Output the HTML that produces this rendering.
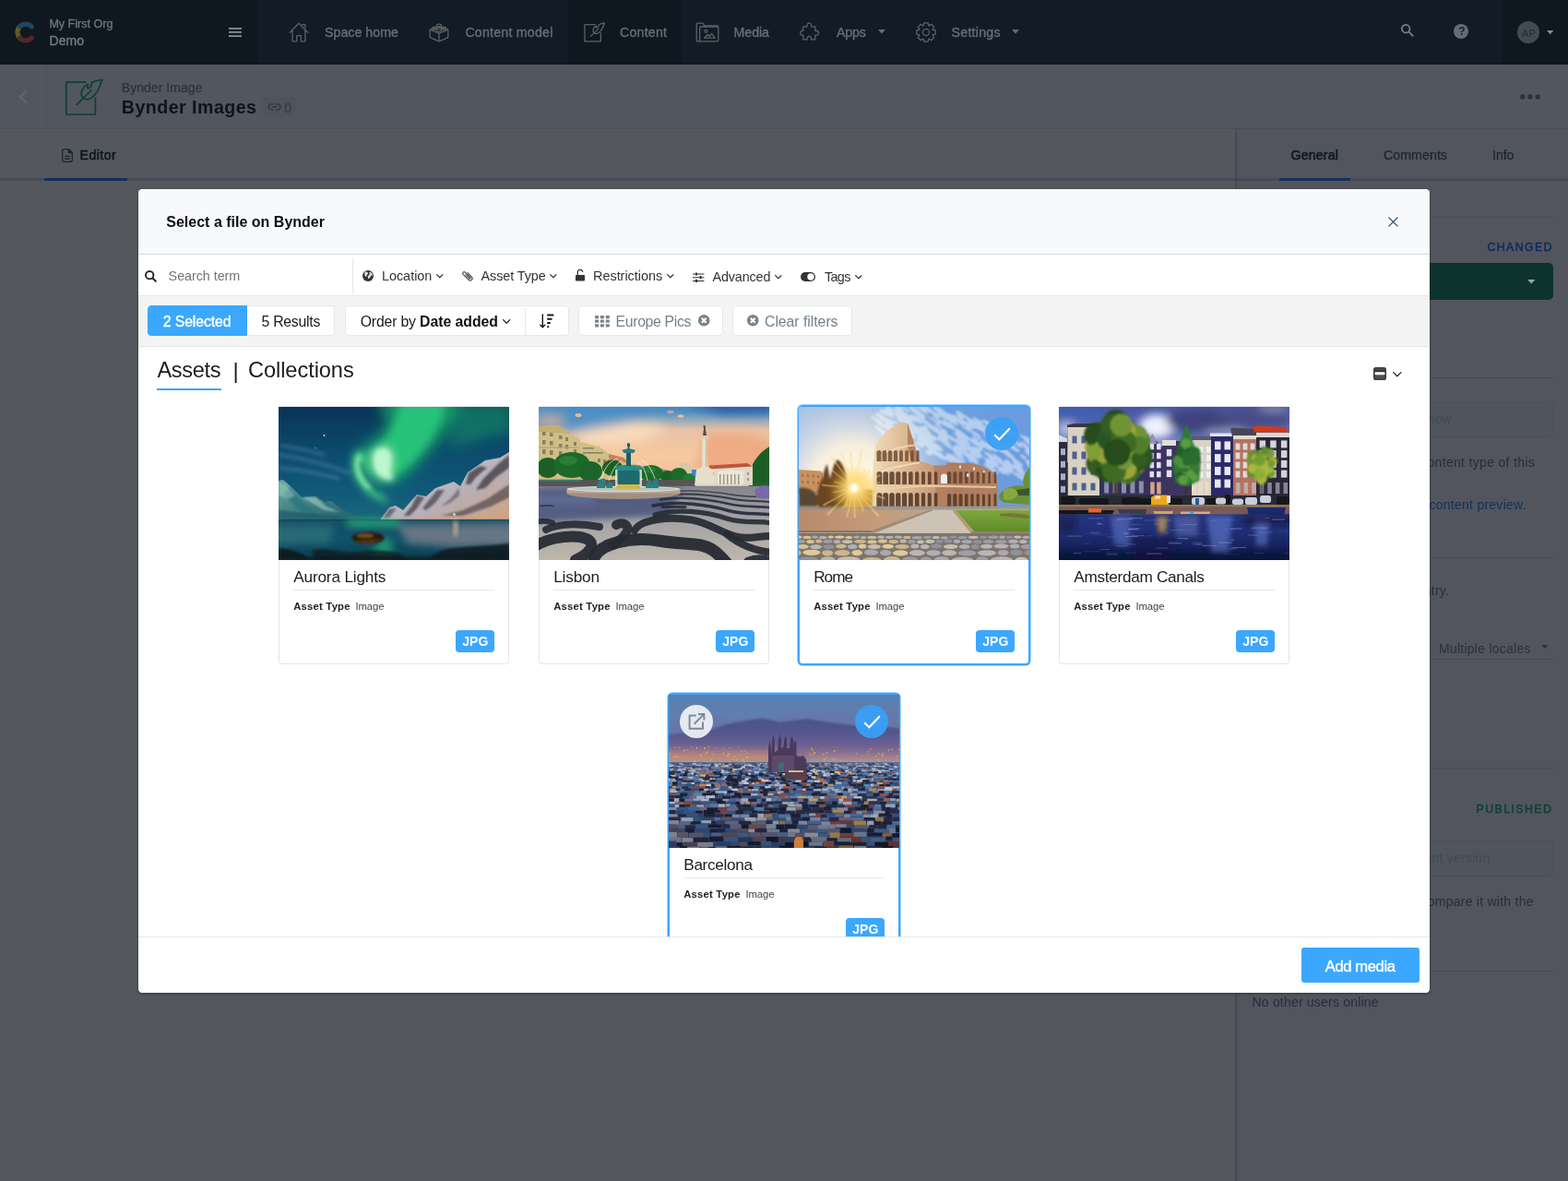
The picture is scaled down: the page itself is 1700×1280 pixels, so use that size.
<!DOCTYPE html>
<html lang="en">
<head>
<meta charset="utf-8">
<title>Bynder Images – Contentful</title>
<meta name="viewport" content="width=1700">
<style>
*{box-sizing:border-box;margin:0;padding:0}
html,body{width:1700px;height:1280px;overflow:hidden;background:#54585c}
body{position:relative;font-family:"Liberation Sans",Arial,sans-serif;font-size:14px;color:#000;-webkit-font-smoothing:antialiased}
.a,span.t,div.a,svg.a{position:absolute}
span,h1,h2,h3{position:absolute;white-space:nowrap;display:block;font-weight:400}
svg{position:absolute;display:block;overflow:visible}
i.l{position:absolute;display:block}

#nav{will-change:transform;position:absolute;left:0;top:0;width:1700px;height:70px;background:#121c26}
#nav .dk{position:absolute;top:0;height:70px;background:#0f1821}

#hdr{will-change:transform;position:absolute;left:0;top:70px;width:1700px;height:70px;background:#52565f;border-bottom:1px solid #484d55}
#tabs{will-change:transform;position:absolute;left:0;top:140px;width:1340px;height:56px;background:#54585c;border-bottom:3px solid #454c55}
#side{will-change:transform;position:absolute;left:1340px;top:140px;width:360px;height:1140px;background:#52555e;border-left:1px solid #3f474e;box-shadow:-1px 0 0 rgba(40,50,56,.22)}
#stabs{position:absolute;left:0;top:0;width:359px;height:56px;border-bottom:3px solid #454c55}
.hl{position:absolute;left:16px;width:327px;height:1px;background:#484c55}
.sh{font-size:12px;letter-spacing:1.2px;color:#3a424c;font-weight:700}
.sbox{position:absolute;left:16px;width:327px;border:1px solid #4b4f58;border-radius:6px;background:#50545d}

#modal{will-change:transform;position:absolute;left:150px;top:205px;width:1400px;height:871px;background:#fff;border-radius:4.500px;overflow:hidden;box-shadow:0 1px 3px rgba(0,0,0,.4)}
#mh{position:absolute;left:0;top:0;width:1400px;height:71px;background:#f8f9fb;border-bottom:1px solid #d3dae0}
#fb{position:absolute;left:0;top:71px;width:1400px;height:45px;background:#fff;border-bottom:1px solid #e5e8ee}
#tb{position:absolute;left:0;top:116px;width:1400px;height:55px;background:#f4f4f4;border-bottom:1px solid #e3e6ec}
.btn{position:absolute;top:10px;height:33px;background:#fff;border:1px solid #e4e7ee;border-radius:4px}
#grid{position:absolute;left:0;top:171px;width:1400px;height:639px;overflow:hidden}
.card{position:absolute;width:250px;height:280px;background:#fff;border:1px solid #e3e5ee;border-radius:4px}
.card .ph{position:absolute;left:-1px;top:0;width:250px;height:166px;overflow:hidden;background:#456}
.card .dv{position:absolute;left:15px;top:198px;width:218px;height:1px;background:#e6e8ef}
.card .jpg{position:absolute;left:191px;top:242px;width:42px;height:24px;border-radius:4px;background:#3ba7ff}
.card.sel{box-shadow:0 0 0 1.500px #3ba7ff;border-color:#3ba7ff;border-radius:4px}
.chk{position:absolute;left:201px;top:11px;width:36px;height:36px;border-radius:50%;background:rgba(57,160,246,.95)}
.ext{position:absolute;left:11px;top:11px;width:36px;height:36px;border-radius:50%;background:rgba(240,242,247,.93)}
#mf{position:absolute;left:0;top:810px;width:1400px;height:61px;background:#fff;border-top:1px solid #e3e7ec}
#add{position:absolute;left:1261px;top:11px;width:128px;height:37.500px;border-radius:3px;background:#3ba7ff}
</style>
</head>
<body>
<nav id="nav" aria-label="Main navigation">
<div class="dk" style="left:0;width:280px"></div>
<div class="dk" style="left:616px;width:123px"></div>
<div class="dk" style="left:1629px;width:71px"></div>
<svg style="left:14px;top:21px" width="26" height="28" viewBox="0 0 26 28" fill="none" stroke-linecap="round" stroke-width="5.2">
<path d="M7.6 20.300A8.900 8.900 0 0 1 7.6 7.700" stroke="#5e5e1f"/>
<path d="M7.600 7.700A8.900 8.900 0 0 1 20.300 7.900" stroke="#1e475b"/>
<path d="M7.600 20.300A8.900 8.900 0 0 0 20.300 20.100" stroke="#552529"/>
</svg>
<span style="left:53.40px;top:20px;font-size:12.5px;line-height:12.5px;letter-spacing:0.023px;-webkit-text-stroke:0.3px #70767d;color:#70767d;">My First Org</span>
<span style="left:53.60px;top:37px;font-size:14.0px;line-height:14.0px;letter-spacing:0.008px;-webkit-text-stroke:0.35px #757b82;color:#757b82;">Demo</span>
<svg style="left:248px;top:30px" width="14" height="10" viewBox="0 0 14 10"><path d="M0 0h14v1.7H0zM0 4.1h14v1.7H0zM0 8.2h14v1.7H0z" fill="#8a8f95"/></svg>
<svg style="left:313px;top:24px" width="22" height="22" viewBox="0 0 22 22" fill="none" stroke="#5c6167" stroke-width="1.300" stroke-linejoin="round" stroke-linecap="round">
<path d="M1.2 11.2L11 1.3l9.8 9.9"/><path d="M4.1 8.6v12.3h4.6v-6.3h4.6v6.3h4.6V8.6"/><path d="M14.6 2.6h3.3v3.6"/></svg>
<span style="left:352.00px;top:28px;font-size:14.2px;line-height:14.2px;letter-spacing:0.028px;-webkit-text-stroke:0.35px #696d73;color:#696d73;">Space home</span>
<svg style="left:465px;top:24px" width="22" height="22" viewBox="0 0 22 22" fill="none" stroke="#5c6167" stroke-width="1.300" stroke-linejoin="round">
<path d="M1.2 8.2l9.8-3.4 9.8 3.4v8.4L11 20.8 1.2 16.6z"/><path d="M1.2 8.2L11 12.2l9.8-4M11 12.2v8.6"/>
<ellipse cx="11" cy="3.6" rx="2.6" ry="1.5"/><ellipse cx="6" cy="6.6" rx="2.4" ry="1.4"/><ellipse cx="16" cy="6.6" rx="2.4" ry="1.4"/><ellipse cx="11" cy="8.4" rx="2.6" ry="1.5"/></svg>
<span style="left:504.40px;top:28px;font-size:14.2px;line-height:14.2px;letter-spacing:0.219px;-webkit-text-stroke:0.35px #696d73;color:#696d73;">Content model</span>
<svg style="left:633px;top:24px" width="23" height="22" viewBox="0 0 42 42" preserveAspectRatio="none" fill="none" stroke="#5c6167" stroke-width="2.400" stroke-linejoin="round" stroke-linecap="round">
<path d="M22.800 5.100H1.800v34.900h31.600V22.200"/><path d="M40.900 2.300C38 2.600 33 3.600 29.600 5.300L28.900 8.800C28.400 10.200 27.200 11.300 26.100 11.600L24.700 11.200L24.900 7.400C22.500 8.500 19.800 11.500 18.600 14.800C17.600 17.800 18.400 20.600 20 21.900C21.200 23 22.400 23.600 23.800 23.800C25.600 23.900 27.400 23.200 28.500 22.400C30.400 21.200 32 19.600 33.100 18.200C34.800 16.400 36 14.200 36.900 12.100C38.400 9 39.600 5.600 40.900 2.300Z"/><path d="M28.900 14L13.200 29.400"/></svg>
<span style="left:672.00px;top:28px;font-size:14.2px;line-height:14.2px;letter-spacing:0.208px;-webkit-text-stroke:0.35px #696d73;color:#696d73;">Content</span>
<svg style="left:754px;top:24px" width="26" height="22" viewBox="0 0 26 22" fill="none" stroke="#5c6167" stroke-width="1.300" stroke-linejoin="round" stroke-linecap="round">
<path d="M4.600 20.800H2.400c-.7 0-1.200-.5-1.200-1.200V2.400c0-.7.5-1.200 1.200-1.200h5.400c.7 0 1.200.5 1.200 1.200v1.400h14.600c.7 0 1.200.5 1.200 1.200"/><rect x="4.600" y="5.000" width="20.200" height="15.800" rx="1.200"/><circle cx="11.400" cy="9.800" r="1.500"/><path d="M9.600 17.200l3.600-3.800 2 2 2.400-3 3.600 4.800z"/></svg>
<span style="left:795.60px;top:28px;font-size:14.2px;line-height:14.2px;letter-spacing:-0.072px;-webkit-text-stroke:0.35px #696d73;color:#696d73;">Media</span>
<svg style="left:867px;top:24px" width="22" height="22" viewBox="0 0 22 22" fill="none" stroke="#5c6167" stroke-width="1.300" stroke-linejoin="round" stroke-linecap="round">
<path d="M8 4.8C7.400 2.800 8.600 1.200 10.300 1.200s2.900 1.600 2.300 3.600h4.200v4.600c2-.6 3.800.5 3.800 2.300s-1.800 2.900-3.800 2.300v4.800h-4.400c.6-2-.4-3.400-2.100-3.400s-2.700 1.400-2.100 3.400H3.800V14c-2 .6-3-.6-3-2.300s1-2.900 3-2.300V4.800z"/></svg>
<span style="left:907.00px;top:28px;font-size:14.2px;line-height:14.2px;letter-spacing:-0.125px;-webkit-text-stroke:0.35px #696d73;color:#696d73;">Apps</span>
<svg style="left:952px;top:32px" width="8" height="4.5" viewBox="0 0 8 4.5"><path d="M0 0H8L4.0 4.5Z" fill="#696d73"/></svg>
<svg style="left:992.5px;top:23.7px" width="22" height="22" viewBox="0 0 22 22" fill="none" stroke="#5c6167" stroke-width="1.300" stroke-linejoin="round"><path d="M8.93 0.81L13.07 0.81L13.75 3.70L14.22 3.90L16.75 2.33L19.67 5.25L18.10 7.78L18.30 8.25L21.19 8.93L21.19 13.07L18.30 13.75L18.10 14.22L19.67 16.75L16.75 19.67L14.22 18.10L13.75 18.30L13.07 21.19L8.93 21.19L8.25 18.30L7.78 18.10L5.25 19.67L2.33 16.75L3.90 14.22L3.70 13.75L0.81 13.07L0.81 8.93L3.70 8.25L3.90 7.78L2.33 5.25L5.25 2.33L7.78 3.90L8.25 3.70Z"/><circle cx="11" cy="11" r="3.6"/></svg>
<span style="left:1031.60px;top:28px;font-size:14.2px;line-height:14.2px;letter-spacing:0.241px;-webkit-text-stroke:0.35px #696d73;color:#696d73;">Settings</span>
<svg style="left:1097px;top:32px" width="8" height="4.5" viewBox="0 0 8 4.5"><path d="M0 0H8L4.0 4.5Z" fill="#696d73"/></svg>
<svg style="left:1518px;top:25px" width="16" height="16" viewBox="0 0 16 16" fill="none" stroke="#7a8087" stroke-width="1.7" stroke-linecap="round"><circle cx="6.2" cy="6.2" r="4.300"/><path d="M9.600 9.600l4.200 4.200"/></svg>
<div class="a" style="left:1576px;top:25.800px;width:16.200px;height:16.200px;border-radius:50%;background:#666c73"></div>
<span style="left:1581.30px;top:28px;font-size:12.0px;line-height:12.0px;font-weight:700;color:#121c26;">?</span>
<div class="a" style="left:1644.800px;top:22.800px;width:24.400px;height:24.400px;border-radius:50%;background:#434a52"></div>
<span style="left:1649.40px;top:31px;font-size:11.5px;line-height:11.5px;letter-spacing:0.287px;color:#252d36;">AP</span>
<svg style="left:1677px;top:32.8px" width="7.4" height="4.2" viewBox="0 0 7.4 4.2"><path d="M0 0H7.4L3.7 4.2Z" fill="#8a8f95"/></svg>
</nav><header id="hdr">
<svg style="left:19.500px;top:27px" width="11" height="16" viewBox="0 0 11 16" fill="none" stroke="#626870" stroke-width="1.8"><path d="M9.600 .8L1.600 8l8 7.200"/></svg>
<i class="l" style="left:50px;top:0;width:1px;height:69px;background:#4d525a"></i>
<svg style="left:70px;top:14px" width="42" height="42" viewBox="0 0 42 42" fill="none" stroke="#0b4231" stroke-width="1.700" stroke-linejoin="round" stroke-linecap="round">
<path d="M22.800 5.100H1.800v34.900h31.600V22.200"/><path d="M40.900 2.300C38 2.600 33 3.600 29.600 5.300L28.900 8.800C28.400 10.200 27.200 11.300 26.100 11.600L24.700 11.200L24.900 7.400C22.500 8.500 19.800 11.500 18.600 14.800C17.600 17.800 18.400 20.600 20 21.900C21.200 23 22.400 23.600 23.800 23.800C25.600 23.900 27.400 23.200 28.500 22.400C30.400 21.200 32 19.600 33.100 18.200C34.800 16.400 36 14.200 36.900 12.100C38.400 9 39.600 5.600 40.900 2.300Z"/><path d="M28.900 14L13.200 29.400"/></svg>
<span style="left:131.75px;top:18px;font-size:14.0px;line-height:14.0px;letter-spacing:0.051px;-webkit-text-stroke:0.2px #2a323c;color:#2a323c;">Bynder Image</span>
<h1 style="left:131.75px;top:37px;font-size:19.6px;line-height:19.6px;font-weight:700;letter-spacing:0.479px;color:#0c141d;">Bynder Images</h1>
<div class="a" style="left:283px;top:35.500px;width:37.500px;height:20px;border-radius:4px;background:#4f535c"></div>
<svg style="left:289.500px;top:42px" width="15" height="8" viewBox="0 0 15 8" fill="none" stroke="#2f3741" stroke-width="1.4" stroke-linecap="round"><path d="M6 .9H4.200a3.100 3.100 0 0 0 0 6.200H6M9 .9h1.800a3.100 3.100 0 0 1 0 6.200H9M4.800 4h5.400"/></svg>
<span style="left:308.25px;top:40px;font-size:14.0px;line-height:14.0px;color:#2f3741;">0</span>
<svg style="left:1648px;top:32px" width="22" height="6" viewBox="0 0 22 6" fill="#2a323c"><circle cx="2.800" cy="3" r="2.700"/><circle cx="11" cy="3" r="2.700"/><circle cx="19.200" cy="3" r="2.700"/></svg>
</header>
<div id="tabs">
<svg style="left:67px;top:20.500px" width="12" height="15" viewBox="0 0 12 15" fill="none" stroke="#1a232e" stroke-width="1.3" stroke-linejoin="round"><path d="M.7 2.200c0-.8.700-1.500 1.500-1.500h5.300l3.800 3.800v8.300c0 .8-.7 1.500-1.500 1.500H2.200c-.8 0-1.500-.7-1.500-1.500z"/><path d="M7.400 .9v3.700h3.700" fill="#1a232e"/><path d="M3.200 8.300h5.600M3.200 11h5.600"/></svg>
<span style="left:86.50px;top:21px;font-size:14.2px;line-height:14.2px;letter-spacing:0.447px;-webkit-text-stroke:0.55px #0f1822;color:#0f1822;">Editor</span>
<i class="l" style="left:48px;top:53px;width:90px;height:3px;background:#10305c"></i>
</div>
<aside id="side" aria-label="Entry sidebar">
<div id="stabs">
<span style="left:58.50px;top:21px;font-size:14.2px;line-height:14.2px;letter-spacing:0.167px;-webkit-text-stroke:0.55px #0f1822;color:#0f1822;">General</span>
<span style="left:159.00px;top:21px;font-size:14.2px;line-height:14.2px;letter-spacing:0.054px;-webkit-text-stroke:0.2px #1b242e;color:#1b242e;">Comments</span>
<span style="left:277.00px;top:21px;font-size:14.2px;line-height:14.2px;letter-spacing:-0.062px;-webkit-text-stroke:0.2px #1b242e;color:#1b242e;">Info</span>
<i class="l" style="left:46px;top:53px;width:77px;height:3px;background:#10305c"></i>
</div>
<span class="sh" style="left:16.50px;top:76px;font-size:12.0px;line-height:12.0px;font-weight:700;color:#3a424c;">STATUS</span>
<i class="hl" style="top:95.0px"></i>
<span style="left:271.50px;top:122px;font-size:12.4px;line-height:12.4px;letter-spacing:1.333px;-webkit-text-stroke:0.45px #0d2a5e;color:#0d2a5e;">CHANGED</span>
<div class="a" style="left:16px;top:145px;width:327px;height:39.500px;border-radius:5px;background:#0d332d"></div>
<svg style="left:314.79999999999995px;top:162.8px" width="8.500" height="4.600" viewBox="0 0 8.500 4.600"><path d="M0 0h8.500L4.250 4.600z" fill="#98a3a5"/></svg>
<span class="sh" style="left:16.50px;top:250px;font-size:12.0px;line-height:12.0px;font-weight:700;color:#3a424c;">PREVIEW</span>
<i class="hl" style="top:269.0px"></i>
<div class="sbox" style="top:294.5px;height:39px"></div>
<span style="left:145.50px;top:307px;font-size:14.0px;line-height:14.0px;letter-spacing:0.074px;color:#434a53;">Open preview</span>
<span style="left:16.50px;top:354px;font-size:14.0px;line-height:14.0px;letter-spacing:0.316px;color:#262e38;">No preview is set up for the content type of this</span>
<span style="left:16.50px;top:377px;font-size:14.0px;line-height:14.0px;color:#262e38;">entry.</span>
<span style="left:16.50px;top:400px;font-size:14.0px;line-height:14.0px;letter-spacing:0.254px;color:#10305c;">Click here to set up a custom content preview.</span>
<span class="sh" style="left:16.50px;top:445px;font-size:12.0px;line-height:12.0px;font-weight:700;color:#3a424c;">LINKS</span>
<i class="hl" style="top:464.0px"></i>
<span style="left:16.50px;top:493px;font-size:14.0px;line-height:14.0px;letter-spacing:0.282px;color:#262e38;">No other entries link to this entry.</span>
<span class="sh" style="left:16.50px;top:556px;font-size:12.0px;line-height:12.0px;font-weight:700;color:#3a424c;">TRANSLATION</span>
<span style="left:219.00px;top:556px;font-size:14.0px;line-height:14.0px;letter-spacing:0.254px;color:#2a323c;">Multiple locales</span>
<svg style="left:330px;top:559.3px" width="7.600" height="4" viewBox="0 0 7.600 4"><path d="M0 0h7.600L3.800 4z" fill="#2a323c"/></svg>
<i class="hl" style="top:574.3px"></i>
<span class="sh" style="left:16.50px;top:673px;font-size:12.0px;line-height:12.0px;font-weight:700;color:#3a424c;">VERSIONS</span>
<i class="hl" style="top:692.3px"></i>
<span style="left:259.50px;top:731px;font-size:12.4px;line-height:12.4px;letter-spacing:1.398px;-webkit-text-stroke:0.45px #0a4233;color:#0a4233;">PUBLISHED</span>
<div class="sbox" style="top:770.5px;height:39px"></div>
<span style="left:84.00px;top:783px;font-size:14.0px;line-height:14.0px;letter-spacing:0.282px;color:#434a53;">Compare with current version</span>
<span style="left:16.50px;top:830px;font-size:14.0px;line-height:14.0px;letter-spacing:0.247px;color:#262e38;">Select a previous version to compare it with the</span>
<span style="left:16.50px;top:854px;font-size:14.0px;line-height:14.0px;color:#262e38;">current version of this entry.</span>
<span class="sh" style="left:16.50px;top:893px;font-size:12.0px;line-height:12.0px;font-weight:700;color:#3a424c;">USERS</span>
<i class="hl" style="top:912.3px"></i>
<span style="left:16.50px;top:939px;font-size:14.0px;line-height:14.0px;letter-spacing:0.197px;color:#262e38;">No other users online</span>
</aside><div id="modal" role="dialog" aria-modal="true" aria-label="Select a file on Bynder">
<div id="mh">
<h2 style="left:30.25px;top:28px;font-size:16.0px;line-height:16.0px;font-weight:700;letter-spacing:0.006px;color:#0a0e14;">Select a file on Bynder</h2>
<svg style="left:1354.500px;top:29.500px" width="11" height="11" viewBox="0 0 11 11" fill="none" stroke="#2b4a6b" stroke-width="1.300"><path d="M.6 .6l9.800 9.800M10.400 .6L.6 10.400"/></svg>
</div>
<div id="fb">
<svg style="left:7.100px;top:16.500px" width="13" height="13" viewBox="0 0 13 13" fill="none" stroke="#222" stroke-width="1.900" stroke-linecap="round"><circle cx="5.200" cy="5.200" r="4.200"/><path d="M8.500 8.500l3.400 3.300"/></svg>
<span style="left:32.60px;top:16px;font-size:14.4px;line-height:14.4px;letter-spacing:-0.064px;color:#757575;">Search term</span>
<i class="l" style="left:232px;top:4px;width:1px;height:38px;background:#e4e7ee"></i>
<svg style="left:242.600px;top:17.300px" width="12" height="12" viewBox="0 0 12 12"><circle cx="6" cy="6" r="6" fill="#333"/><path d="M3.200 1.600c1.200-.2 2 .4 2.600 1.200.6.800-.4 1.400-1 2.200-.5.700.2 1.600-.6 1.800-.8.200-1.400-.8-1.800-1.600-.4-.8-.2-2.800.8-3.600zM7.400 2.400c.8-.6 2-.2 2.800.8.600.8.800 1.800.6 2.600-.6.400-1-.6-1.600-.2-.6.400-.2 1.400-.8 2-.6.600-1.400 1.800-2.200 1.400-.6-.4.200-1.200-.2-1.800-.4-.6-.2-1.400.6-1.800.8-.4 1.400-.8 1-1.600-.2-.6-.6-1-.2-1.400z" fill="#fff" opacity=".85"/></svg>
<span style="left:263.90px;top:16px;font-size:14.4px;line-height:14.4px;letter-spacing:0.009px;color:#333;">Location</span>
<svg style="left:322.5px;top:21.4px" width="7.6" height="4.4" viewBox="0 0 7.6 4.4" fill="none" stroke="#333" stroke-width="1.2" stroke-linecap="round" stroke-linejoin="round"><path d="M.6 .6L3.8 3.8000000000000003L7.0 .6"/></svg>
<svg style="left:350.500px;top:17.200px" width="12" height="12" viewBox="-6 -6 12 12" fill="none" stroke="#4c4c4c" stroke-width="1.150" stroke-linecap="round"><path transform="rotate(-45)" d="M2.300-2.500V3.900A2.300 2.300 0 0 1-2.300 3.900V-4.600A1.550 1.550 0 0 1 .8-4.600V3.300A.75.75 0 0 1-.7 3.300V-2.300"/></svg>
<span style="left:371.60px;top:16px;font-size:14.4px;line-height:14.4px;letter-spacing:-0.089px;color:#333;">Asset Type</span>
<svg style="left:446.0px;top:21.4px" width="7.6" height="4.4" viewBox="0 0 7.6 4.4" fill="none" stroke="#333" stroke-width="1.2" stroke-linecap="round" stroke-linejoin="round"><path d="M.6 .6L3.8 3.8000000000000003L7.0 .6"/></svg>
<svg style="left:473.700px;top:16px" width="10" height="12.500" viewBox="0 0 10 12.500"><rect x="0" y="6" width="10" height="6.500" rx=".8" fill="#333"/><path d="M2.300 6V3.400a2.700 2.700 0 0 1 5.400-.6" fill="none" stroke="#333" stroke-width="1.300"/></svg>
<span style="left:493.10px;top:16px;font-size:14.4px;line-height:14.4px;letter-spacing:-0.017px;color:#333;">Restrictions</span>
<svg style="left:572.6px;top:21.4px" width="7.6" height="4.4" viewBox="0 0 7.6 4.4" fill="none" stroke="#333" stroke-width="1.2" stroke-linecap="round" stroke-linejoin="round"><path d="M.6 .6L3.8 3.8000000000000003L7.0 .6"/></svg>
<svg style="left:600.700px;top:18.600px" width="12.400" height="11.400" viewBox="0 0 12.400 11.400" fill="#333"><path d="M0 1.500h12.400v1H0zM0 5.200h12.400v1H0zM0 8.900h12.400v1H0z"/><rect x="3" y=".4" width="2" height="3.200" rx=".5"/><rect x="7.600" y="4.100" width="2" height="3.200" rx=".5"/><rect x="3" y="7.800" width="2" height="3.200" rx=".5"/></svg>
<span style="left:622.50px;top:17px;font-size:14.4px;line-height:14.4px;letter-spacing:-0.152px;color:#333;">Advanced</span>
<svg style="left:689.6px;top:21.9px" width="7.6" height="4.4" viewBox="0 0 7.6 4.4" fill="none" stroke="#333" stroke-width="1.2" stroke-linecap="round" stroke-linejoin="round"><path d="M.6 .6L3.8 3.8000000000000003L7.0 .6"/></svg>
<svg style="left:717.900px;top:19px" width="16" height="10" viewBox="0 0 16 10"><rect width="16" height="10" rx="5" fill="#333"/><circle cx="11" cy="5" r="3.700" fill="#fff"/></svg>
<span style="left:743.90px;top:17px;font-size:14.4px;line-height:14.4px;letter-spacing:-0.612px;color:#333;">Tags</span>
<svg style="left:777.0px;top:21.9px" width="7.6" height="4.4" viewBox="0 0 7.6 4.4" fill="none" stroke="#333" stroke-width="1.2" stroke-linecap="round" stroke-linejoin="round"><path d="M.6 .6L3.8 3.8000000000000003L7.0 .6"/></svg>
</div>
<div id="tb">
<div class="btn" style="left:10px;width:108px;background:#3ba7ff;border-color:#3ba7ff;border-radius:4px 0 0 4px"></div>
<div class="btn" style="left:118px;width:95px;border-left:0;border-radius:0 4px 4px 0"></div>
<span style="left:26.80px;top:20px;font-size:15.8px;line-height:15.8px;letter-spacing:-0.110px;-webkit-text-stroke:0.35px #fff;color:#fff;">2 Selected</span>
<span style="left:133.50px;top:20px;font-size:15.8px;line-height:15.8px;letter-spacing:-0.259px;color:#1a1a1a;">5 Results</span>
<div class="btn" style="left:224px;width:243px"></div>
<i class="l" style="left:419px;top:11.500px;width:1px;height:31px;background:#e4e7ee"></i>
<span style="left:240.75px;top:20px;font-size:15.8px;line-height:15.8px;letter-spacing:-0.170px;color:#1a1a1a;">Order by</span>
<span style="left:305.00px;top:20px;font-size:15.8px;line-height:15.8px;font-weight:700;letter-spacing:-0.021px;color:#111;">Date added</span>
<svg style="left:394.5px;top:25.0px" width="8.4" height="4.8" viewBox="0 0 8.4 4.8" fill="none" stroke="#222" stroke-width="1.3" stroke-linecap="round" stroke-linejoin="round"><path d="M.6 .6L4.2 4.2L7.800000000000001 .6"/></svg>
<svg style="left:435.300px;top:18.600px" width="15.500" height="16.500" viewBox="0 0 15.500 16.500" fill="none" stroke="#1a1a1a" stroke-width="1.400"><path d="M3.300 .3v14.300M.5 11.700l2.800 3 2.800-3" stroke-linejoin="round"/><path d="M8.200 1.400h7.100M8.200 5.700h5.300M8.200 10h3.500M8.200 14.300h2" stroke-width="2"/></svg>
<div class="btn" style="left:477px;width:157px"></div>
<svg style="left:494.800px;top:21px" width="15.800" height="12.400" viewBox="0 0 15.500 11" preserveAspectRatio="none" fill="#77838c"><rect width="4" height="2.800" rx=".4"/><rect x="5.750" width="4" height="2.800" rx=".4"/><rect x="11.500" width="4" height="2.800" rx=".4"/><rect y="4.100" width="4" height="2.800" rx=".4"/><rect x="5.750" y="4.100" width="4" height="2.800" rx=".4"/><rect x="11.500" y="4.100" width="4" height="2.800" rx=".4"/><rect y="8.200" width="4" height="2.800" rx=".4"/><rect x="5.750" y="8.200" width="4" height="2.800" rx=".4"/><rect x="11.500" y="8.200" width="4" height="2.800" rx=".4"/></svg>
<span style="left:517.50px;top:20px;font-size:15.8px;line-height:15.8px;letter-spacing:-0.319px;color:#73808a;">Europe Pics</span>
<svg style="left:607.0px;top:20.1px" width="12.5" height="12.5" viewBox="0 0 12 12"><circle cx="6" cy="6" r="6" fill="#77838c"/><path d="M3.700 3.700l4.600 4.600M8.300 3.700L3.700 8.300" stroke="#fff" stroke-width="2" stroke-linecap="butt"/></svg>
<div class="btn" style="left:644px;width:130px"></div>
<svg style="left:659.5px;top:20.1px" width="12.5" height="12.5" viewBox="0 0 12 12"><circle cx="6" cy="6" r="6" fill="#77838c"/><path d="M3.700 3.700l4.600 4.600M8.300 3.700L3.700 8.300" stroke="#fff" stroke-width="2" stroke-linecap="butt"/></svg>
<span style="left:679.00px;top:20px;font-size:15.8px;line-height:15.8px;letter-spacing:-0.031px;color:#73808a;">Clear filters</span>
</div>
<div id="grid">
<span style="left:20.50px;top:14px;font-size:23.6px;line-height:23.6px;letter-spacing:-0.362px;color:#1c1c1c;">Assets</span>
<span style="left:102.40px;top:14px;font-size:24.0px;line-height:24.0px;color:#1c1c1c;">|</span>
<span style="left:119.00px;top:14px;font-size:23.6px;line-height:23.6px;letter-spacing:-0.069px;color:#1c1c1c;">Collections</span>
<i class="l" style="left:20px;top:45.30000000000001px;width:70px;height:2.200px;background:#3ba7ff"></i>
<svg style="left:1338.500px;top:21.800px" width="14" height="14" viewBox="0 0 14 14"><rect width="14" height="14" rx="2.600" fill="#3c3c3c"/><rect x="1.600" y="1.400" width="10.800" height="11.200" rx="1.200" fill="#4e4e4e"/><rect x="1.600" y="3.600" width="10.800" height="1.400" fill="#2a2a2a"/><rect x="1.600" y="5.300" width="10.800" height="3" rx=".8" fill="#fff"/></svg>
<svg style="left:1359.5px;top:26.5px" width="9.6" height="5.4" viewBox="0 0 9.6 5.4" fill="none" stroke="#222" stroke-width="1.3" stroke-linecap="round" stroke-linejoin="round"><path d="M.6 .6L4.8 4.800000000000001L9.0 .6"/></svg>
<div class="card" style="left:152px;top:64px">
<div class="ph"><svg role="img" aria-label="Aurora Lights thumbnail" width="250" height="166" viewBox="0 0 250 166" preserveAspectRatio="none">
<defs>
<linearGradient id="auSky" x1="0" y1="0" x2="0" y2="1"><stop offset="0" stop-color="#093456"/><stop offset=".45" stop-color="#0d4d70"/><stop offset=".75" stop-color="#105a78"/><stop offset="1" stop-color="#1a667c"/></linearGradient>
<linearGradient id="auWat" x1="0" y1="0" x2="0" y2="1"><stop offset="0" stop-color="#114e64"/><stop offset=".5" stop-color="#10526a"/><stop offset="1" stop-color="#0b3a4c"/></linearGradient>
<linearGradient id="auMR" x1="0" y1="0" x2="1" y2="1"><stop offset="0" stop-color="#cfd4e2"/><stop offset=".6" stop-color="#b5b0ba"/><stop offset="1" stop-color="#cfa27c"/></linearGradient>
<linearGradient id="auML" x1="0" y1="0" x2="1" y2="1"><stop offset="0" stop-color="#6aa8a0"/><stop offset=".5" stop-color="#3f8082"/><stop offset="1" stop-color="#1f5866"/></linearGradient>
<filter id="auB8" x="-30%" y="-30%" width="160%" height="160%"><feGaussianBlur stdDeviation="8"/></filter>
<filter id="auB4" x="-30%" y="-30%" width="160%" height="160%"><feGaussianBlur stdDeviation="4"/></filter>
<filter id="auB2" x="-30%" y="-30%" width="160%" height="160%"><feGaussianBlur stdDeviation="2"/></filter>
<filter id="auB1" x="-30%" y="-30%" width="160%" height="160%"><feGaussianBlur stdDeviation=".8"/></filter>
</defs>
<rect width="250" height="123" fill="url(#auSky)"/>
<!-- wispy clouds left -->
<g filter="url(#auB2)" opacity=".35" fill="none" stroke="#8fb4d0" stroke-width="3"><path d="M0 52C25 55 50 62 78 72"/><path d="M0 66C20 68 45 72 66 78"/><path d="M2 42C20 44 35 48 50 52"/></g>
<!-- aurora glow -->
<g filter="url(#auB8)">
<path d="M108 -8L200 -8C190 18 172 40 154 58C142 72 128 84 112 82C94 80 82 68 86 54C92 40 112 32 120 18Z" fill="#16ae6b" opacity=".85"/>
<path d="M195 -8L255 -8L255 30C235 28 210 40 185 45Z" fill="#109a6a" opacity=".55"/>
</g>
<g filter="url(#auB4)">
<path d="M132 -5L182 -5C176 22 158 48 140 64C128 76 114 80 106 76C96 68 96 52 106 44C118 36 128 18 132 -5Z" fill="#2bc97d" opacity=".85"/>
<path d="M84 48C76 62 82 82 98 94C108 101 116 104 120 104C114 96 104 90 98 80C92 70 92 58 96 50Z" fill="#4cd98c" opacity=".9"/>
<path d="M102 46C112 40 122 42 124 52C126 62 120 72 126 78C118 84 106 78 102 68C99 60 99 52 102 46Z" fill="#9bedb8" opacity=".9"/>
</g>
<g filter="url(#auB2)">
<path d="M106 48C114 42 122 46 122 56C122 64 118 72 124 78C114 80 106 72 104 64C103 58 103 52 106 48Z" fill="#c8fad6" opacity=".8"/>
<path d="M88 52C82 64 86 78 98 88" fill="none" stroke="#8cf0b0" stroke-width="4" opacity=".8"/>
<path d="M89 60C90 74 100 84 110 92" fill="none" stroke="#0f5a6c" stroke-width="3.500" opacity=".7"/>
</g>
<!-- stars -->
<circle cx="49.500" cy="31" r=".9" fill="#cfe3ee"/><circle cx="40" cy="44.300" r=".6" fill="#a9c9dc"/>
<!-- left mountains -->
<path d="M0 80L5 79L12 85L25 98L40 97L50 103L57 102L70 112L84 118L96 122.500L0 122.500Z" fill="url(#auML)"/>
<g filter="url(#auB1)"><path d="M12 86L24 100L44 118L30 118L14 104L6 96Z" fill="#2c7480" opacity=".8"/><path d="M50 103L72 120L60 120L44 108Z" fill="#256a78" opacity=".8"/><path d="M0 112L40 116L80 121L0 122Z" fill="#1d5968" opacity=".7"/><path d="M26 98L40 98L52 108L66 114L50 112L36 104Z" fill="#a6d4c8" opacity=".6"/><path d="M0 82L8 84L18 96L10 100L0 96Z" fill="#9bcdc0" opacity=".5"/></g>
<!-- right mountains -->
<path d="M110 122.500L120 109L127 107L135 112L150 95L160 97L170 88L190 81L197 86L205 71L224 58L240 55L250 49L250 122.500Z" fill="url(#auMR)"/>
<g filter="url(#auB1)" fill="#3f363c">
<path d="M206 72L218 64L226 66L214 76L208 84L203 84Z" opacity=".75"/><path d="M250 52L238 62L222 78L214 90L224 88L236 76L250 66Z" opacity=".75"/>
<path d="M150 96L158 98L150 110L142 118L136 118L144 108Z" opacity=".7"/><path d="M172 90L180 90L170 104L160 112L156 110Z" opacity=".65"/>
<path d="M250 84L226 100L200 112L176 118L200 118L230 108L250 98Z" opacity=".6"/><path d="M120 110L128 110L120 120L113 121Z" opacity=".6"/>
<path d="M196 88L186 100L176 108L186 104L196 96Z" opacity=".5"/>
</g>
<path d="M128 121L250 118L250 123L120 123Z" fill="#d8a779" opacity=".55" filter="url(#auB1)"/>
<!-- water -->
<rect y="122" width="250" height="44" fill="url(#auWat)"/>
<rect y="121.800" width="250" height="1.400" fill="#0e3f50" opacity=".7"/>
<g filter="url(#auB4)">
<path d="M-20 128L60 128L56 148L-20 150Z" fill="#4a9288" opacity=".4"/>
<path d="M128 127L270 126L270 150L190 152L140 148Z" fill="#938a92" opacity=".65"/>
<path d="M72 123L132 123L128 129L76 129Z" fill="#2fd183" opacity=".9"/>
<path d="M112 142L122 144L124 160L98 162Z" fill="#2fc47c" opacity=".6"/>
</g>
<g filter="url(#auB2)"><path d="M190 124L194 124L193.500 140L190.500 140Z" fill="#f0c79a" opacity=".8"/></g>
<circle cx="190.500" cy="116.500" r="1.200" fill="#fff3c9"/>
<!-- rock -->
<g filter="url(#auB1)"><ellipse cx="97" cy="142" rx="17.500" ry="6.500" fill="#2c1e10"/><ellipse cx="94" cy="139.500" rx="9" ry="2.400" fill="#8a5a24" opacity=".75"/><path d="M82 145L112 143L98 150Z" fill="#5e3a18" opacity=".7"/></g>
<!-- shore -->
<g filter="url(#auB1)" fill="#0c1a1c"><path d="M0 154C10 153 24 158 32 164L36 166L0 166Z"/><path d="M36 156C50 152 64 157 80 158C96 156 112 153 132 160L140 166L40 166Z" opacity=".75"/><path d="M176 156C196 150 222 152 250 148L250 166L160 166Z" opacity=".85"/><rect y="162.500" width="250" height="3.500" opacity=".8"/></g>
</svg></div>
<h3 style="left:15.25px;top:176px;font-size:17.2px;line-height:17.2px;letter-spacing:-0.172px;color:#1c1c1c;">Aurora Lights</h3>
<i class="dv"></i>
<span style="left:15.25px;top:211px;font-size:11.3px;line-height:11.3px;font-weight:700;letter-spacing:0.201px;color:#222;">Asset Type</span>
<span style="left:82.50px;top:211px;font-size:11.3px;line-height:11.3px;letter-spacing:-0.094px;color:#444;">Image</span>
<div class="jpg"><span style="left:7.30px;top:5px;font-size:14.0px;line-height:14.0px;font-weight:700;color:#fff;">JPG</span></div>
</div>
<div class="card" style="left:434px;top:64px">
<div class="ph"><svg role="img" aria-label="Lisbon thumbnail" width="250" height="166" viewBox="0 0 250 166" preserveAspectRatio="none">
<defs>
<linearGradient id="liSky" x1="0" y1="0" x2="0" y2="1"><stop offset="0" stop-color="#3f7fb8"/><stop offset=".1" stop-color="#6f9fc0"/><stop offset=".28" stop-color="#e9c3a6"/><stop offset=".6" stop-color="#f6c9a0"/><stop offset="1" stop-color="#f3b98e"/></linearGradient>
<linearGradient id="liPav" x1="0" y1="0" x2="0" y2="1"><stop offset="0" stop-color="#7f8290"/><stop offset=".3" stop-color="#9c9ba2"/><stop offset="1" stop-color="#bdb7ab"/></linearGradient>
<filter id="liB6" x="-30%" y="-30%" width="160%" height="160%"><feGaussianBlur stdDeviation="6"/></filter>
<filter id="liB3" x="-30%" y="-30%" width="160%" height="160%"><feGaussianBlur stdDeviation="3"/></filter>
<filter id="liB1" x="-30%" y="-30%" width="160%" height="160%"><feGaussianBlur stdDeviation=".7"/></filter>
<filter id="liB05" x="-30%" y="-30%" width="160%" height="160%"><feGaussianBlur stdDeviation=".45"/></filter>
</defs>
<rect width="250" height="90" fill="url(#liSky)"/>
<g filter="url(#liB6)">
<path d="M-10 -6H260V4C220 10 190 2 150 6C120 8 100 12 80 22C60 32 40 24 20 26L-10 30Z" fill="#4b8fc4" opacity=".9"/>
<path d="M150 -8H260V6L200 8Z" fill="#2a55a6" opacity=".9"/>
<path d="M180 30C210 22 240 30 260 40V70H170Z" fill="#ee9f78" opacity=".7"/>
<path d="M40 28C70 18 110 14 140 22C120 40 80 44 50 40Z" fill="#fbe0c0" opacity=".8"/>
<ellipse cx="12" cy="15" rx="16" ry="4" fill="#f1b777" opacity=".9"/>
</g>
<g filter="url(#liB1)"><ellipse cx="43" cy="9" rx="3.500" ry="2" fill="#e9b98f"/><ellipse cx="154" cy="10" rx="3.500" ry="1.800" fill="#e9b98f"/><ellipse cx="143" cy="5.500" rx="4" ry="1.800" fill="#d9a796" opacity=".8"/></g>
<!-- left buildings -->
<g filter="url(#liB05)">
<path d="M0 21L21 20L34 29L45 35L45 38L66 43L76 51L92 55L100 62L128 66L146 70L146 80L0 80Z" fill="#cfbe86"/>
<path d="M0 21L21 20L34 29L0 27Z" fill="#c3ad72"/>
<path d="M76 51L92 55L100 62L128 66L146 70L146 73L76 56Z" fill="#c9664a" opacity=".7"/>
<g fill="#6e6a58" opacity=".75"><rect x="4" y="27" width="3.500" height="4"/><rect x="12" y="28" width="3.500" height="4"/><rect x="22" y="31" width="3.500" height="4"/><rect x="29" y="33" width="3" height="4"/><rect x="4" y="36" width="3.500" height="4.500"/><rect x="12" y="37" width="3.500" height="4.500"/><rect x="22" y="40" width="3.500" height="4.500"/><rect x="29" y="41" width="3" height="4.500"/><rect x="4" y="46" width="3.500" height="5"/><rect x="12" y="47" width="3.500" height="5"/><rect x="22" y="48" width="3.500" height="5"/><rect x="38" y="38" width="3" height="4"/><rect x="38" y="46" width="3" height="4"/><rect x="48" y="44" width="12" height="1.500"/><rect x="48" y="49" width="22" height="1.500"/><rect x="64" y="56" width="3" height="4"/><rect x="70" y="57" width="3" height="4"/></g>
<path d="M0 43H44V45H0z" fill="#b9a46a" opacity=".6"/>
<path d="M134 68L146 70L146 80L134 80Z" fill="#4a8fc8"/><path d="M159 68H171V76H159z" fill="#3d86c6"/>
<path d="M153 62L160 60L166 64L166 72L153 72Z" fill="#d6c8aa"/>
</g>
<!-- trees -->
<g filter="url(#liB1)" fill="#1f6a2c">
<ellipse cx="10" cy="66" rx="12" ry="11" fill="#1c5f28"/><ellipse cx="36" cy="63" rx="20" ry="14"/><ellipse cx="56" cy="70" rx="13" ry="11" fill="#1e652a"/><ellipse cx="80" cy="66" rx="11" ry="9" fill="#1c5f28"/>
<ellipse cx="122" cy="72" rx="13" ry="9"/><ellipse cx="140" cy="76" rx="8" ry="7" fill="#1c5f28"/><ellipse cx="152" cy="74" rx="9" ry="8"/><ellipse cx="163" cy="78" rx="7" ry="5.500" fill="#257a32"/>
<path d="M252 42C240 48 234 58 230 66C224 70 224 80 228 86L252 88Z" fill="#1c5f28"/>
<ellipse cx="32" cy="58" rx="10" ry="5" fill="#38903e" opacity=".5"/><ellipse cx="120" cy="68" rx="7" ry="3.500" fill="#38903e" opacity=".5"/>
</g>
<path d="M-5 79H170V87H-5z" fill="#55544f" filter="url(#liB1)"/>
<path d="M0 78.500H46V80.500H0z" fill="#2f8f88" opacity=".7"/>
<!-- theatre + column -->
<g filter="url(#liB05)">
<path d="M185 66.500L232 63L232 85L185 85Z" fill="#e0d8c6"/><path d="M185 63.500L226 61L232 64.500L185 67.500Z" fill="#c2543a"/>
<path d="M194 70L208 67.500L222 70L222 85L194 85Z" fill="#ece6d8"/><g fill="#8c8474" opacity=".8"><rect x="196" y="73" width="1.500" height="11"/><rect x="200" y="73" width="1.500" height="11"/><rect x="204" y="73" width="1.500" height="11"/><rect x="208" y="73" width="1.500" height="11"/><rect x="212" y="73" width="1.500" height="11"/><rect x="216" y="73" width="1.500" height="11"/><rect x="226" y="71" width="2" height="3"/><rect x="188" y="71" width="2" height="3"/><rect x="226" y="77" width="2" height="3"/><rect x="188" y="77" width="2" height="3"/></g>
<path d="M169 85L171 68L177 65L177.500 33H182.500L183 65L189 68L191 85Z" fill="#e6dfcc"/>
<path d="M176 31H184V35H176z" fill="#d9d0ba"/><path d="M178.500 20C180 19 181.500 21 181 24L182 31H178L179 24Z" fill="#5a4c48"/>
<path d="M181 35H182.500V65H181z" fill="#bfb59c" opacity=".8"/>
</g>
<!-- pavement -->
<rect y="86" width="250" height="80" fill="url(#liPav)"/>
<g filter="url(#liB3)"><path d="M-20 88H156L140 118L-20 126Z" fill="#4c587e" opacity=".9"/><path d="M150 88H270V100L160 96Z" fill="#8d8a8e" opacity=".6"/><path d="M-20 96H60V106H-20z" fill="#6a78a8" opacity=".5"/></g>
<g filter="url(#liB05)" fill="none" stroke="#262a33" stroke-linecap="round">
<path d="M150 91.500C170 89.500 190 92 212 95.500C226 98 238 96.500 252 98.500" stroke-width="1.400" opacity=".8"/>
<path d="M142 95.500C166 92.500 190 96 212 100C228 103 240 101 252 103.500" stroke-width="1.900" opacity=".85"/>
<path d="M132 100.500C160 96 186 100.500 208 105.500C226 109.500 240 107 252 109.500" stroke-width="2.600" opacity=".88"/>
<path d="M134 108.500L159 108.500" stroke-width="3.200" opacity=".85"/>
<path d="M124 107C150 101.500 184 106 206 112.500C224 117.500 238 114.500 252 117" stroke-width="3.600" opacity=".9"/>
<path d="M126 117C150 110 180 113 204 121C222 127 238 123 252 126" stroke-width="5.200" opacity=".92"/>
<path d="M104 134C110 122 140 118.500 166 122.500C186 126 198 137 216 141C230 144 240 139 254 140" stroke-width="8" opacity=".94"/>
<path d="M60 164C66 148 100 140 130 145C160 150 176 146 190 156C198 162 202 168 206 172" stroke-width="13" opacity=".96"/>
<path d="M84 128C92 124 98 128 96 134C94 140 86 146 80 150" stroke-width="10" opacity=".94"/>
<path d="M-4 151C12 141 42 137 54 144C62 150 54 160 40 166" stroke-width="12" opacity=".95"/>
<path d="M8 133C24 125 50 127 66 130" stroke-width="8" opacity=".9"/>
<path d="M-4 125C4 123 10 123.500 15 125.500" stroke-width="6" opacity=".88"/>
<path d="M204 138C216 148 234 156 254 158" stroke-width="8" opacity=".94"/>
<path d="M2 107.500C8 106.500 12 106.500 16 107.500" stroke-width="1.800" opacity=".7"/>
<path d="M226 166C236 162 246 163 254 166" stroke-width="6" opacity=".9"/>
</g>
<!-- fountain basin -->
<g filter="url(#liB05)">
<ellipse cx="92" cy="93.500" rx="61.500" ry="6.500" fill="#a28f82"/>
<path d="M30.500 89H153.500V93.500H30.500z" fill="#b9a594"/>
<ellipse cx="92" cy="89" rx="61.500" ry="3.200" fill="#e6dccb"/>
<ellipse cx="92" cy="89" rx="57" ry="2.200" fill="#b8c4c0"/>
<path d="M84 82H110V89H84z" fill="#d2b64e"/>
<path d="M85 70C90 67 104 67 110 70L110 84H85Z" fill="#1f6b6c"/>
<path d="M82 65C90 62 104 62 113 65L110 69H85Z" fill="#2a8c8a"/>
<path d="M95 47H100V64H95z" fill="#1f5f66"/><path d="M90.500 47C94 45 101 45 105 47L103 50H92.500Z" fill="#2a7c80"/><path d="M96.500 39H98.500V47H96.500z" fill="#1f5f66"/><circle cx="97.500" cy="41.500" r="1.800" fill="#1f5f66"/>
<path d="M63 86C64 80 68 76 72 78C74 82 72 86 72 88H63Z" fill="#2a7f80"/><path d="M73 88C74 82 77 80 80 82L80 88Z" fill="#2a7f80"/><path d="M116 88C116 82 119 79 122 80L122 88Z" fill="#2a7f80"/><path d="M122 88C123 80 127 76 129 78L130 88Z" fill="#2a7f80"/>
<g fill="none" stroke="#f2f4ee" stroke-width=".9" opacity=".85"><path d="M68 78C72 64 78 58 86 56"/><path d="M76 80C80 68 84 62 90 58"/><path d="M126 78C122 66 118 62 112 58"/><path d="M118 80C116 70 114 66 108 60"/></g>
<path d="M83 68H85.500V86H83z" fill="#e6ede8" opacity=".8"/><path d="M109.500 68H112V86H109.500z" fill="#e6ede8" opacity=".8"/>
</g>
<path d="M234 92C236 86 244 84 250 86V99L236 98Z" fill="#7a68a8" filter="url(#liB1)"/>
</svg></div>
<h3 style="left:15.25px;top:176px;font-size:17.2px;line-height:17.2px;letter-spacing:-0.188px;color:#1c1c1c;">Lisbon</h3>
<i class="dv"></i>
<span style="left:15.25px;top:211px;font-size:11.3px;line-height:11.3px;font-weight:700;letter-spacing:0.201px;color:#222;">Asset Type</span>
<span style="left:82.50px;top:211px;font-size:11.3px;line-height:11.3px;letter-spacing:-0.094px;color:#444;">Image</span>
<div class="jpg"><span style="left:7.30px;top:5px;font-size:14.0px;line-height:14.0px;font-weight:700;color:#fff;">JPG</span></div>
</div>
<div class="card sel" style="left:716px;top:64px">
<div class="ph"><svg role="img" aria-label="Rome thumbnail" width="250" height="166" viewBox="0 0 250 166" preserveAspectRatio="none">
<defs>
<linearGradient id="roSky" x1="0" y1="0" x2="1" y2="0"><stop offset="0" stop-color="#9dbbe0"/><stop offset=".3" stop-color="#8aaedc"/><stop offset=".6" stop-color="#6f9fdc"/><stop offset="1" stop-color="#6b9be0"/></linearGradient>
<radialGradient id="roSun" cx="60" cy="88" r="120" gradientUnits="userSpaceOnUse"><stop offset="0" stop-color="#fffdf0"/><stop offset=".15" stop-color="#fff8e2"/><stop offset=".4" stop-color="#fbf1de" stop-opacity=".95"/><stop offset=".68" stop-color="#e6e6ea" stop-opacity=".5"/><stop offset="1" stop-color="#c9d6e8" stop-opacity="0"/></radialGradient>
<linearGradient id="roCol" x1="0" y1="0" x2="1" y2="0"><stop offset="0" stop-color="#f0dcba"/><stop offset=".3" stop-color="#d9b48c"/><stop offset=".65" stop-color="#b98462"/><stop offset="1" stop-color="#b7906c"/></linearGradient>
<linearGradient id="roPla" x1="0" y1="0" x2="1" y2="0"><stop offset="0" stop-color="#b98a6c"/><stop offset=".6" stop-color="#c49c7c"/><stop offset="1" stop-color="#b9a48c"/></linearGradient>
<linearGradient id="roGr" x1="0" y1="0" x2="0" y2="1"><stop offset="0" stop-color="#7fa83a"/><stop offset="1" stop-color="#5f8a2c"/></linearGradient>
<filter id="roB5" x="-30%" y="-30%" width="160%" height="160%"><feGaussianBlur stdDeviation="5"/></filter>
<filter id="roB1" x="-30%" y="-30%" width="160%" height="160%"><feGaussianBlur stdDeviation=".8"/></filter>
<filter id="roB05" x="-30%" y="-30%" width="160%" height="160%"><feGaussianBlur stdDeviation=".4"/></filter>
</defs>
<rect width="250" height="112" fill="url(#roSky)"/>
<rect width="250" height="112" fill="url(#roSun)"/>
<g fill="#fff" opacity=".5" filter="url(#roB1)"><ellipse cx="161.9" cy="41.7" rx="8.5" ry="1.7" transform="rotate(35 161.9 41.7)"/><ellipse cx="171.3" cy="43.8" rx="4.1" ry="1.8" transform="rotate(35 171.3 43.8)"/><ellipse cx="192.1" cy="59.9" rx="3.6" ry="1.5" transform="rotate(35 192.1 59.9)"/><ellipse cx="252.0" cy="73.3" rx="6.9" ry="2.0" transform="rotate(35 252.0 73.3)"/><ellipse cx="111.8" cy="-0.8" rx="6.2" ry="1.1" transform="rotate(35 111.8 -0.8)"/><ellipse cx="117.3" cy="16.9" rx="3.2" ry="1.7" transform="rotate(35 117.3 16.9)"/><ellipse cx="173.3" cy="47.9" rx="6.0" ry="2.1" transform="rotate(35 173.3 47.9)"/><ellipse cx="162.7" cy="19.7" rx="9.0" ry="2.6" transform="rotate(35 162.7 19.7)"/><ellipse cx="227.8" cy="53.2" rx="4.9" ry="1.4" transform="rotate(35 227.8 53.2)"/><ellipse cx="134.1" cy="3.5" rx="7.6" ry="1.6" transform="rotate(35 134.1 3.5)"/><ellipse cx="228.9" cy="28.1" rx="8.7" ry="2.4" transform="rotate(35 228.9 28.1)"/><ellipse cx="85.1" cy="14.4" rx="8.5" ry="1.8" transform="rotate(35 85.1 14.4)"/><ellipse cx="99.8" cy="23.9" rx="8.8" ry="2.2" transform="rotate(35 99.8 23.9)"/><ellipse cx="105.1" cy="17.2" rx="3.6" ry="1.1" transform="rotate(35 105.1 17.2)"/><ellipse cx="180.1" cy="32.9" rx="4.1" ry="2.2" transform="rotate(35 180.1 32.9)"/><ellipse cx="104.8" cy="30.8" rx="4.3" ry="1.4" transform="rotate(35 104.8 30.8)"/><ellipse cx="250.1" cy="60.7" rx="4.8" ry="2.4" transform="rotate(35 250.1 60.7)"/><ellipse cx="120.8" cy="28.8" rx="8.1" ry="2.0" transform="rotate(35 120.8 28.8)"/><ellipse cx="121.3" cy="18.1" rx="7.6" ry="1.5" transform="rotate(35 121.3 18.1)"/><ellipse cx="135.4" cy="3.7" rx="3.5" ry="1.9" transform="rotate(35 135.4 3.7)"/><ellipse cx="126.3" cy="44.9" rx="5.2" ry="1.7" transform="rotate(35 126.3 44.9)"/><ellipse cx="248.1" cy="35.7" rx="6.4" ry="2.4" transform="rotate(35 248.1 35.7)"/><ellipse cx="116.1" cy="10.0" rx="8.5" ry="2.3" transform="rotate(35 116.1 10.0)"/><ellipse cx="127.4" cy="12.8" rx="7.4" ry="2.5" transform="rotate(35 127.4 12.8)"/><ellipse cx="235.0" cy="45.1" rx="5.5" ry="1.2" transform="rotate(35 235.0 45.1)"/><ellipse cx="186.4" cy="20.9" rx="4.1" ry="2.2" transform="rotate(35 186.4 20.9)"/><ellipse cx="96.7" cy="15.8" rx="6.4" ry="2.4" transform="rotate(35 96.7 15.8)"/><ellipse cx="189.4" cy="19.9" rx="8.5" ry="1.3" transform="rotate(35 189.4 19.9)"/><ellipse cx="87.8" cy="19.0" rx="5.7" ry="1.1" transform="rotate(35 87.8 19.0)"/><ellipse cx="115.0" cy="26.8" rx="6.4" ry="1.2" transform="rotate(35 115.0 26.8)"/><ellipse cx="251.7" cy="49.2" rx="7.1" ry="1.9" transform="rotate(35 251.7 49.2)"/><ellipse cx="108.9" cy="0.7" rx="3.1" ry="2.5" transform="rotate(35 108.9 0.7)"/><ellipse cx="204.2" cy="73.1" rx="3.1" ry="2.0" transform="rotate(35 204.2 73.1)"/><ellipse cx="167.0" cy="55.0" rx="4.9" ry="2.6" transform="rotate(35 167.0 55.0)"/><ellipse cx="210.3" cy="68.2" rx="7.4" ry="2.1" transform="rotate(35 210.3 68.2)"/><ellipse cx="219.9" cy="69.4" rx="5.1" ry="2.1" transform="rotate(35 219.9 69.4)"/><ellipse cx="238.1" cy="65.9" rx="5.5" ry="2.3" transform="rotate(35 238.1 65.9)"/><ellipse cx="231.8" cy="42.7" rx="6.7" ry="1.6" transform="rotate(35 231.8 42.7)"/><ellipse cx="184.1" cy="45.5" rx="3.5" ry="2.0" transform="rotate(35 184.1 45.5)"/><ellipse cx="253.9" cy="66.6" rx="7.4" ry="1.6" transform="rotate(35 253.9 66.6)"/><ellipse cx="210.0" cy="43.3" rx="5.6" ry="2.3" transform="rotate(35 210.0 43.3)"/><ellipse cx="166.8" cy="16.0" rx="7.2" ry="1.8" transform="rotate(35 166.8 16.0)"/><ellipse cx="128.5" cy="-1.1" rx="4.8" ry="2.1" transform="rotate(35 128.5 -1.1)"/><ellipse cx="119.4" cy="11.2" rx="8.4" ry="2.1" transform="rotate(35 119.4 11.2)"/><ellipse cx="140.6" cy="49.9" rx="4.2" ry="1.7" transform="rotate(35 140.6 49.9)"/><ellipse cx="222.0" cy="69.3" rx="8.3" ry="1.6" transform="rotate(35 222.0 69.3)"/><ellipse cx="184.1" cy="22.7" rx="3.8" ry="1.8" transform="rotate(35 184.1 22.7)"/><ellipse cx="227.3" cy="64.2" rx="7.3" ry="2.5" transform="rotate(35 227.3 64.2)"/><ellipse cx="132.1" cy="11.2" rx="5.7" ry="1.4" transform="rotate(35 132.1 11.2)"/><ellipse cx="121.4" cy="30.3" rx="6.8" ry="1.8" transform="rotate(35 121.4 30.3)"/><ellipse cx="97.7" cy="0.5" rx="8.2" ry="1.1" transform="rotate(35 97.7 0.5)"/><ellipse cx="205.5" cy="42.5" rx="4.9" ry="2.3" transform="rotate(35 205.5 42.5)"/><ellipse cx="88.2" cy="8.6" rx="5.7" ry="1.0" transform="rotate(35 88.2 8.6)"/><ellipse cx="108.9" cy="1.7" rx="6.8" ry="1.7" transform="rotate(35 108.9 1.7)"/><ellipse cx="192.1" cy="49.1" rx="7.8" ry="2.5" transform="rotate(35 192.1 49.1)"/><ellipse cx="165.8" cy="11.9" rx="3.1" ry="1.8" transform="rotate(35 165.8 11.9)"/><ellipse cx="131.3" cy="25.0" rx="7.2" ry="1.8" transform="rotate(35 131.3 25.0)"/><ellipse cx="189.5" cy="57.0" rx="5.4" ry="2.3" transform="rotate(35 189.5 57.0)"/><ellipse cx="243.5" cy="54.3" rx="3.8" ry="1.7" transform="rotate(35 243.5 54.3)"/><ellipse cx="149.1" cy="42.4" rx="8.3" ry="2.3" transform="rotate(35 149.1 42.4)"/><ellipse cx="245.5" cy="34.2" rx="6.9" ry="1.3" transform="rotate(35 245.5 34.2)"/><ellipse cx="207.7" cy="61.8" rx="6.8" ry="2.1" transform="rotate(35 207.7 61.8)"/><ellipse cx="251.7" cy="74.2" rx="6.2" ry="2.3" transform="rotate(35 251.7 74.2)"/><ellipse cx="99.1" cy="32.4" rx="6.3" ry="2.2" transform="rotate(35 99.1 32.4)"/><ellipse cx="108.9" cy="9.6" rx="6.1" ry="2.2" transform="rotate(35 108.9 9.6)"/><ellipse cx="227.8" cy="51.8" rx="8.7" ry="1.8" transform="rotate(35 227.8 51.8)"/><ellipse cx="122.6" cy="39.1" rx="4.7" ry="2.2" transform="rotate(35 122.6 39.1)"/><ellipse cx="193.6" cy="38.8" rx="8.1" ry="1.9" transform="rotate(35 193.6 38.8)"/><ellipse cx="138.0" cy="27.7" rx="8.1" ry="2.4" transform="rotate(35 138.0 27.7)"/><ellipse cx="249.6" cy="38.9" rx="6.4" ry="1.3" transform="rotate(35 249.6 38.9)"/><ellipse cx="176.1" cy="37.2" rx="6.6" ry="1.0" transform="rotate(35 176.1 37.2)"/><ellipse cx="249.8" cy="38.2" rx="5.4" ry="2.3" transform="rotate(35 249.8 38.2)"/><ellipse cx="180.7" cy="36.3" rx="7.1" ry="1.1" transform="rotate(35 180.7 36.3)"/><ellipse cx="176.6" cy="30.3" rx="8.7" ry="2.5" transform="rotate(35 176.6 30.3)"/><ellipse cx="130.8" cy="34.9" rx="3.8" ry="1.7" transform="rotate(35 130.8 34.9)"/><ellipse cx="223.7" cy="68.2" rx="5.9" ry="1.5" transform="rotate(35 223.7 68.2)"/><ellipse cx="118.0" cy="15.7" rx="7.1" ry="1.5" transform="rotate(35 118.0 15.7)"/><ellipse cx="145.4" cy="46.3" rx="3.6" ry="2.2" transform="rotate(35 145.4 46.3)"/><ellipse cx="105.9" cy="37.8" rx="4.5" ry="1.3" transform="rotate(35 105.9 37.8)"/><ellipse cx="175.2" cy="32.1" rx="5.3" ry="1.7" transform="rotate(35 175.2 32.1)"/><ellipse cx="175.0" cy="10.5" rx="4.2" ry="2.0" transform="rotate(35 175.0 10.5)"/><ellipse cx="193.5" cy="39.3" rx="8.1" ry="2.0" transform="rotate(35 193.5 39.3)"/><ellipse cx="210.9" cy="61.2" rx="8.4" ry="1.5" transform="rotate(35 210.9 61.2)"/><ellipse cx="129.1" cy="5.6" rx="8.0" ry="1.7" transform="rotate(35 129.1 5.6)"/><ellipse cx="153.5" cy="51.4" rx="3.1" ry="1.3" transform="rotate(35 153.5 51.4)"/><ellipse cx="201.0" cy="69.1" rx="8.8" ry="1.2" transform="rotate(35 201.0 69.1)"/><ellipse cx="171.0" cy="57.1" rx="6.0" ry="2.1" transform="rotate(35 171.0 57.1)"/><ellipse cx="117.1" cy="3.5" rx="3.6" ry="1.1" transform="rotate(35 117.1 3.5)"/><ellipse cx="178.8" cy="38.2" rx="6.4" ry="1.2" transform="rotate(35 178.8 38.2)"/><ellipse cx="116.4" cy="13.9" rx="8.0" ry="2.6" transform="rotate(35 116.4 13.9)"/><ellipse cx="163.6" cy="57.6" rx="5.0" ry="1.7" transform="rotate(35 163.6 57.6)"/><ellipse cx="172.6" cy="31.5" rx="6.6" ry="1.0" transform="rotate(35 172.6 31.5)"/><ellipse cx="204.2" cy="63.9" rx="4.1" ry="1.7" transform="rotate(35 204.2 63.9)"/><ellipse cx="210.7" cy="29.6" rx="4.2" ry="1.3" transform="rotate(35 210.7 29.6)"/><ellipse cx="236.8" cy="60.5" rx="7.2" ry="2.4" transform="rotate(35 236.8 60.5)"/><ellipse cx="192.0" cy="29.6" rx="6.6" ry="1.8" transform="rotate(35 192.0 29.6)"/><ellipse cx="252.1" cy="60.8" rx="4.5" ry="2.5" transform="rotate(35 252.1 60.8)"/><ellipse cx="211.6" cy="58.7" rx="7.9" ry="1.6" transform="rotate(35 211.6 58.7)"/><ellipse cx="237.4" cy="66.6" rx="7.2" ry="2.2" transform="rotate(35 237.4 66.6)"/><ellipse cx="215.1" cy="29.6" rx="7.3" ry="1.1" transform="rotate(35 215.1 29.6)"/><ellipse cx="143.1" cy="34.6" rx="3.1" ry="1.6" transform="rotate(35 143.1 34.6)"/><ellipse cx="193.6" cy="46.7" rx="4.4" ry="2.5" transform="rotate(35 193.6 46.7)"/><ellipse cx="198.2" cy="24.3" rx="7.0" ry="1.9" transform="rotate(35 198.2 24.3)"/><ellipse cx="175.6" cy="28.4" rx="9.0" ry="2.0" transform="rotate(35 175.6 28.4)"/><ellipse cx="204.2" cy="57.4" rx="8.9" ry="1.0" transform="rotate(35 204.2 57.4)"/><ellipse cx="189.6" cy="55.6" rx="4.5" ry="1.6" transform="rotate(35 189.6 55.6)"/><ellipse cx="93.6" cy="13.2" rx="5.3" ry="1.2" transform="rotate(35 93.6 13.2)"/><ellipse cx="178.5" cy="37.6" rx="8.8" ry="1.9" transform="rotate(35 178.5 37.6)"/><ellipse cx="254.2" cy="47.8" rx="7.9" ry="1.1" transform="rotate(35 254.2 47.8)"/><ellipse cx="186.6" cy="57.2" rx="3.3" ry="2.5" transform="rotate(35 186.6 57.2)"/><ellipse cx="112.2" cy="34.8" rx="4.0" ry="1.8" transform="rotate(35 112.2 34.8)"/><ellipse cx="174.5" cy="44.6" rx="5.2" ry="1.5" transform="rotate(35 174.5 44.6)"/><ellipse cx="196.4" cy="41.7" rx="4.7" ry="2.1" transform="rotate(35 196.4 41.7)"/><ellipse cx="135.3" cy="-0.9" rx="4.5" ry="1.1" transform="rotate(35 135.3 -0.9)"/><ellipse cx="253.1" cy="71.7" rx="3.4" ry="2.4" transform="rotate(35 253.1 71.7)"/><ellipse cx="158.0" cy="35.3" rx="8.8" ry="1.4" transform="rotate(35 158.0 35.3)"/><ellipse cx="207.9" cy="34.5" rx="8.9" ry="2.3" transform="rotate(35 207.9 34.5)"/><ellipse cx="191.1" cy="33.5" rx="4.2" ry="1.1" transform="rotate(35 191.1 33.5)"/><ellipse cx="174.8" cy="7.7" rx="5.7" ry="2.1" transform="rotate(35 174.8 7.7)"/><ellipse cx="162.4" cy="18.4" rx="6.5" ry="1.7" transform="rotate(35 162.4 18.4)"/><ellipse cx="217.3" cy="39.4" rx="9.0" ry="2.5" transform="rotate(35 217.3 39.4)"/><ellipse cx="218.3" cy="46.7" rx="5.2" ry="1.4" transform="rotate(35 218.3 46.7)"/><ellipse cx="201.5" cy="42.1" rx="6.6" ry="2.0" transform="rotate(35 201.5 42.1)"/><ellipse cx="240.7" cy="66.5" rx="3.2" ry="1.1" transform="rotate(35 240.7 66.5)"/><ellipse cx="131.1" cy="31.2" rx="6.7" ry="1.2" transform="rotate(35 131.1 31.2)"/><ellipse cx="178.6" cy="47.2" rx="5.2" ry="1.8" transform="rotate(35 178.6 47.2)"/><ellipse cx="120.8" cy="24.8" rx="7.5" ry="2.3" transform="rotate(35 120.8 24.8)"/><ellipse cx="97.6" cy="7.3" rx="7.9" ry="2.0" transform="rotate(35 97.6 7.3)"/><ellipse cx="157.1" cy="18.1" rx="7.9" ry="1.6" transform="rotate(35 157.1 18.1)"/><ellipse cx="140.3" cy="40.8" rx="7.5" ry="2.5" transform="rotate(35 140.3 40.8)"/><ellipse cx="157.7" cy="26.8" rx="3.6" ry="2.4" transform="rotate(35 157.7 26.8)"/><ellipse cx="98.3" cy="4.5" rx="6.4" ry="1.8" transform="rotate(35 98.3 4.5)"/><ellipse cx="201.5" cy="21.3" rx="7.7" ry="1.1" transform="rotate(35 201.5 21.3)"/><ellipse cx="98.9" cy="21.7" rx="7.3" ry="2.1" transform="rotate(35 98.9 21.7)"/><ellipse cx="133.1" cy="9.1" rx="5.1" ry="2.2" transform="rotate(35 133.1 9.1)"/><ellipse cx="147.3" cy="7.2" rx="7.3" ry="1.9" transform="rotate(35 147.3 7.2)"/><ellipse cx="241.2" cy="71.3" rx="8.5" ry="1.7" transform="rotate(35 241.2 71.3)"/><ellipse cx="139.0" cy="29.2" rx="8.6" ry="2.4" transform="rotate(35 139.0 29.2)"/><ellipse cx="127.2" cy="26.2" rx="5.2" ry="1.6" transform="rotate(35 127.2 26.2)"/><ellipse cx="152.3" cy="28.2" rx="4.2" ry="1.9" transform="rotate(35 152.3 28.2)"/><ellipse cx="220.5" cy="40.2" rx="8.0" ry="1.9" transform="rotate(35 220.5 40.2)"/><ellipse cx="177.5" cy="42.3" rx="8.8" ry="2.0" transform="rotate(35 177.5 42.3)"/><ellipse cx="178.0" cy="59.5" rx="3.5" ry="1.1" transform="rotate(35 178.0 59.5)"/><ellipse cx="210.3" cy="68.1" rx="3.5" ry="2.0" transform="rotate(35 210.3 68.1)"/><ellipse cx="195.3" cy="17.1" rx="4.3" ry="2.2" transform="rotate(35 195.3 17.1)"/><ellipse cx="173.7" cy="57.6" rx="5.4" ry="1.5" transform="rotate(35 173.7 57.6)"/><ellipse cx="249.6" cy="50.4" rx="6.0" ry="1.9" transform="rotate(35 249.6 50.4)"/><ellipse cx="207.6" cy="53.2" rx="8.5" ry="1.7" transform="rotate(35 207.6 53.2)"/><ellipse cx="225.5" cy="50.0" rx="8.1" ry="2.3" transform="rotate(35 225.5 50.0)"/><ellipse cx="226.8" cy="67.3" rx="8.7" ry="2.0" transform="rotate(35 226.8 67.3)"/><ellipse cx="174.1" cy="53.4" rx="7.8" ry="1.7" transform="rotate(35 174.1 53.4)"/><ellipse cx="156.5" cy="9.4" rx="7.4" ry="2.6" transform="rotate(35 156.5 9.4)"/><ellipse cx="148.8" cy="11.1" rx="4.2" ry="1.7" transform="rotate(35 148.8 11.1)"/><ellipse cx="95.1" cy="22.1" rx="3.7" ry="2.0" transform="rotate(35 95.1 22.1)"/><ellipse cx="95.6" cy="33.8" rx="6.5" ry="2.5" transform="rotate(35 95.6 33.8)"/><ellipse cx="91.2" cy="6.5" rx="4.1" ry="1.3" transform="rotate(35 91.2 6.5)"/><ellipse cx="186.1" cy="15.5" rx="4.1" ry="1.4" transform="rotate(35 186.1 15.5)"/><ellipse cx="138.0" cy="40.8" rx="7.9" ry="1.8" transform="rotate(35 138.0 40.8)"/><ellipse cx="167.0" cy="15.2" rx="3.3" ry="2.5" transform="rotate(35 167.0 15.2)"/><ellipse cx="221.2" cy="28.0" rx="6.2" ry="1.8" transform="rotate(35 221.2 28.0)"/><ellipse cx="196.8" cy="16.5" rx="3.1" ry="1.8" transform="rotate(35 196.8 16.5)"/><ellipse cx="206.3" cy="45.3" rx="3.9" ry="1.3" transform="rotate(35 206.3 45.3)"/><ellipse cx="139.7" cy="18.2" rx="8.2" ry="1.8" transform="rotate(35 139.7 18.2)"/><ellipse cx="130.3" cy="39.7" rx="3.9" ry="2.2" transform="rotate(35 130.3 39.7)"/><ellipse cx="228.9" cy="62.1" rx="3.5" ry="1.4" transform="rotate(35 228.9 62.1)"/><ellipse cx="166.6" cy="34.6" rx="8.7" ry="1.9" transform="rotate(35 166.6 34.6)"/><ellipse cx="219.2" cy="30.5" rx="8.5" ry="1.1" transform="rotate(35 219.2 30.5)"/><ellipse cx="177.4" cy="39.0" rx="3.9" ry="2.3" transform="rotate(35 177.4 39.0)"/><ellipse cx="137.9" cy="22.2" rx="3.5" ry="1.5" transform="rotate(35 137.9 22.2)"/><ellipse cx="164.4" cy="53.8" rx="5.2" ry="2.1" transform="rotate(35 164.4 53.8)"/><ellipse cx="103.0" cy="28.8" rx="5.8" ry="2.5" transform="rotate(35 103.0 28.8)"/><ellipse cx="226.1" cy="49.0" rx="3.1" ry="1.6" transform="rotate(35 226.1 49.0)"/><ellipse cx="180.9" cy="33.7" rx="3.1" ry="2.6" transform="rotate(35 180.9 33.7)"/><ellipse cx="189.7" cy="20.7" rx="5.3" ry="1.9" transform="rotate(35 189.7 20.7)"/><ellipse cx="135.7" cy="24.3" rx="5.4" ry="2.1" transform="rotate(35 135.7 24.3)"/><ellipse cx="128.6" cy="13.6" rx="7.4" ry="1.5" transform="rotate(35 128.6 13.6)"/><ellipse cx="245.7" cy="41.9" rx="7.3" ry="1.5" transform="rotate(35 245.7 41.9)"/><ellipse cx="108.9" cy="5.4" rx="7.1" ry="2.1" transform="rotate(35 108.9 5.4)"/><ellipse cx="115.6" cy="29.4" rx="8.0" ry="1.9" transform="rotate(35 115.6 29.4)"/><ellipse cx="100.3" cy="15.7" rx="3.9" ry="1.2" transform="rotate(35 100.3 15.7)"/><ellipse cx="154.2" cy="3.7" rx="8.5" ry="1.7" transform="rotate(35 154.2 3.7)"/><ellipse cx="172.0" cy="48.5" rx="7.6" ry="2.3" transform="rotate(35 172.0 48.5)"/><ellipse cx="150.6" cy="23.9" rx="5.5" ry="1.0" transform="rotate(35 150.6 23.9)"/><ellipse cx="153.1" cy="52.6" rx="8.9" ry="2.3" transform="rotate(35 153.1 52.6)"/><ellipse cx="197.2" cy="45.5" rx="3.1" ry="1.5" transform="rotate(35 197.2 45.5)"/><ellipse cx="143.2" cy="48.8" rx="3.6" ry="1.6" transform="rotate(35 143.2 48.8)"/><ellipse cx="171.6" cy="59.5" rx="8.0" ry="2.0" transform="rotate(35 171.6 59.5)"/><ellipse cx="238.5" cy="40.8" rx="5.1" ry="1.8" transform="rotate(35 238.5 40.8)"/><ellipse cx="252.8" cy="38.3" rx="7.3" ry="2.3" transform="rotate(35 252.8 38.3)"/><ellipse cx="191.6" cy="13.4" rx="3.5" ry="1.4" transform="rotate(35 191.6 13.4)"/><ellipse cx="183.0" cy="52.4" rx="5.0" ry="2.5" transform="rotate(35 183.0 52.4)"/><ellipse cx="146.4" cy="34.1" rx="3.7" ry="2.6" transform="rotate(35 146.4 34.1)"/><ellipse cx="177.4" cy="41.7" rx="6.4" ry="1.4" transform="rotate(35 177.4 41.7)"/><ellipse cx="239.6" cy="75.4" rx="7.9" ry="2.0" transform="rotate(35 239.6 75.4)"/><ellipse cx="125.9" cy="42.7" rx="8.0" ry="1.3" transform="rotate(35 125.9 42.7)"/><ellipse cx="90.4" cy="12.0" rx="8.9" ry="2.5" transform="rotate(35 90.4 12.0)"/><ellipse cx="196.9" cy="22.0" rx="7.0" ry="2.2" transform="rotate(35 196.9 22.0)"/><ellipse cx="149.9" cy="44.2" rx="7.8" ry="1.0" transform="rotate(35 149.9 44.2)"/><ellipse cx="118.9" cy="34.5" rx="3.9" ry="1.6" transform="rotate(35 118.9 34.5)"/><ellipse cx="181.8" cy="11.5" rx="6.1" ry="1.4" transform="rotate(35 181.8 11.5)"/><ellipse cx="181.6" cy="23.9" rx="6.9" ry="1.1" transform="rotate(35 181.6 23.9)"/><ellipse cx="248.1" cy="44.8" rx="5.8" ry="1.7" transform="rotate(35 248.1 44.8)"/><ellipse cx="191.0" cy="51.8" rx="7.5" ry="2.2" transform="rotate(35 191.0 51.8)"/><ellipse cx="227.5" cy="64.7" rx="5.5" ry="1.7" transform="rotate(35 227.5 64.7)"/><ellipse cx="174.4" cy="39.0" rx="5.6" ry="2.4" transform="rotate(35 174.4 39.0)"/><ellipse cx="139.5" cy="2.3" rx="7.4" ry="2.4" transform="rotate(35 139.5 2.3)"/><ellipse cx="209.4" cy="44.6" rx="7.5" ry="1.5" transform="rotate(35 209.4 44.6)"/><ellipse cx="106.2" cy="32.9" rx="6.0" ry="1.6" transform="rotate(35 106.2 32.9)"/><ellipse cx="174.5" cy="16.7" rx="4.8" ry="1.6" transform="rotate(35 174.5 16.7)"/><ellipse cx="125.1" cy="3.3" rx="8.5" ry="2.5" transform="rotate(35 125.1 3.3)"/><ellipse cx="126.5" cy="21.3" rx="4.9" ry="1.1" transform="rotate(35 126.5 21.3)"/><ellipse cx="237.2" cy="61.6" rx="5.4" ry="1.6" transform="rotate(35 237.2 61.6)"/><ellipse cx="137.3" cy="36.9" rx="8.6" ry="2.6" transform="rotate(35 137.3 36.9)"/><ellipse cx="165.3" cy="14.1" rx="4.8" ry="2.5" transform="rotate(35 165.3 14.1)"/><ellipse cx="165.3" cy="11.4" rx="8.3" ry="2.6" transform="rotate(35 165.3 11.4)"/><ellipse cx="93.5" cy="6.3" rx="7.4" ry="1.5" transform="rotate(35 93.5 6.3)"/><ellipse cx="238.1" cy="65.8" rx="7.3" ry="1.2" transform="rotate(35 238.1 65.8)"/><ellipse cx="203.3" cy="71.1" rx="5.7" ry="1.1" transform="rotate(35 203.3 71.1)"/><ellipse cx="123.0" cy="22.0" rx="7.3" ry="1.3" transform="rotate(35 123.0 22.0)"/><ellipse cx="115.8" cy="16.4" rx="7.0" ry="2.3" transform="rotate(35 115.8 16.4)"/><ellipse cx="148.3" cy="49.6" rx="8.3" ry="1.9" transform="rotate(35 148.3 49.6)"/><ellipse cx="123.9" cy="21.5" rx="8.6" ry="2.1" transform="rotate(35 123.9 21.5)"/><ellipse cx="159.9" cy="39.2" rx="6.2" ry="1.1" transform="rotate(35 159.9 39.2)"/><ellipse cx="186.9" cy="20.2" rx="4.5" ry="2.3" transform="rotate(35 186.9 20.2)"/><ellipse cx="99.8" cy="20.2" rx="7.5" ry="1.4" transform="rotate(35 99.8 20.2)"/><ellipse cx="132.4" cy="40.8" rx="4.1" ry="2.4" transform="rotate(35 132.4 40.8)"/><ellipse cx="163.5" cy="56.5" rx="5.3" ry="2.5" transform="rotate(35 163.5 56.5)"/><ellipse cx="170.0" cy="12.0" rx="6.3" ry="2.0" transform="rotate(35 170.0 12.0)"/><ellipse cx="146.1" cy="49.3" rx="7.7" ry="1.8" transform="rotate(35 146.1 49.3)"/><ellipse cx="201.3" cy="38.6" rx="8.7" ry="1.3" transform="rotate(35 201.3 38.6)"/><ellipse cx="188.4" cy="16.4" rx="5.6" ry="2.2" transform="rotate(35 188.4 16.4)"/><ellipse cx="218.7" cy="59.7" rx="4.4" ry="1.8" transform="rotate(35 218.7 59.7)"/><ellipse cx="122.6" cy="43.2" rx="6.0" ry="1.1" transform="rotate(35 122.6 43.2)"/><ellipse cx="186.5" cy="53.7" rx="6.4" ry="2.4" transform="rotate(35 186.5 53.7)"/><ellipse cx="115.6" cy="9.8" rx="3.1" ry="1.8" transform="rotate(35 115.6 9.8)"/><ellipse cx="158.9" cy="32.5" rx="4.6" ry="2.3" transform="rotate(35 158.9 32.5)"/><ellipse cx="181.7" cy="40.4" rx="7.7" ry="1.4" transform="rotate(35 181.7 40.4)"/><ellipse cx="109.9" cy="22.3" rx="3.3" ry="1.5" transform="rotate(35 109.9 22.3)"/><ellipse cx="190.6" cy="39.0" rx="4.6" ry="1.9" transform="rotate(35 190.6 39.0)"/><ellipse cx="114.2" cy="17.9" rx="4.0" ry="2.1" transform="rotate(35 114.2 17.9)"/><ellipse cx="226.3" cy="59.4" rx="3.4" ry="1.7" transform="rotate(35 226.3 59.4)"/><ellipse cx="147.0" cy="14.9" rx="8.8" ry="1.1" transform="rotate(35 147.0 14.9)"/><ellipse cx="168.2" cy="57.4" rx="8.9" ry="1.2" transform="rotate(35 168.2 57.4)"/><ellipse cx="162.4" cy="56.1" rx="3.2" ry="1.4" transform="rotate(35 162.4 56.1)"/><ellipse cx="151.8" cy="21.2" rx="5.5" ry="1.1" transform="rotate(35 151.8 21.2)"/><ellipse cx="214.8" cy="55.3" rx="4.4" ry="1.4" transform="rotate(35 214.8 55.3)"/><ellipse cx="178.8" cy="16.9" rx="5.8" ry="2.5" transform="rotate(35 178.8 16.9)"/><ellipse cx="146.9" cy="24.3" rx="8.9" ry="2.0" transform="rotate(35 146.9 24.3)"/><ellipse cx="91.7" cy="29.4" rx="6.9" ry="1.1" transform="rotate(35 91.7 29.4)"/><ellipse cx="232.0" cy="44.1" rx="8.3" ry="1.7" transform="rotate(35 232.0 44.1)"/><ellipse cx="121.6" cy="25.1" rx="4.1" ry="1.9" transform="rotate(35 121.6 25.1)"/><ellipse cx="112.9" cy="13.9" rx="4.3" ry="1.7" transform="rotate(35 112.9 13.9)"/><ellipse cx="137.5" cy="32.9" rx="9.0" ry="2.1" transform="rotate(35 137.5 32.9)"/><ellipse cx="150.1" cy="3.7" rx="7.1" ry="1.6" transform="rotate(35 150.1 3.7)"/><ellipse cx="131.7" cy="-0.6" rx="4.1" ry="1.4" transform="rotate(35 131.7 -0.6)"/><ellipse cx="206.6" cy="19.0" rx="5.2" ry="1.2" transform="rotate(35 206.6 19.0)"/><ellipse cx="215.2" cy="54.4" rx="8.4" ry="1.0" transform="rotate(35 215.2 54.4)"/><ellipse cx="139.8" cy="28.0" rx="3.5" ry="2.4" transform="rotate(35 139.8 28.0)"/><ellipse cx="152.0" cy="16.6" rx="3.2" ry="1.2" transform="rotate(35 152.0 16.6)"/><ellipse cx="138.1" cy="31.1" rx="6.3" ry="1.2" transform="rotate(35 138.1 31.1)"/><ellipse cx="205.1" cy="18.3" rx="7.4" ry="2.1" transform="rotate(35 205.1 18.3)"/><ellipse cx="110.0" cy="14.0" rx="4.7" ry="2.1" transform="rotate(35 110.0 14.0)"/><ellipse cx="153.9" cy="28.1" rx="8.2" ry="1.4" transform="rotate(35 153.9 28.1)"/><ellipse cx="134.7" cy="24.9" rx="4.3" ry="1.1" transform="rotate(35 134.7 24.9)"/><ellipse cx="157.7" cy="28.6" rx="3.4" ry="1.6" transform="rotate(35 157.7 28.6)"/><ellipse cx="140.8" cy="36.8" rx="4.7" ry="1.3" transform="rotate(35 140.8 36.8)"/><ellipse cx="153.4" cy="35.1" rx="4.0" ry="2.1" transform="rotate(35 153.4 35.1)"/><ellipse cx="125.8" cy="5.3" rx="5.1" ry="1.7" transform="rotate(35 125.8 5.3)"/><ellipse cx="204.2" cy="41.1" rx="7.2" ry="1.0" transform="rotate(35 204.2 41.1)"/><ellipse cx="151.5" cy="26.4" rx="3.4" ry="1.6" transform="rotate(35 151.5 26.4)"/><ellipse cx="184.6" cy="34.6" rx="5.0" ry="1.4" transform="rotate(35 184.6 34.6)"/><ellipse cx="89.0" cy="25.1" rx="8.4" ry="1.9" transform="rotate(35 89.0 25.1)"/><ellipse cx="116.6" cy="34.6" rx="6.7" ry="2.5" transform="rotate(35 116.6 34.6)"/><ellipse cx="146.6" cy="42.9" rx="8.7" ry="2.2" transform="rotate(35 146.6 42.9)"/><ellipse cx="191.6" cy="46.4" rx="5.5" ry="1.7" transform="rotate(35 191.6 46.4)"/><ellipse cx="108.1" cy="37.6" rx="4.9" ry="1.6" transform="rotate(35 108.1 37.6)"/></g>
<!-- left building -->
<g filter="url(#roB05)"><path d="M0 68L24 69.500L26 72V94H0Z" fill="#c9925e"/><g fill="#8a5a3a" opacity=".6"><rect x="3" y="73" width="2" height="3"/><rect x="9" y="73" width="2" height="3"/><rect x="15" y="73.500" width="2" height="3"/><rect x="3" y="80" width="2" height="3"/><rect x="9" y="80" width="2" height="3"/><rect x="15" y="80.500" width="2" height="3"/><rect x="20" y="74" width="2" height="3"/><rect x="20" y="81" width="2" height="3"/></g>
<!-- right trees -->
<path d="M250 66C244 72 242 80 244 86C236 84 226 86 220 92C214 96 218 104 226 104L250 106Z" fill="#6a8f3a"/><path d="M222 90C228 86 236 88 238 94C236 100 228 102 222 100Z" fill="#86a83e"/><path d="M236 90L250 88V96L238 96Z" fill="#2f3b22" opacity=".7"/>
</g>
<!-- colosseum -->
<g filter="url(#roB05)">
<path d="M80.500 108V74C80.500 60 82 46 84 40C92 28 102 20 112 16.500L118.500 18L124 36L128 50L131 59L138 60.500L146 63.500L160 63.500L161 60.500L186 61C198 63 210 68 214.500 76L216 90V108Z" fill="url(#roCol)"/>
<path d="M118 18L124 36L128 50L131 59L122 60L118 44Z" fill="#b5825e"/>
<path d="M146 63.500L160 63.500L161 60.500L186 61C198 63 210 68 214.500 76L216 90V108H150Z" fill="#a8755a" opacity=".55"/>
<path d="M80.500 74C92 66 112 62 131 59.500V61.500C112 64 94 68 80.500 77Z" fill="#f1dcb8" opacity=".9"/>
<path d="M80.500 58C90 48 106 42 126 40.500V42.500C108 44 92 50 80.500 61Z" fill="#f1dcb8" opacity=".8"/>
<path d="M80.500 90C100 86 130 84 152 84.500L214 86V88L152 87C130 86.500 100 88 80.500 93Z" fill="#ead2ae" opacity=".85"/>
</g>
<g filter="url(#roB05)">
<g fill="#6b4630" opacity="0.8"><path d="M84.5 59.0V49.5A2.5 2.5 0 0 1 89.5 49.5V59.0Z"/><path d="M90.6 59.0V49.4A2.4 2.4 0 0 1 95.4 49.4V59.0Z"/><path d="M96.8 59.0V49.2A2.2 2.2 0 0 1 101.2 49.2V59.0Z"/><path d="M102.9 59.0V49.1A2.1 2.1 0 0 1 107.1 49.1V59.0Z"/><path d="M109.1 59.0V48.9A1.9 1.9 0 0 1 112.9 48.9V59.0Z"/><path d="M115.2 59.0V48.8A1.8 1.8 0 0 1 118.8 48.8V59.0Z"/><path d="M121.4 59.0V48.6A1.6 1.6 0 0 1 124.6 48.6V59.0Z"/><path d="M127.5 59.0V48.5A1.5 1.5 0 0 1 130.5 48.5V59.0Z"/></g>
<g fill="#5a3a28" opacity="0.85"><path d="M84.5 84.0V72.9A2.9 2.9 0 0 1 90.3 72.9V84.0Z"/><path d="M91.4 84.0V72.8A2.8 2.8 0 0 1 97.0 72.8V84.0Z"/><path d="M98.3 84.0V72.7A2.7 2.7 0 0 1 103.7 72.7V84.0Z"/><path d="M105.3 84.0V72.5A2.5 2.5 0 0 1 110.3 72.5V84.0Z"/><path d="M112.2 84.0V72.4A2.4 2.4 0 0 1 117.0 72.4V84.0Z"/><path d="M119.1 84.0V72.3A2.3 2.3 0 0 1 123.7 72.3V84.0Z"/><path d="M126.1 84.0V72.1A2.1 2.1 0 0 1 130.3 72.1V84.0Z"/><path d="M133.0 84.0V72.0A2.0 2.0 0 0 1 137.0 72.0V84.0Z"/><path d="M139.9 84.0V71.9A1.9 1.9 0 0 1 143.7 71.9V84.0Z"/><path d="M146.9 84.0V71.7A1.7 1.7 0 0 1 150.3 71.7V84.0Z"/></g>
<g fill="#4e3224" opacity="0.85"><path d="M84.3 108.0V96.1A3.1 3.1 0 0 1 90.5 96.1V108.0Z"/><path d="M91.2 108.0V96.0A3.0 3.0 0 0 1 97.2 96.0V108.0Z"/><path d="M98.2 108.0V95.8A2.8 2.8 0 0 1 103.8 95.8V108.0Z"/><path d="M105.1 108.0V95.7A2.7 2.7 0 0 1 110.5 95.7V108.0Z"/><path d="M112.0 108.0V95.6A2.6 2.6 0 0 1 117.2 95.6V108.0Z"/><path d="M119.0 108.0V95.4A2.4 2.4 0 0 1 123.8 95.4V108.0Z"/><path d="M125.9 108.0V95.3A2.3 2.3 0 0 1 130.5 95.3V108.0Z"/><path d="M132.9 108.0V95.1A2.1 2.1 0 0 1 137.1 95.1V108.0Z"/><path d="M139.8 108.0V95.0A2.0 2.0 0 0 1 143.8 95.0V108.0Z"/><path d="M146.8 108.0V94.8A1.8 1.8 0 0 1 150.4 94.8V108.0Z"/></g>
<g fill="#5a3a28" opacity="0.75"><path d="M161.0 83.0V72.1A2.1 2.1 0 0 1 165.3 72.1V83.0Z"/><path d="M167.3 83.0V72.0A2.0 2.0 0 0 1 171.4 72.0V83.0Z"/><path d="M173.6 83.0V71.9A1.9 1.9 0 0 1 177.5 71.9V83.0Z"/><path d="M180.0 83.0V71.8A1.8 1.8 0 0 1 183.6 71.8V83.0Z"/><path d="M186.3 83.0V71.7A1.7 1.7 0 0 1 189.7 71.7V83.0Z"/><path d="M192.6 83.0V71.6A1.6 1.6 0 0 1 195.8 71.6V83.0Z"/><path d="M199.0 83.0V71.5A1.5 1.5 0 0 1 201.9 71.5V83.0Z"/><path d="M205.3 83.0V71.4A1.4 1.4 0 0 1 208.0 71.4V83.0Z"/><path d="M211.6 83.0V71.3A1.3 1.3 0 0 1 214.2 71.3V83.0Z"/></g>
<g fill="#4e3224" opacity="0.8"><path d="M161.0 108.0V96.1A2.1 2.1 0 0 1 165.3 96.1V108.0Z"/><path d="M167.3 108.0V96.0A2.0 2.0 0 0 1 171.4 96.0V108.0Z"/><path d="M173.6 108.0V95.9A1.9 1.9 0 0 1 177.5 95.9V108.0Z"/><path d="M180.0 108.0V95.8A1.8 1.8 0 0 1 183.6 95.8V108.0Z"/><path d="M186.3 108.0V95.7A1.7 1.7 0 0 1 189.7 95.7V108.0Z"/><path d="M192.6 108.0V95.6A1.6 1.6 0 0 1 195.8 95.6V108.0Z"/><path d="M199.0 108.0V95.5A1.5 1.5 0 0 1 201.9 95.5V108.0Z"/><path d="M205.3 108.0V95.4A1.4 1.4 0 0 1 208.0 95.4V108.0Z"/><path d="M211.6 108.0V95.3A1.3 1.3 0 0 1 214.2 95.3V108.0Z"/></g>
<path d="M154 76A3.500 3.500 0 0 1 161 76V83H154Z" fill="#e9eef2"/>
<g fill="#e9eef2" opacity=".9"><rect x="174" y="63.500" width="2" height="3"/><rect x="189" y="65.500" width="2" height="3"/><rect x="200" y="69" width="1.600" height="2.600"/><rect x="182" y="72" width="2.500" height="4" rx="1"/></g>
</g>
<!-- ground -->
<path d="M0 108H250V166H0z" fill="#c9bfb0"/>
<path d="M0 110L142 111.500L78 134L0 135Z" fill="url(#roPla)"/>
<path d="M170 112L250 112V135L190 135Z" fill="url(#roGr)"/>
<path d="M142 111.500L166 111.500L186 136L76 136Z" fill="#cdc3b4"/>
<path d="M0 107.500H250V111.500H0z" fill="#8f8a88" opacity=".75" filter="url(#roB05)"/>
<path d="M166 111.500L170 112L190 135L186 136Z" fill="#b39b72"/><path d="M78 134L142 111.500L146 112L84 136Z" fill="#9a7a62" opacity=".8"/>
<path d="M0 134H78L84 136.500H0z" fill="#7e6654" opacity=".8"/><path d="M186 135H250V138H188z" fill="#7a6a54" opacity=".7"/>
<path d="M218 116C230 114 244 116 250 118V121C240 120 228 119 218 118Z" fill="#6f5a3a" opacity=".6"/>
<rect y="137" width="250" height="29" fill="#7d746c"/>
<g filter="url(#roB05)"><ellipse cx="0.1" cy="141.1" rx="3.3" ry="1.6" fill="#e0c99a"/><ellipse cx="9.0" cy="141.4" rx="4.6" ry="1.6" fill="#d9c392"/><ellipse cx="17.6" cy="141.1" rx="3.1" ry="1.6" fill="#a9a9b0"/><ellipse cx="26.2" cy="141.5" rx="4.5" ry="1.6" fill="#b9b6b4"/><ellipse cx="34.8" cy="141.1" rx="3.1" ry="1.6" fill="#d9c392"/><ellipse cx="44.2" cy="141.1" rx="5.3" ry="1.6" fill="#e0c99a"/><ellipse cx="54.4" cy="141.5" rx="3.8" ry="1.6" fill="#e0c99a"/><ellipse cx="62.6" cy="141.1" rx="3.4" ry="1.6" fill="#a9a9b0"/><ellipse cx="70.1" cy="141.5" rx="3.0" ry="1.6" fill="#b9b6b4"/><ellipse cx="79.3" cy="141.4" rx="5.1" ry="1.6" fill="#c6bfae"/><ellipse cx="89.1" cy="141.2" rx="3.7" ry="1.6" fill="#b9b6b4"/><ellipse cx="98.4" cy="141.3" rx="4.5" ry="1.6" fill="#aeb0b8"/><ellipse cx="108.1" cy="141.1" rx="4.2" ry="1.6" fill="#aeb0b8"/><ellipse cx="117.4" cy="141.4" rx="4.1" ry="1.6" fill="#cdb68a"/><ellipse cx="128.2" cy="141.7" rx="5.6" ry="1.6" fill="#a9a9b0"/><ellipse cx="139.4" cy="141.3" rx="4.5" ry="1.6" fill="#9d9ea8"/><ellipse cx="148.8" cy="141.5" rx="3.9" ry="1.6" fill="#c6bfae"/><ellipse cx="157.9" cy="141.8" rx="4.2" ry="1.6" fill="#a9a9b0"/><ellipse cx="167.4" cy="141.1" rx="4.2" ry="1.6" fill="#8f929e"/><ellipse cx="177.6" cy="141.6" rx="5.0" ry="1.6" fill="#9d9ea8"/><ellipse cx="189.3" cy="141.3" rx="5.7" ry="1.6" fill="#c6bfae"/><ellipse cx="200.1" cy="141.3" rx="4.0" ry="1.6" fill="#8f929e"/><ellipse cx="210.7" cy="141.2" rx="5.6" ry="1.6" fill="#9d9ea8"/><ellipse cx="220.5" cy="141.2" rx="3.2" ry="1.6" fill="#a9a9b0"/><ellipse cx="228.4" cy="141.2" rx="3.7" ry="1.6" fill="#8f929e"/><ellipse cx="237.2" cy="141.1" rx="4.0" ry="1.6" fill="#c6bfae"/><ellipse cx="246.4" cy="141.3" rx="4.2" ry="1.6" fill="#aeb0b8"/><ellipse cx="254.8" cy="141.7" rx="3.3" ry="1.6" fill="#c6bfae"/><ellipse cx="2.2" cy="145.8" rx="5.0" ry="2.0" fill="#9d9ea8"/><ellipse cx="12.6" cy="146.0" rx="4.3" ry="2.0" fill="#d9c392"/><ellipse cx="21.7" cy="145.5" rx="3.5" ry="2.0" fill="#cdb68a"/><ellipse cx="31.4" cy="145.7" rx="5.0" ry="2.0" fill="#9d9ea8"/><ellipse cx="41.5" cy="146.0" rx="3.9" ry="2.0" fill="#aeb0b8"/><ellipse cx="52.8" cy="146.1" rx="6.1" ry="2.0" fill="#c6bfae"/><ellipse cx="66.6" cy="145.8" rx="6.6" ry="2.0" fill="#cdb68a"/><ellipse cx="79.6" cy="146.3" rx="5.2" ry="2.0" fill="#d9c392"/><ellipse cx="91.0" cy="145.6" rx="5.0" ry="2.0" fill="#d9c392"/><ellipse cx="102.7" cy="146.0" rx="5.5" ry="2.0" fill="#cdb68a"/><ellipse cx="113.2" cy="145.6" rx="3.7" ry="2.0" fill="#b9b6b4"/><ellipse cx="122.5" cy="145.9" rx="4.4" ry="2.0" fill="#9d9ea8"/><ellipse cx="132.0" cy="146.3" rx="3.9" ry="2.0" fill="#c6bfae"/><ellipse cx="142.3" cy="145.7" rx="5.1" ry="2.0" fill="#c6bfae"/><ellipse cx="152.6" cy="145.8" rx="4.0" ry="2.0" fill="#8f929e"/><ellipse cx="162.2" cy="145.6" rx="4.4" ry="2.0" fill="#8f929e"/><ellipse cx="171.5" cy="145.8" rx="3.6" ry="2.0" fill="#aeb0b8"/><ellipse cx="182.2" cy="146.1" rx="5.9" ry="2.0" fill="#a9a9b0"/><ellipse cx="193.8" cy="146.2" rx="4.5" ry="2.0" fill="#8f929e"/><ellipse cx="205.5" cy="145.9" rx="5.9" ry="2.0" fill="#9d9ea8"/><ellipse cx="219.3" cy="146.1" rx="6.7" ry="2.0" fill="#9d9ea8"/><ellipse cx="232.6" cy="145.7" rx="5.4" ry="2.0" fill="#aeb0b8"/><ellipse cx="243.4" cy="146.1" rx="4.3" ry="2.0" fill="#b9b6b4"/><ellipse cx="255.3" cy="146.1" rx="6.4" ry="2.0" fill="#8f929e"/><ellipse cx="4.4" cy="151.6" rx="6.4" ry="2.5" fill="#d9c392"/><ellipse cx="18.5" cy="151.7" rx="6.3" ry="2.5" fill="#b9b6b4"/><ellipse cx="32.4" cy="151.7" rx="6.2" ry="2.5" fill="#8f929e"/><ellipse cx="45.8" cy="151.1" rx="5.8" ry="2.5" fill="#cdb68a"/><ellipse cx="58.2" cy="151.4" rx="5.1" ry="2.5" fill="#aeb0b8"/><ellipse cx="69.1" cy="151.0" rx="4.3" ry="2.5" fill="#e0c99a"/><ellipse cx="81.8" cy="151.5" rx="7.1" ry="2.5" fill="#c6bfae"/><ellipse cx="96.7" cy="151.2" rx="6.3" ry="2.5" fill="#e0c99a"/><ellipse cx="112.1" cy="151.5" rx="7.7" ry="2.5" fill="#cdb68a"/><ellipse cx="125.9" cy="151.1" rx="4.6" ry="2.5" fill="#b9b6b4"/><ellipse cx="136.7" cy="151.4" rx="4.8" ry="2.5" fill="#b9b6b4"/><ellipse cx="149.2" cy="151.1" rx="6.3" ry="2.5" fill="#8f929e"/><ellipse cx="164.7" cy="151.5" rx="7.8" ry="2.5" fill="#c6bfae"/><ellipse cx="179.7" cy="151.4" rx="5.8" ry="2.5" fill="#aeb0b8"/><ellipse cx="191.3" cy="151.5" rx="4.4" ry="2.5" fill="#8f929e"/><ellipse cx="203.6" cy="151.3" rx="6.5" ry="2.5" fill="#b9b6b4"/><ellipse cx="219.5" cy="151.0" rx="8.0" ry="2.5" fill="#b9b6b4"/><ellipse cx="234.1" cy="151.1" rx="5.2" ry="2.5" fill="#aeb0b8"/><ellipse cx="247.5" cy="151.4" rx="6.8" ry="2.5" fill="#9d9ea8"/><ellipse cx="-2.8" cy="158.2" rx="5.5" ry="3.1" fill="#cdb68a"/><ellipse cx="13.9" cy="157.8" rx="9.5" ry="3.1" fill="#e0c99a"/><ellipse cx="31.1" cy="158.3" rx="6.0" ry="3.1" fill="#cdb68a"/><ellipse cx="47.2" cy="158.2" rx="8.4" ry="3.1" fill="#cdb68a"/><ellipse cx="63.2" cy="158.1" rx="5.9" ry="3.1" fill="#e0c99a"/><ellipse cx="78.5" cy="157.7" rx="7.7" ry="3.1" fill="#a9a9b0"/><ellipse cx="94.1" cy="158.1" rx="6.2" ry="3.1" fill="#a9a9b0"/><ellipse cx="110.2" cy="158.4" rx="8.2" ry="3.1" fill="#e0c99a"/><ellipse cx="128.4" cy="158.2" rx="8.4" ry="3.1" fill="#b9b6b4"/><ellipse cx="146.1" cy="158.3" rx="7.6" ry="3.1" fill="#aeb0b8"/><ellipse cx="163.2" cy="158.2" rx="7.9" ry="3.1" fill="#b9b6b4"/><ellipse cx="182.6" cy="158.4" rx="9.8" ry="3.1" fill="#9d9ea8"/><ellipse cx="204.0" cy="158.3" rx="9.9" ry="3.1" fill="#b9b6b4"/><ellipse cx="221.5" cy="158.0" rx="5.9" ry="3.1" fill="#a9a9b0"/><ellipse cx="236.0" cy="157.9" rx="6.9" ry="3.1" fill="#8f929e"/><ellipse cx="250.2" cy="157.9" rx="5.6" ry="3.1" fill="#8f929e"/><ellipse cx="10.1" cy="166.3" rx="11.4" ry="3.9" fill="#8f929e"/><ellipse cx="31.5" cy="166.1" rx="8.0" ry="3.9" fill="#b9b6b4"/><ellipse cx="54.1" cy="166.1" rx="12.5" ry="3.9" fill="#c6bfae"/><ellipse cx="79.3" cy="166.8" rx="10.7" ry="3.9" fill="#cdb68a"/><ellipse cx="100.9" cy="166.0" rx="9.0" ry="3.9" fill="#cdb68a"/><ellipse cx="120.7" cy="166.3" rx="8.7" ry="3.9" fill="#9d9ea8"/><ellipse cx="138.0" cy="166.4" rx="6.5" ry="3.9" fill="#9d9ea8"/><ellipse cx="154.8" cy="166.1" rx="8.3" ry="3.9" fill="#a9a9b0"/><ellipse cx="177.4" cy="166.7" rx="12.3" ry="3.9" fill="#b9b6b4"/><ellipse cx="198.7" cy="166.2" rx="7.1" ry="3.9" fill="#9d9ea8"/><ellipse cx="220.0" cy="166.2" rx="12.2" ry="3.9" fill="#b9b6b4"/><ellipse cx="241.4" cy="166.6" rx="7.2" ry="3.9" fill="#c6bfae"/><ellipse cx="261.4" cy="166.3" rx="10.7" ry="3.9" fill="#9d9ea8"/></g>
<!-- trees + sun -->
<g filter="url(#roB1)">
<path d="M20 106C18 96 22 84 26 76C27 70 29 64 31 62C32 68 33 74 34 78C36 70 38 60 42 57C48 60 52 72 53 84C54 96 52 104 50 108L22 109Z" fill="#6a4422"/>
<path d="M0 88C8 86 16 90 20 96V108H0Z" fill="#5a4630"/><path d="M52 96C62 90 74 88 80 90V108H52Z" fill="#a8792e" opacity=".85"/>
</g>
<g filter="url(#roB5)"><circle cx="60" cy="88" r="13" fill="#fff7d6"/><circle cx="60" cy="90" r="22" fill="#ffc83a" opacity=".55"/></g>
<g filter="url(#roB05)"><g fill="#ffdf7a" opacity=".4"><path d="M60 88L94.0 87.8L93.9 90.2Z"/><path d="M60 88L93.8 98.3L93.0 100.6Z"/><path d="M60 88L79.2 101.5L78.2 102.8Z"/><path d="M60 88L87.5 117.6L85.3 119.5Z"/><path d="M60 88L71.4 112.7L69.6 113.4Z"/><path d="M60 88L61.9 120.3L59.6 120.3Z"/><path d="M60 88L53.3 119.8L51.1 119.2Z"/><path d="M60 88L48.5 110.6L47.0 109.7Z"/><path d="M60 88L31.8 117.9L29.8 115.9Z"/><path d="M60 88L27.2 107.8L25.9 105.5Z"/><path d="M60 88L37.3 93.6L36.9 92.0Z"/><path d="M60 88L25.1 86.0L25.3 83.6Z"/><path d="M60 88L38.2 81.6L38.7 80.1Z"/><path d="M60 88L34.0 68.6L35.4 66.9Z"/><path d="M60 88L34.6 55.4L36.9 53.7Z"/><path d="M60 88L44.4 48.7L47.2 47.7Z"/><path d="M60 88L54.8 48.7L57.6 48.5Z"/><path d="M60 88L66.8 46.0L69.8 46.5Z"/><path d="M60 88L71.6 66.8L73.0 67.7Z"/><path d="M60 88L77.2 67.4L78.5 68.7Z"/><path d="M60 88L87.9 73.1L88.8 75.1Z"/><path d="M60 88L87.8 81.0L88.2 83.0Z"/></g></g>
<circle cx="60" cy="88" r="5" fill="#fffbea" filter="url(#roB1)"/>
</svg></div>
<div class="chk"><svg style="left:8.500px;top:11px" width="19" height="15" viewBox="0 0 19 15" fill="none" stroke="#fff" stroke-width="2.100"><path d="M1.200 8.200l5.200 5 11.400-12"/></svg></div>
<h3 style="left:15.25px;top:176px;font-size:17.2px;line-height:17.2px;letter-spacing:-1.042px;color:#1c1c1c;">Rome</h3>
<i class="dv"></i>
<span style="left:15.25px;top:211px;font-size:11.3px;line-height:11.3px;font-weight:700;letter-spacing:0.201px;color:#222;">Asset Type</span>
<span style="left:82.50px;top:211px;font-size:11.3px;line-height:11.3px;letter-spacing:-0.094px;color:#444;">Image</span>
<div class="jpg"><span style="left:7.30px;top:5px;font-size:14.0px;line-height:14.0px;font-weight:700;color:#fff;">JPG</span></div>
</div>
<div class="card" style="left:998px;top:64px">
<div class="ph"><svg role="img" aria-label="Amsterdam Canals thumbnail" width="250" height="166" viewBox="0 0 250 166" preserveAspectRatio="none">
<defs>
<linearGradient id="amSky" x1="0" y1="0" x2="0" y2="1"><stop offset="0" stop-color="#4556a0"/><stop offset=".5" stop-color="#6270b0"/><stop offset="1" stop-color="#a9b6dc"/></linearGradient>
<linearGradient id="amWat" x1="0" y1="0" x2="0" y2="1"><stop offset="0" stop-color="#25347c"/><stop offset=".4" stop-color="#1f2e74"/><stop offset="1" stop-color="#0e1742"/></linearGradient>
<filter id="amB5" x="-30%" y="-30%" width="160%" height="160%"><feGaussianBlur stdDeviation="5"/></filter>
<filter id="amB3" x="-30%" y="-30%" width="160%" height="160%"><feGaussianBlur stdDeviation="2.500"/></filter>
<filter id="amB1" x="-30%" y="-30%" width="160%" height="160%"><feGaussianBlur stdDeviation=".8"/></filter>
<filter id="amB05" x="-30%" y="-30%" width="160%" height="160%"><feGaussianBlur stdDeviation=".4"/></filter>
</defs>
<rect width="250" height="60" fill="url(#amSky)"/>
<g filter="url(#amB5)">
<ellipse cx="106" cy="21" rx="19" ry="13" fill="#eef2ff"/>
<ellipse cx="156" cy="15" rx="40" ry="13" fill="#3f417a" opacity=".97"/>
<ellipse cx="212" cy="12" rx="40" ry="12" fill="#4a4c86" opacity=".95"/>
<ellipse cx="20" cy="6" rx="30" ry="7" fill="#3f5fb8" opacity=".9"/>
<ellipse cx="232" cy="2" rx="16" ry="3" fill="#b9bdd4" opacity=".6"/>
<ellipse cx="180" cy="27" rx="24" ry="3.500" fill="#b9c2e0" opacity=".6"/>
<ellipse cx="8" cy="24" rx="10" ry="8" fill="#c9d6f0" opacity=".8"/>
</g>
<!-- buildings -->
<g filter="url(#amB05)">
<path d="M0 30L9 34V100H0z" fill="#2c2a40"/><path d="M0 30L9 34V38H0z" fill="#d6d8e0"/>
<path d="M10 21H44V100H10z" fill="#d9d2c2"/><path d="M9 19.500L17 18H44V22H9z" fill="#3a3640"/>
<path d="M44 60H96V100H44z" fill="#34305a"/>
<path d="M96 100V44L98 36L101.500 29L105 36L108 40L112 44H126V100Z" fill="#3a2f62"/>
<path d="M98 36L101.500 29L105 36L106 40H97Z" fill="#d9d6e6" opacity=".6"/>
<path d="M112 37H146V100H112z" fill="#3a3460"/><path d="M112 36H127V42H112z" fill="#e2dfd6"/>
<path d="M144 32H166V100H144z" fill="#d6d2c8"/><path d="M144 31.500H166V36H144z" fill="#5a5a78"/>
<path d="M165 29H189V100H165z" fill="#2a2a66"/><path d="M164 28.500H190V32H164z" fill="#dfe2f0"/>
<path d="M189 31H215V100H189z" fill="#b3735e"/><path d="M186 23.500L189 22.500L212 24L214 28V32H188Z" fill="#4a4456"/><path d="M189 31H215V35H189z" fill="#e0dbd0"/>
<path d="M214 28H250V100H214z" fill="#2a2634"/><path d="M210 22L213 20.500L246 22L249 27.500H212Z" fill="#cf3a1c"/><path d="M214 28H250V33H214z" fill="#d9d6d0"/>
<g fill="#3a4a86" opacity="0.85"><rect x="14.5" y="31.5" width="5.0" height="8.0"/><rect x="24.5" y="31.5" width="5.0" height="8.0"/><rect x="34.5" y="31.5" width="5.0" height="8.0"/><rect x="14.5" y="48.5" width="5.0" height="8.0"/><rect x="24.5" y="48.5" width="5.0" height="8.0"/><rect x="34.5" y="48.5" width="5.0" height="8.0"/><rect x="14.5" y="65.5" width="5.0" height="8.0"/><rect x="24.5" y="65.5" width="5.0" height="8.0"/><rect x="34.5" y="65.5" width="5.0" height="8.0"/><rect x="14.5" y="82.5" width="5.0" height="8.0"/><rect x="24.5" y="82.5" width="5.0" height="8.0"/><rect x="34.5" y="82.5" width="5.0" height="8.0"/></g>
<g fill="#c9d2e6" opacity="0.8"><rect x="2.0" y="45.2" width="5.0" height="7.0"/><rect x="2.0" y="58.8" width="5.0" height="7.0"/><rect x="2.0" y="72.2" width="5.0" height="7.0"/><rect x="2.0" y="85.8" width="5.0" height="7.0"/></g>
<g fill="#eef0f8" opacity="0.92"><rect x="98.5" y="39.8" width="4.6" height="6.5"/><rect x="106.0" y="39.8" width="4.6" height="6.5"/><rect x="98.5" y="49.8" width="4.6" height="6.5"/><rect x="106.0" y="49.8" width="4.6" height="6.5"/><rect x="98.5" y="59.8" width="4.6" height="6.5"/><rect x="106.0" y="59.8" width="4.6" height="6.5"/><rect x="98.5" y="69.8" width="4.6" height="6.5"/><rect x="106.0" y="69.8" width="4.6" height="6.5"/></g>
<g fill="#eef0f8" opacity="0.92"><rect x="116.8" y="45.9" width="5.5" height="7.5"/><rect x="116.8" y="57.2" width="5.5" height="7.5"/><rect x="116.8" y="68.6" width="5.5" height="7.5"/></g>
<g fill="#f4f4f0" opacity="0.9"><rect x="151.8" y="43.2" width="4.5" height="6.5"/><rect x="159.8" y="43.2" width="4.5" height="6.5"/><rect x="151.8" y="52.2" width="4.5" height="6.5"/><rect x="159.8" y="52.2" width="4.5" height="6.5"/><rect x="151.8" y="61.2" width="4.5" height="6.5"/><rect x="159.8" y="61.2" width="4.5" height="6.5"/><rect x="151.8" y="70.2" width="4.5" height="6.5"/><rect x="159.8" y="70.2" width="4.5" height="6.5"/></g>
<g fill="#f0f2fa" opacity="0.95"><rect x="169.0" y="37.4" width="6.5" height="9.0"/><rect x="179.5" y="37.4" width="6.5" height="9.0"/><rect x="169.0" y="51.1" width="6.5" height="9.0"/><rect x="179.5" y="51.1" width="6.5" height="9.0"/><rect x="169.0" y="64.9" width="6.5" height="9.0"/><rect x="179.5" y="64.9" width="6.5" height="9.0"/><rect x="169.0" y="78.6" width="6.5" height="9.0"/><rect x="179.5" y="78.6" width="6.5" height="9.0"/></g>
<g fill="#e9e6e6" opacity="0.9"><rect x="191.6" y="39.5" width="4.8" height="7.0"/><rect x="199.6" y="39.5" width="4.8" height="7.0"/><rect x="207.6" y="39.5" width="4.8" height="7.0"/><rect x="191.6" y="49.5" width="4.8" height="7.0"/><rect x="199.6" y="49.5" width="4.8" height="7.0"/><rect x="207.6" y="49.5" width="4.8" height="7.0"/><rect x="191.6" y="59.5" width="4.8" height="7.0"/><rect x="199.6" y="59.5" width="4.8" height="7.0"/><rect x="207.6" y="59.5" width="4.8" height="7.0"/><rect x="191.6" y="69.5" width="4.8" height="7.0"/><rect x="199.6" y="69.5" width="4.8" height="7.0"/><rect x="207.6" y="69.5" width="4.8" height="7.0"/></g>
<g fill="#e6e8f0" opacity="0.9"><rect x="217.6" y="36.4" width="6.5" height="8.0"/><rect x="229.2" y="36.4" width="6.5" height="8.0"/><rect x="240.9" y="36.4" width="6.5" height="8.0"/><rect x="217.6" y="47.1" width="6.5" height="8.0"/><rect x="229.2" y="47.1" width="6.5" height="8.0"/><rect x="240.9" y="47.1" width="6.5" height="8.0"/><rect x="217.6" y="57.9" width="6.5" height="8.0"/><rect x="229.2" y="57.9" width="6.5" height="8.0"/><rect x="240.9" y="57.9" width="6.5" height="8.0"/><rect x="217.6" y="68.6" width="6.5" height="8.0"/><rect x="229.2" y="68.6" width="6.5" height="8.0"/><rect x="240.9" y="68.6" width="6.5" height="8.0"/></g>
<g fill="#c9cce0" opacity="0.6"><rect x="49.2" y="80.5" width="5.0" height="13.0"/><rect x="58.6" y="80.5" width="5.0" height="13.0"/><rect x="68.0" y="80.5" width="5.0" height="13.0"/><rect x="77.4" y="80.5" width="5.0" height="13.0"/><rect x="86.8" y="80.5" width="5.0" height="13.0"/></g>
<g fill="#e9b08a" opacity="0.9"><rect x="99.2" y="81.5" width="4.5" height="13.0"/><rect x="106.2" y="81.5" width="4.5" height="13.0"/></g>
<g fill="#ecdcc0" opacity="0.9"><rect x="144.2" y="81.5" width="4.5" height="13.0"/><rect x="151.2" y="81.5" width="4.5" height="13.0"/><rect x="158.2" y="81.5" width="4.5" height="13.0"/></g>
<g fill="#cfd6ea" opacity="0.55"><rect x="192.0" y="82.0" width="4.5" height="12.0"/><rect x="200.6" y="82.0" width="4.5" height="12.0"/><rect x="209.2" y="82.0" width="4.5" height="12.0"/><rect x="217.8" y="82.0" width="4.5" height="12.0"/><rect x="226.3" y="82.0" width="4.5" height="12.0"/><rect x="234.9" y="82.0" width="4.5" height="12.0"/><rect x="243.5" y="82.0" width="4.5" height="12.0"/></g>
</g>
<!-- trees -->
<g filter="url(#amB1)">
<path d="M60 60H63.500V104H60z" fill="#3a3020"/><path d="M137 70H139V104H137z" fill="#3a3020"/><path d="M219 70H220.500V104H219z" fill="#3a3020"/>
<circle cx="79.8" cy="62.9" r="13.2" fill="#9aa63a"/><circle cx="80.5" cy="60.0" r="11.0" fill="#274c1c"/><circle cx="64.6" cy="37.5" r="7.7" fill="#274c1c"/><circle cx="41.4" cy="53.7" r="7.5" fill="#2c5420"/><circle cx="60.5" cy="68.3" r="11.9" fill="#4f7f2a"/><circle cx="65.8" cy="42.0" r="7.7" fill="#3f6a24"/><circle cx="77.5" cy="38.2" r="9.1" fill="#274c1c"/><circle cx="60.1" cy="25.2" r="13.2" fill="#2c5420"/><circle cx="49.1" cy="39.2" r="12.5" fill="#2c5420"/><circle cx="88.4" cy="36.1" r="10.6" fill="#4f7f2a"/><circle cx="73.9" cy="69.5" r="13.9" fill="#4f7f2a"/><circle cx="61.9" cy="17.9" r="14.8" fill="#274c1c"/><circle cx="36.7" cy="42.7" r="8.9" fill="#9aa63a"/><circle cx="41.0" cy="30.5" r="13.8" fill="#274c1c"/><circle cx="59.9" cy="42.0" r="9.3" fill="#274c1c"/><circle cx="54.6" cy="49.0" r="11.6" fill="#7f9e34"/><circle cx="81.7" cy="55.3" r="8.3" fill="#335c22"/><circle cx="47.2" cy="41.9" r="11.1" fill="#3f6a24"/><circle cx="49.5" cy="46.6" r="13.8" fill="#274c1c"/><circle cx="57.2" cy="36.4" r="9.2" fill="#3f6a24"/><circle cx="65.5" cy="24.9" r="13.9" fill="#6f9434"/><circle cx="50.9" cy="52.3" r="13.8" fill="#7f9e34"/><circle cx="50.7" cy="47.2" r="11.6" fill="#3f6a24"/><circle cx="44.1" cy="61.0" r="14.6" fill="#335c22"/><circle cx="43.4" cy="41.7" r="10.7" fill="#3f6a24"/><circle cx="47.9" cy="45.8" r="11.6" fill="#274c1c"/><circle cx="48.0" cy="45.4" r="10.1" fill="#7f9e34"/><circle cx="59.9" cy="44.8" r="9.2" fill="#335c22"/><circle cx="53.5" cy="40.9" r="8.2" fill="#9aa63a"/><circle cx="89.4" cy="49.5" r="8.0" fill="#3f6a24"/><circle cx="40.5" cy="50.9" r="9.6" fill="#9aa63a"/><circle cx="79.2" cy="57.3" r="10.1" fill="#4f7f2a"/><circle cx="69.1" cy="54.7" r="14.6" fill="#9aa63a"/><circle cx="55.0" cy="33.3" r="12.7" fill="#2c5420"/><circle cx="60.1" cy="44.5" r="10.4" fill="#274c1c"/><circle cx="66.5" cy="32.1" r="9.4" fill="#6f9434"/><circle cx="79.4" cy="40.4" r="14.8" fill="#6f9434"/><circle cx="71.7" cy="45.0" r="12.9" fill="#335c22"/><circle cx="45.5" cy="50.2" r="10.7" fill="#6f9434"/><circle cx="83.9" cy="40.9" r="12.7" fill="#2c5420"/><circle cx="66.6" cy="65.2" r="10.4" fill="#7f9e34"/><circle cx="54.0" cy="29.9" r="13.0" fill="#335c22"/><circle cx="88.2" cy="38.8" r="9.8" fill="#4f7f2a"/><circle cx="53.1" cy="68.9" r="13.0" fill="#274c1c"/><circle cx="55.5" cy="40.7" r="11.7" fill="#3f6a24"/><circle cx="53.6" cy="38.0" r="14.2" fill="#2c5420"/><circle cx="75.1" cy="66.6" r="14.8" fill="#3f6a24"/><circle cx="52.4" cy="54.2" r="9.0" fill="#274c1c"/><circle cx="47.7" cy="34.1" r="14.5" fill="#274c1c"/><circle cx="57.8" cy="61.6" r="9.9" fill="#274c1c"/><circle cx="65.0" cy="42.5" r="9.0" fill="#7f9e34"/><circle cx="70.4" cy="25.7" r="8.5" fill="#274c1c"/><circle cx="68.1" cy="65.4" r="13.7" fill="#7f9e34"/><circle cx="84.5" cy="31.2" r="11.5" fill="#6f9434"/><circle cx="66.7" cy="45.6" r="8.5" fill="#335c22"/><circle cx="72.3" cy="38.2" r="13.2" fill="#9aa63a"/><circle cx="53.1" cy="54.8" r="9.7" fill="#2c5420"/><circle cx="75.9" cy="58.7" r="8.3" fill="#3f6a24"/><circle cx="50.0" cy="52.6" r="14.9" fill="#335c22"/><circle cx="69.9" cy="31.1" r="12.1" fill="#274c1c"/><circle cx="80.3" cy="53.0" r="11.7" fill="#9aa63a"/><circle cx="54.1" cy="54.1" r="11.5" fill="#4f7f2a"/><circle cx="50.5" cy="47.4" r="13.4" fill="#9aa63a"/><circle cx="84.9" cy="45.7" r="8.2" fill="#4f7f2a"/><circle cx="74.1" cy="22.5" r="8.9" fill="#274c1c"/><circle cx="72.1" cy="58.7" r="12.6" fill="#335c22"/><circle cx="62.7" cy="36.9" r="14.3" fill="#274c1c"/><circle cx="69.7" cy="25.9" r="13.6" fill="#9aa63a"/><circle cx="59.7" cy="30.5" r="9.0" fill="#7f9e34"/><circle cx="64.8" cy="44.4" r="14.8" fill="#9aa63a"/><circle cx="60.9" cy="30.1" r="10.4" fill="#274c1c"/><circle cx="87.4" cy="54.2" r="14.7" fill="#2c5420"/><circle cx="71.5" cy="51.1" r="12.1" fill="#2c5420"/><circle cx="56.5" cy="33.5" r="11.5" fill="#9aa63a"/><circle cx="67.7" cy="58.4" r="13.6" fill="#4f7f2a"/><circle cx="80.1" cy="42.2" r="12.4" fill="#7f9e34"/><circle cx="77.8" cy="38.2" r="9.8" fill="#7f9e34"/><circle cx="72.4" cy="66.4" r="11.8" fill="#9aa63a"/><circle cx="63.2" cy="51.0" r="12.1" fill="#4f7f2a"/><circle cx="63.1" cy="46.7" r="9.3" fill="#4f7f2a"/><circle cx="60.1" cy="69.4" r="12.9" fill="#3f6a24"/><circle cx="54.2" cy="34.0" r="13.4" fill="#2c5420"/><circle cx="38.0" cy="49.0" r="8.2" fill="#7f9e34"/><circle cx="86.9" cy="56.6" r="8.8" fill="#335c22"/><circle cx="87.7" cy="41.6" r="9.9" fill="#4f7f2a"/><circle cx="56.7" cy="19.8" r="12.0" fill="#335c22"/><circle cx="69.8" cy="38.7" r="14.3" fill="#3f6a24"/><circle cx="67.6" cy="19.7" r="12.1" fill="#6f9434"/><circle cx="70.4" cy="59.2" r="8.7" fill="#6f9434"/><circle cx="62.9" cy="49.4" r="14.7" fill="#274c1c"/>
<path d="M138 18L146 40L154 62L152 80L140 86L126 82L124 64L130 42Z" fill="#2f7a34"/><circle cx="150.5" cy="54.4" r="3.5" fill="#357a34"/><circle cx="136.3" cy="65.6" r="6.0" fill="#4a903e"/><circle cx="139.0" cy="68.4" r="3.4" fill="#2a6c2e"/><circle cx="148.4" cy="60.0" r="6.0" fill="#5a9c42"/><circle cx="147.1" cy="55.4" r="4.8" fill="#4a903e"/><circle cx="148.2" cy="48.6" r="4.5" fill="#4a903e"/><circle cx="145.1" cy="53.0" r="6.2" fill="#2a6c2e"/><circle cx="134.2" cy="56.7" r="3.4" fill="#4a903e"/><circle cx="142.8" cy="72.6" r="4.5" fill="#5a9c42"/><circle cx="137.0" cy="53.2" r="6.2" fill="#225e28"/><circle cx="137.9" cy="40.0" r="5.8" fill="#5a9c42"/><circle cx="131.6" cy="76.8" r="6.5" fill="#2a6c2e"/><circle cx="145.8" cy="56.6" r="5.7" fill="#5a9c42"/><circle cx="139.0" cy="69.9" r="4.9" fill="#5a9c42"/><circle cx="142.2" cy="50.0" r="6.2" fill="#225e28"/><circle cx="133.0" cy="74.2" r="5.1" fill="#225e28"/><circle cx="134.0" cy="60.7" r="4.4" fill="#2a6c2e"/><circle cx="145.6" cy="48.8" r="5.9" fill="#225e28"/><circle cx="134.6" cy="79.3" r="5.6" fill="#5a9c42"/><circle cx="131.4" cy="54.6" r="5.3" fill="#225e28"/><circle cx="137.2" cy="67.7" r="5.0" fill="#5a9c42"/><circle cx="146.8" cy="47.6" r="4.4" fill="#357a34"/><circle cx="142.8" cy="55.7" r="5.8" fill="#357a34"/><circle cx="137.2" cy="58.4" r="5.3" fill="#357a34"/><circle cx="139.1" cy="53.5" r="4.2" fill="#2a6c2e"/><circle cx="141.1" cy="58.6" r="6.3" fill="#357a34"/><circle cx="145.2" cy="64.0" r="4.1" fill="#357a34"/><circle cx="149.4" cy="70.3" r="3.4" fill="#357a34"/><circle cx="136.5" cy="64.4" r="6.4" fill="#2a6c2e"/><circle cx="138.7" cy="59.9" r="5.2" fill="#2a6c2e"/><circle cx="140.0" cy="62.4" r="4.4" fill="#5a9c42"/><circle cx="131.8" cy="47.1" r="4.2" fill="#225e28"/><circle cx="146.5" cy="62.5" r="5.8" fill="#357a34"/><circle cx="147.5" cy="49.6" r="6.1" fill="#2a6c2e"/><circle cx="134.0" cy="61.5" r="5.5" fill="#4a903e"/><circle cx="139.7" cy="58.1" r="5.9" fill="#2a6c2e"/><circle cx="128.5" cy="57.9" r="4.9" fill="#4a903e"/><circle cx="146.4" cy="76.3" r="4.2" fill="#5a9c42"/><circle cx="148.4" cy="57.0" r="5.6" fill="#2a6c2e"/><circle cx="136.4" cy="51.8" r="3.7" fill="#2a6c2e"/>
<circle cx="220.7" cy="75.9" r="4.8" fill="#5f8c30"/><circle cx="218.2" cy="61.6" r="3.6" fill="#5f8c30"/><circle cx="219.7" cy="71.2" r="7.0" fill="#5f8c30"/><circle cx="211.1" cy="60.9" r="4.9" fill="#749a34"/><circle cx="220.5" cy="69.5" r="6.8" fill="#5f8c30"/><circle cx="219.4" cy="50.5" r="3.7" fill="#8fae38"/><circle cx="219.5" cy="66.0" r="6.6" fill="#5f8c30"/><circle cx="209.7" cy="54.8" r="4.9" fill="#5f8c30"/><circle cx="210.9" cy="73.2" r="5.1" fill="#749a34"/><circle cx="222.3" cy="61.1" r="4.0" fill="#749a34"/><circle cx="219.5" cy="77.5" r="6.3" fill="#a6ba3c"/><circle cx="209.7" cy="71.3" r="5.5" fill="#5f8c30"/><circle cx="209.3" cy="55.8" r="5.9" fill="#8fae38"/><circle cx="228.1" cy="50.6" r="5.9" fill="#749a34"/><circle cx="217.9" cy="55.7" r="5.4" fill="#8fae38"/><circle cx="218.8" cy="57.4" r="6.4" fill="#a6ba3c"/><circle cx="219.5" cy="67.2" r="6.5" fill="#5f8c30"/><circle cx="229.8" cy="72.0" r="5.0" fill="#749a34"/><circle cx="227.8" cy="65.3" r="5.0" fill="#8fae38"/><circle cx="229.4" cy="67.5" r="3.7" fill="#a6ba3c"/><circle cx="208.1" cy="58.9" r="4.5" fill="#749a34"/><circle cx="226.5" cy="63.9" r="3.8" fill="#8fae38"/><circle cx="232.2" cy="58.7" r="4.5" fill="#a6ba3c"/><circle cx="221.1" cy="66.1" r="6.6" fill="#a6ba3c"/><circle cx="217.4" cy="68.0" r="6.6" fill="#5f8c30"/><circle cx="211.4" cy="66.9" r="5.8" fill="#8fae38"/><circle cx="210.8" cy="52.6" r="5.3" fill="#5f8c30"/><circle cx="212.9" cy="53.5" r="6.8" fill="#5f8c30"/><circle cx="228.8" cy="62.4" r="5.5" fill="#8fae38"/><circle cx="223.1" cy="47.4" r="4.6" fill="#5f8c30"/><circle cx="212.6" cy="55.3" r="3.7" fill="#a6ba3c"/><circle cx="209.8" cy="66.9" r="4.8" fill="#a6ba3c"/><circle cx="219.9" cy="62.3" r="3.7" fill="#8fae38"/><circle cx="225.6" cy="62.3" r="5.1" fill="#a6ba3c"/><circle cx="222.1" cy="69.6" r="6.2" fill="#a6ba3c"/><circle cx="217.7" cy="73.1" r="6.2" fill="#8fae38"/><circle cx="230.3" cy="61.5" r="4.0" fill="#749a34"/><circle cx="216.6" cy="57.6" r="4.7" fill="#5f8c30"/><circle cx="218.1" cy="60.6" r="5.6" fill="#a6ba3c"/><circle cx="217.6" cy="57.7" r="6.4" fill="#749a34"/>
</g>
<!-- street, cars, quay -->
<g filter="url(#amB05)">
<path d="M0 96H250V108H0z" fill="#2a2a34"/>
<g fill="#14141c"><rect x="2" y="97" width="16" height="9" rx="3"/><rect x="22" y="99" width="32" height="7" rx="3"/><rect x="68" y="98" width="20" height="8" rx="3"/><rect x="86" y="99" width="14" height="7" rx="2.500"/><rect x="120" y="99" width="14" height="7" rx="2.500"/><rect x="160" y="99" width="12" height="7" rx="2.500"/><rect x="180" y="95" width="6" height="11" rx="2"/><rect x="236" y="97" width="14" height="9" rx="3"/></g>
<g fill="#c9cedc"><rect x="144" y="98" width="14" height="8" rx="2.500"/><rect x="170" y="98.500" width="11" height="7" rx="2.500"/><rect x="188" y="99.500" width="12" height="6.500" rx="2.500"/><rect x="202" y="98" width="13" height="8" rx="2.500"/><rect x="218" y="96" width="12" height="8" rx="2.500"/></g>
<path d="M100 98L104 95.500H117L119 98V106H100Z" fill="#f0a818"/><path d="M105 96.500H110V99.500H104Z" fill="#e8eef4" opacity=".85"/><path d="M117 96H121V104H117z" fill="#e6e6ea"/>
<path d="M148 99H152V106H148z" fill="#2a5a9a"/>
<path d="M0 106.500H250V116.500H0z" fill="#7a5a58"/><path d="M0 106H250V108.300H0z" fill="#8a7a52"/>
<path d="M0 112H60L58 116.500H0z" fill="#14141e"/><path d="M32 110H46V114.500H32z" fill="#e8642a"/><path d="M64 111H95L94 116H66z" fill="#3a3a48"/><path d="M102 113H124L123 116H104z" fill="#c9a472"/><path d="M132 113.500H164V116H132z" fill="#d9a890"/><path d="M204 109H246L244 117.500H206z" fill="#1c2a6a"/><path d="M142 113.500H146V116.500H142z" fill="#3aa0d0"/>
</g>
<!-- water -->
<rect y="116.500" width="250" height="50" fill="url(#amWat)"/>
<g filter="url(#amB3)">
<path d="M56 118H78L76 150H60z" fill="#6a82d8" opacity=".5"/><path d="M160 118H188L184 156H166z" fill="#6a82d8" opacity=".55"/><path d="M212 120H228L226 150H214z" fill="#7a90e0" opacity=".45"/>
<path d="M106 119H118L116 136H108z" fill="#d9a43a" opacity=".7"/><path d="M124 118H152L150 140H128z" fill="#8a9ad8" opacity=".35"/>
<path d="M-10 118H20L18 136H-10z" fill="#141a3a" opacity=".5"/><path d="M200 118H260V128H200z" fill="#0c1030" opacity=".6"/>
<path d="M-10 156H260V172H-10z" fill="#0a1030" opacity=".55"/><path d="M78 140H130L126 166H82z" fill="#0e1640" opacity=".5"/>
</g>
<rect x="155.7" y="149.7" width="15.1" height="1.4" fill="#6f86d8" opacity="0.52"/><rect x="62.3" y="122.1" width="6.2" height="1.1" fill="#8ea0e6" opacity="0.34"/><rect x="135.9" y="143.0" width="4.2" height="1.0" fill="#4f66c0" opacity="0.31"/><rect x="216.9" y="135.6" width="14.7" height="0.8" fill="#6f86d8" opacity="0.47"/><rect x="31.7" y="120.1" width="16.2" height="1.3" fill="#4f66c0" opacity="0.59"/><rect x="41.5" y="126.7" width="8.4" height="1.1" fill="#4f66c0" opacity="0.49"/><rect x="51.2" y="157.6" width="13.7" height="0.9" fill="#3d52a8" opacity="0.38"/><rect x="41.5" y="125.8" width="4.9" height="1.4" fill="#8ea0e6" opacity="0.46"/><rect x="149.0" y="148.3" width="4.9" height="1.4" fill="#8ea0e6" opacity="0.42"/><rect x="78.9" y="139.2" width="13.9" height="0.9" fill="#6f86d8" opacity="0.58"/><rect x="237.3" y="134.3" width="9.7" height="1.0" fill="#3d52a8" opacity="0.45"/><rect x="2.3" y="121.9" width="6.5" height="0.8" fill="#4f66c0" opacity="0.34"/><rect x="204.9" y="138.5" width="11.2" height="1.3" fill="#8ea0e6" opacity="0.29"/><rect x="187.1" y="151.9" width="16.0" height="1.0" fill="#6f86d8" opacity="0.59"/><rect x="52.1" y="140.5" width="9.1" height="1.0" fill="#4f66c0" opacity="0.57"/><rect x="136.3" y="132.5" width="8.4" height="1.3" fill="#4f66c0" opacity="0.47"/><rect x="180.3" y="132.4" width="10.8" height="0.8" fill="#6f86d8" opacity="0.46"/><rect x="230.9" y="121.3" width="14.4" height="1.4" fill="#8ea0e6" opacity="0.41"/><rect x="105.4" y="122.2" width="16.8" height="1.3" fill="#6f86d8" opacity="0.37"/><rect x="51.8" y="159.3" width="11.9" height="1.2" fill="#4f66c0" opacity="0.53"/><rect x="26.7" y="137.4" width="6.1" height="0.9" fill="#3d52a8" opacity="0.41"/><rect x="249.8" y="154.1" width="17.7" height="1.5" fill="#3d52a8" opacity="0.49"/><rect x="79.4" y="131.0" width="10.6" height="0.8" fill="#4f66c0" opacity="0.54"/><rect x="132.9" y="127.2" width="17.1" height="0.8" fill="#8ea0e6" opacity="0.42"/><rect x="128.8" y="141.9" width="11.0" height="1.3" fill="#6f86d8" opacity="0.52"/><rect x="173.6" y="146.6" width="14.6" height="1.1" fill="#8ea0e6" opacity="0.48"/><rect x="208.8" y="130.6" width="17.7" height="1.5" fill="#8ea0e6" opacity="0.37"/><rect x="44.7" y="154.1" width="10.6" height="1.0" fill="#8ea0e6" opacity="0.35"/><rect x="72.2" y="140.0" width="13.4" height="1.0" fill="#8ea0e6" opacity="0.48"/><rect x="184.5" y="153.1" width="8.9" height="1.4" fill="#4f66c0" opacity="0.49"/><rect x="244.0" y="158.3" width="11.3" height="0.9" fill="#4f66c0" opacity="0.38"/><rect x="213.5" y="131.3" width="5.1" height="0.8" fill="#3d52a8" opacity="0.52"/><rect x="145.2" y="146.6" width="9.9" height="1.3" fill="#8ea0e6" opacity="0.26"/><rect x="40.0" y="137.6" width="13.1" height="1.3" fill="#4f66c0" opacity="0.31"/><rect x="179.6" y="159.5" width="17.7" height="0.7" fill="#4f66c0" opacity="0.30"/><rect x="79.3" y="127.3" width="6.7" height="1.0" fill="#6f86d8" opacity="0.37"/><rect x="165.6" y="122.9" width="6.9" height="0.7" fill="#8ea0e6" opacity="0.39"/><rect x="69.6" y="136.4" width="5.6" height="1.5" fill="#8ea0e6" opacity="0.44"/><rect x="75.3" y="131.8" width="11.2" height="1.5" fill="#8ea0e6" opacity="0.54"/><rect x="104.8" y="152.5" width="13.0" height="1.1" fill="#8ea0e6" opacity="0.30"/><rect x="95.7" y="139.1" width="6.8" height="1.2" fill="#4f66c0" opacity="0.37"/><rect x="223.4" y="120.0" width="5.5" height="1.0" fill="#4f66c0" opacity="0.56"/><rect x="141.1" y="137.2" width="17.7" height="0.9" fill="#3d52a8" opacity="0.59"/><rect x="94.9" y="158.4" width="16.8" height="1.3" fill="#8ea0e6" opacity="0.36"/><rect x="62.8" y="120.8" width="17.2" height="1.1" fill="#8ea0e6" opacity="0.35"/><rect x="119.2" y="124.9" width="12.7" height="0.9" fill="#3d52a8" opacity="0.26"/><rect x="34.1" y="135.7" width="10.7" height="0.9" fill="#8ea0e6" opacity="0.42"/><rect x="9.2" y="139.6" width="15.8" height="0.9" fill="#8ea0e6" opacity="0.46"/><rect x="118.7" y="145.8" width="12.5" height="0.7" fill="#6f86d8" opacity="0.29"/><rect x="70.6" y="148.3" width="12.6" height="1.1" fill="#6f86d8" opacity="0.38"/><rect x="186.3" y="143.6" width="4.5" height="1.1" fill="#8ea0e6" opacity="0.49"/><rect x="26.9" y="147.5" width="6.7" height="1.3" fill="#3d52a8" opacity="0.40"/><rect x="143.9" y="148.3" width="12.9" height="1.4" fill="#3d52a8" opacity="0.54"/><rect x="118.9" y="147.3" width="14.1" height="1.1" fill="#8ea0e6" opacity="0.52"/><rect x="75.9" y="120.1" width="14.9" height="1.2" fill="#8ea0e6" opacity="0.42"/><rect x="77.7" y="126.6" width="13.7" height="1.5" fill="#3d52a8" opacity="0.44"/><rect x="106.4" y="141.7" width="4.7" height="0.9" fill="#4f66c0" opacity="0.28"/><rect x="15.7" y="157.7" width="8.7" height="1.5" fill="#3d52a8" opacity="0.60"/><rect x="175.3" y="122.0" width="15.8" height="1.2" fill="#4f66c0" opacity="0.54"/><rect x="27.8" y="155.8" width="17.9" height="0.8" fill="#3d52a8" opacity="0.46"/><rect x="103.5" y="126.4" width="12.7" height="1.1" fill="#6f86d8" opacity="0.48"/><rect x="186.4" y="131.2" width="12.0" height="1.3" fill="#6f86d8" opacity="0.56"/><rect x="33.6" y="137.3" width="8.4" height="1.1" fill="#3d52a8" opacity="0.58"/><rect x="93.5" y="122.2" width="13.8" height="1.2" fill="#4f66c0" opacity="0.49"/><rect x="72.6" y="157.7" width="11.7" height="0.9" fill="#4f66c0" opacity="0.44"/><rect x="63.5" y="150.0" width="11.2" height="1.3" fill="#4f66c0" opacity="0.55"/><rect x="113.3" y="135.6" width="5.8" height="1.2" fill="#6f86d8" opacity="0.28"/><rect x="167.0" y="123.6" width="5.7" height="0.9" fill="#3d52a8" opacity="0.56"/><rect x="120.1" y="132.9" width="15.2" height="1.1" fill="#6f86d8" opacity="0.38"/><rect x="212.1" y="157.8" width="10.0" height="1.3" fill="#4f66c0" opacity="0.28"/>
</svg></div>
<h3 style="left:15.25px;top:176px;font-size:17.2px;line-height:17.2px;letter-spacing:-0.300px;color:#1c1c1c;">Amsterdam Canals</h3>
<i class="dv"></i>
<span style="left:15.25px;top:211px;font-size:11.3px;line-height:11.3px;font-weight:700;letter-spacing:0.201px;color:#222;">Asset Type</span>
<span style="left:82.50px;top:211px;font-size:11.3px;line-height:11.3px;letter-spacing:-0.094px;color:#444;">Image</span>
<div class="jpg"><span style="left:7.30px;top:5px;font-size:14.0px;line-height:14.0px;font-weight:700;color:#fff;">JPG</span></div>
</div>
<div class="card sel" style="left:575px;top:376px">
<div class="ph"><svg role="img" aria-label="Barcelona thumbnail" width="250" height="166" viewBox="0 0 250 166" preserveAspectRatio="none">
<defs>
<linearGradient id="baSky" x1="0" y1="0" x2="0" y2="1"><stop offset="0" stop-color="#587eb0"/><stop offset=".5" stop-color="#6480ae"/><stop offset="1" stop-color="#7888b0"/></linearGradient>
<linearGradient id="baMt" x1="0" y1="0" x2="0" y2="1"><stop offset="0" stop-color="#4a5288"/><stop offset=".35" stop-color="#58588c"/><stop offset=".7" stop-color="#8c7092"/><stop offset="1" stop-color="#bc8e80"/></linearGradient>
<linearGradient id="baDk" x1="0" y1="0" x2="0" y2="1"><stop offset="0" stop-color="#3a4a6e" stop-opacity=".05"/><stop offset="1" stop-color="#0c1020" stop-opacity=".5"/></linearGradient>
<filter id="baB4" x="-30%" y="-30%" width="160%" height="160%"><feGaussianBlur stdDeviation="4"/></filter>
<filter id="baB1" x="-30%" y="-30%" width="160%" height="160%"><feGaussianBlur stdDeviation=".8"/></filter>
<filter id="baB05" x="-30%" y="-30%" width="160%" height="160%"><feGaussianBlur stdDeviation=".35"/></filter>
</defs>
<rect width="250" height="80" fill="url(#baSky)"/>
<g filter="url(#baB1)">
<path d="M-5 30L20 24L50 21L70 27L90 24L130 20L160 16L200 22L225 19L255 16V50H-5Z" fill="#6578aa"/>
<path d="M-5 44L20 41L45 38L62 32L82 28L102 25.500L120 29.500L150 26L176 30L205 33.500L232 34L255 37V82H-5Z" fill="url(#baMt)"/>
</g>
<g filter="url(#baB4)"><path d="M-10 62H120V80H-10z" fill="#d99a66" opacity=".6"/><path d="M150 68H260V82H150z" fill="#caa07e" opacity=".55"/><path d="M-10 44H260V54H-10z" fill="#5c5c96" opacity=".5"/></g>
<g fill="#ffc35a" opacity=".8"><circle cx="59.0" cy="58.7" r="0.55"/><circle cx="38.7" cy="57.7" r="0.55"/><circle cx="229.5" cy="76.8" r="0.46"/><circle cx="43.2" cy="58.8" r="0.46"/><circle cx="231.9" cy="77.6" r="0.75"/><circle cx="48.4" cy="64.1" r="0.66"/><circle cx="183.0" cy="78.2" r="0.39"/><circle cx="233.6" cy="78.5" r="0.50"/><circle cx="227.2" cy="70.9" r="0.77"/><circle cx="40.3" cy="63.9" r="0.76"/><circle cx="10.8" cy="57.2" r="0.66"/><circle cx="70.1" cy="69.9" r="0.59"/><circle cx="85.7" cy="81.9" r="0.45"/><circle cx="158.2" cy="63.2" r="0.72"/><circle cx="80.2" cy="70.5" r="0.80"/><circle cx="25.2" cy="57.6" r="0.46"/><circle cx="82.8" cy="60.6" r="0.58"/><circle cx="10.7" cy="74.1" r="0.80"/><circle cx="238.7" cy="75.1" r="0.36"/><circle cx="72.2" cy="81.1" r="0.74"/><circle cx="102.6" cy="80.5" r="0.66"/><circle cx="95.4" cy="81.0" r="0.52"/><circle cx="2.3" cy="57.2" r="0.43"/><circle cx="24.3" cy="81.5" r="0.56"/><circle cx="52.0" cy="57.5" r="0.38"/><circle cx="42.2" cy="73.6" r="0.42"/><circle cx="10.2" cy="68.8" r="0.47"/><circle cx="249.4" cy="59.2" r="0.74"/><circle cx="102.3" cy="81.7" r="0.59"/><circle cx="60.5" cy="66.7" r="0.37"/><circle cx="222.3" cy="77.6" r="0.37"/><circle cx="63.6" cy="62.3" r="0.45"/><circle cx="57.9" cy="78.6" r="0.42"/><circle cx="12.8" cy="80.1" r="0.63"/><circle cx="247.6" cy="66.5" r="0.68"/><circle cx="197.7" cy="75.4" r="0.40"/><circle cx="52.7" cy="78.7" r="0.80"/><circle cx="231.1" cy="64.8" r="0.75"/><circle cx="160.6" cy="77.2" r="0.68"/><circle cx="171.5" cy="63.0" r="0.83"/><circle cx="18.6" cy="81.2" r="0.83"/><circle cx="167.1" cy="57.2" r="0.41"/><circle cx="41.8" cy="72.5" r="0.63"/><circle cx="0.8" cy="80.0" r="0.36"/><circle cx="219.1" cy="59.0" r="0.74"/><circle cx="219.5" cy="70.3" r="0.45"/><circle cx="167.9" cy="64.6" r="0.74"/><circle cx="6.6" cy="56.9" r="0.65"/><circle cx="122.2" cy="78.5" r="0.65"/><circle cx="34.7" cy="65.4" r="0.73"/><circle cx="121.7" cy="81.1" r="0.40"/><circle cx="28.6" cy="72.1" r="0.79"/><circle cx="209.1" cy="67.0" r="0.43"/><circle cx="135.5" cy="79.5" r="0.71"/><circle cx="1.4" cy="64.1" r="0.62"/><circle cx="61.4" cy="78.0" r="0.53"/><circle cx="191.7" cy="81.6" r="0.69"/><circle cx="152.4" cy="64.1" r="0.58"/><circle cx="227.9" cy="63.9" r="0.74"/><circle cx="192.8" cy="65.4" r="0.42"/><circle cx="20.6" cy="59.7" r="0.75"/><circle cx="44.4" cy="79.4" r="0.54"/><circle cx="155.2" cy="58.4" r="0.82"/><circle cx="44.9" cy="73.0" r="0.51"/><circle cx="75.1" cy="56.6" r="0.36"/><circle cx="237.3" cy="77.6" r="0.75"/><circle cx="238.3" cy="60.1" r="0.60"/><circle cx="143.5" cy="80.4" r="0.73"/><circle cx="242.1" cy="59.0" r="0.69"/><circle cx="186.3" cy="72.1" r="0.50"/><circle cx="232.0" cy="66.6" r="0.80"/><circle cx="81.7" cy="72.3" r="0.85"/><circle cx="224.8" cy="66.4" r="0.76"/><circle cx="70.9" cy="66.7" r="0.36"/><circle cx="46.0" cy="70.0" r="0.70"/><circle cx="153.7" cy="65.5" r="0.66"/><circle cx="39.0" cy="57.8" r="0.84"/><circle cx="247.0" cy="79.9" r="0.51"/><circle cx="22.8" cy="62.7" r="0.46"/><circle cx="232.1" cy="79.2" r="0.42"/><circle cx="59.6" cy="63.8" r="0.82"/><circle cx="40.8" cy="76.6" r="0.69"/><circle cx="136.8" cy="80.9" r="0.48"/><circle cx="24.2" cy="56.8" r="0.51"/><circle cx="30.4" cy="57.6" r="0.85"/><circle cx="72.3" cy="79.1" r="0.70"/><circle cx="182.8" cy="73.0" r="0.79"/><circle cx="179.9" cy="70.6" r="0.71"/><circle cx="38.6" cy="78.0" r="0.59"/><circle cx="17.0" cy="60.4" r="0.79"/><circle cx="64.0" cy="66.2" r="0.69"/><circle cx="215.4" cy="64.5" r="0.56"/><circle cx="7.0" cy="78.8" r="0.36"/><circle cx="179.6" cy="60.8" r="0.85"/><circle cx="176.6" cy="80.0" r="0.54"/><circle cx="211.9" cy="77.7" r="0.40"/><circle cx="161.7" cy="79.3" r="0.37"/><circle cx="158.0" cy="62.6" r="0.68"/><circle cx="76.8" cy="79.3" r="0.66"/><circle cx="84.8" cy="77.7" r="0.80"/><circle cx="223.3" cy="79.0" r="0.70"/><circle cx="178.4" cy="69.0" r="0.65"/><circle cx="62.5" cy="61.2" r="0.39"/><circle cx="195.4" cy="79.6" r="0.41"/><circle cx="244.6" cy="77.5" r="0.35"/><circle cx="211.0" cy="72.2" r="0.36"/><circle cx="183.3" cy="56.9" r="0.42"/><circle cx="90.0" cy="79.1" r="0.72"/><circle cx="204.0" cy="63.8" r="0.65"/><circle cx="8.5" cy="66.7" r="0.84"/><circle cx="172.7" cy="76.5" r="0.57"/><circle cx="43.7" cy="56.5" r="0.79"/><circle cx="233.0" cy="63.2" r="0.55"/><circle cx="155.0" cy="62.7" r="0.37"/><circle cx="65.9" cy="63.5" r="0.81"/><circle cx="33.1" cy="75.7" r="0.39"/><circle cx="52.9" cy="80.3" r="0.68"/><circle cx="85.1" cy="67.8" r="0.85"/><circle cx="41.6" cy="62.3" r="0.77"/><circle cx="28.5" cy="81.3" r="0.50"/><circle cx="226.8" cy="58.0" r="0.44"/><circle cx="179.6" cy="56.7" r="0.44"/><circle cx="51.5" cy="56.9" r="0.51"/><circle cx="82.0" cy="81.6" r="0.65"/><circle cx="91.1" cy="81.7" r="0.44"/><circle cx="53.7" cy="80.9" r="0.83"/><circle cx="225.9" cy="74.3" r="0.77"/><circle cx="26.1" cy="61.2" r="0.42"/><circle cx="185.9" cy="77.8" r="0.37"/><circle cx="38.2" cy="61.7" r="0.47"/><circle cx="156.2" cy="64.9" r="0.70"/><circle cx="47.8" cy="77.5" r="0.72"/><circle cx="76.6" cy="74.7" r="0.55"/><circle cx="34.9" cy="65.8" r="0.58"/><circle cx="89.0" cy="67.6" r="0.42"/><circle cx="7.4" cy="76.4" r="0.72"/><circle cx="73.9" cy="70.5" r="0.80"/><circle cx="120.4" cy="81.3" r="0.61"/><circle cx="45.3" cy="72.0" r="0.65"/><circle cx="5.7" cy="67.4" r="0.75"/><circle cx="34.6" cy="57.1" r="0.44"/><circle cx="71.4" cy="67.3" r="0.51"/><circle cx="168.9" cy="70.2" r="0.82"/><circle cx="64.5" cy="64.7" r="0.62"/><circle cx="215.7" cy="61.1" r="0.41"/><circle cx="220.8" cy="71.5" r="0.42"/><circle cx="235.4" cy="76.4" r="0.62"/><circle cx="65.8" cy="57.5" r="0.59"/><circle cx="216.5" cy="61.4" r="0.49"/><circle cx="172.7" cy="81.0" r="0.49"/><circle cx="132.3" cy="78.2" r="0.77"/><circle cx="18.0" cy="67.3" r="0.39"/><circle cx="106.1" cy="79.7" r="0.49"/><circle cx="211.4" cy="80.8" r="0.45"/><circle cx="229.6" cy="80.0" r="0.36"/><circle cx="0.9" cy="63.6" r="0.61"/><circle cx="160.1" cy="73.4" r="0.61"/><circle cx="16.1" cy="67.3" r="0.42"/><circle cx="26.0" cy="75.8" r="0.51"/><circle cx="84.8" cy="63.2" r="0.64"/><circle cx="29.5" cy="72.7" r="0.39"/><circle cx="238.8" cy="60.1" r="0.62"/><circle cx="89.8" cy="75.7" r="0.61"/><circle cx="156.2" cy="60.4" r="0.68"/><circle cx="239.4" cy="73.8" r="0.83"/><circle cx="76.0" cy="64.2" r="0.50"/><circle cx="79.0" cy="61.4" r="0.59"/></g>
<rect y="73" width="250" height="93" fill="#4a5f88"/>
<g filter="url(#baB05)"><rect x="-1.0" y="74.5" width="3.4" height="1.9" fill="#a9b3c8"/><rect x="3.0" y="74.0" width="4.1" height="1.2" fill="#1c2236"/><rect x="7.6" y="74.3" width="3.1" height="2.0" fill="#232a42"/><rect x="11.2" y="74.0" width="4.2" height="1.6" fill="#a9b3c8"/><rect x="15.8" y="74.4" width="2.9" height="1.0" fill="#141826"/><rect x="18.8" y="74.2" width="3.7" height="1.6" fill="#232a42"/><rect x="23.1" y="74.1" width="2.0" height="1.0" fill="#232a42"/><rect x="25.9" y="74.0" width="3.7" height="2.1" fill="#d4d0d2"/><rect x="30.3" y="74.4" width="3.0" height="2.0" fill="#3e669e"/><rect x="33.8" y="74.2" width="2.5" height="1.3" fill="#6c93c6"/><rect x="36.7" y="74.0" width="3.8" height="1.0" fill="#2a2f45"/><rect x="41.2" y="74.3" width="2.9" height="1.6" fill="#3e669e"/><rect x="44.3" y="74.3" width="2.0" height="1.3" fill="#3e669e"/><rect x="46.7" y="74.2" width="1.8" height="1.8" fill="#232a42"/><rect x="49.3" y="74.5" width="3.4" height="1.4" fill="#e9b24a"/><rect x="53.8" y="74.3" width="3.1" height="1.5" fill="#f0c560"/><rect x="58.0" y="74.4" width="2.2" height="1.9" fill="#6c93c6"/><rect x="60.8" y="74.0" width="3.8" height="1.7" fill="#141826"/><rect x="64.9" y="74.5" width="2.6" height="2.0" fill="#d99a3a"/><rect x="68.4" y="74.2" width="2.8" height="2.0" fill="#1c2236"/><rect x="72.3" y="74.3" width="4.0" height="1.9" fill="#5b86bd"/><rect x="76.8" y="74.3" width="3.1" height="1.1" fill="#c9704a"/><rect x="80.1" y="74.0" width="3.5" height="2.0" fill="#5b86bd"/><rect x="84.3" y="74.3" width="3.3" height="1.4" fill="#c0442a"/><rect x="88.5" y="74.0" width="3.7" height="1.1" fill="#232a42"/><rect x="92.2" y="74.1" width="2.7" height="1.7" fill="#1a1f33"/><rect x="95.6" y="74.1" width="2.4" height="1.7" fill="#5b86bd"/><rect x="99.0" y="74.2" width="2.1" height="1.6" fill="#c9cfdc"/><rect x="102.0" y="74.0" width="1.7" height="1.5" fill="#8a7f92"/><rect x="104.5" y="74.3" width="2.0" height="2.0" fill="#dfe2ea"/><rect x="107.4" y="74.4" width="2.2" height="1.9" fill="#141826"/><rect x="110.2" y="74.4" width="3.1" height="1.5" fill="#4f78b0"/><rect x="114.4" y="74.1" width="2.4" height="1.8" fill="#d4d0d2"/><rect x="117.5" y="74.5" width="2.4" height="1.3" fill="#1a1f33"/><rect x="120.0" y="74.5" width="1.7" height="1.5" fill="#2a2f45"/><rect x="122.5" y="74.2" width="3.4" height="1.4" fill="#44628f"/><rect x="126.3" y="74.3" width="1.6" height="1.3" fill="#5b86bd"/><rect x="128.4" y="74.2" width="2.7" height="1.4" fill="#a9b3c8"/><rect x="131.8" y="74.2" width="4.1" height="1.2" fill="#2a2f45"/><rect x="136.7" y="74.3" width="2.1" height="1.8" fill="#35527d"/><rect x="139.8" y="74.2" width="3.4" height="1.5" fill="#b7bfd0"/><rect x="143.6" y="74.0" width="2.6" height="2.1" fill="#35527d"/><rect x="146.5" y="74.1" width="2.4" height="1.1" fill="#5b86bd"/><rect x="149.5" y="74.1" width="3.2" height="1.5" fill="#35527d"/><rect x="153.9" y="74.3" width="3.4" height="1.4" fill="#141826"/><rect x="157.5" y="74.4" width="1.7" height="1.2" fill="#1c2236"/><rect x="159.4" y="74.3" width="3.4" height="1.7" fill="#1c2236"/><rect x="163.0" y="74.1" width="2.6" height="1.7" fill="#6c93c6"/><rect x="165.8" y="74.1" width="2.6" height="2.1" fill="#232a42"/><rect x="168.8" y="74.2" width="3.2" height="1.0" fill="#f0c560"/><rect x="172.0" y="74.5" width="3.2" height="2.1" fill="#b7bfd0"/><rect x="175.4" y="74.2" width="4.2" height="2.0" fill="#141826"/><rect x="179.7" y="74.1" width="3.7" height="1.9" fill="#c0442a"/><rect x="183.9" y="74.4" width="3.9" height="1.9" fill="#1c2236"/><rect x="188.9" y="74.2" width="3.9" height="1.0" fill="#1c2236"/><rect x="193.9" y="74.4" width="4.2" height="1.0" fill="#b7bfd0"/><rect x="198.8" y="74.1" width="3.2" height="1.3" fill="#35527d"/><rect x="202.4" y="74.1" width="2.3" height="1.7" fill="#c9cfdc"/><rect x="204.9" y="74.0" width="3.8" height="1.0" fill="#3e669e"/><rect x="209.3" y="74.1" width="3.4" height="1.0" fill="#b7bfd0"/><rect x="213.1" y="74.3" width="2.2" height="1.8" fill="#232a42"/><rect x="215.3" y="74.3" width="3.8" height="1.8" fill="#1a1f33"/><rect x="219.9" y="74.1" width="3.3" height="1.5" fill="#141826"/><rect x="224.2" y="74.3" width="3.7" height="1.0" fill="#d99a3a"/><rect x="228.7" y="74.2" width="3.2" height="2.0" fill="#4f78b0"/><rect x="233.0" y="74.1" width="4.1" height="2.0" fill="#c9cfdc"/><rect x="237.4" y="74.4" width="1.6" height="1.1" fill="#35527d"/><rect x="239.6" y="74.4" width="3.9" height="1.6" fill="#1c2236"/><rect x="244.4" y="74.3" width="3.9" height="1.2" fill="#4f78b0"/><rect x="248.8" y="74.0" width="3.3" height="1.1" fill="#c0442a"/><rect x="-3.5" y="75.4" width="1.7" height="1.9" fill="#b7bfd0"/><rect x="-1.2" y="75.4" width="2.6" height="1.1" fill="#8a7f92"/><rect x="2.0" y="75.4" width="3.4" height="1.8" fill="#b7bfd0"/><rect x="5.9" y="75.7" width="2.7" height="1.1" fill="#3e669e"/><rect x="8.8" y="75.7" width="3.9" height="1.9" fill="#2a2f45"/><rect x="13.6" y="75.7" width="4.4" height="1.0" fill="#6c93c6"/><rect x="19.1" y="75.4" width="2.4" height="1.2" fill="#8f4a3e"/><rect x="22.4" y="75.8" width="3.9" height="1.0" fill="#4f78b0"/><rect x="26.5" y="75.6" width="2.5" height="1.7" fill="#44628f"/><rect x="29.8" y="75.7" width="4.1" height="1.8" fill="#dfe2ea"/><rect x="34.5" y="75.8" width="1.9" height="2.0" fill="#d99a3a"/><rect x="36.5" y="75.8" width="2.5" height="1.9" fill="#b7bfd0"/><rect x="39.1" y="75.6" width="3.4" height="1.2" fill="#d4d0d2"/><rect x="43.3" y="75.6" width="2.2" height="2.1" fill="#dfe2ea"/><rect x="45.5" y="75.5" width="4.0" height="1.8" fill="#141826"/><rect x="49.7" y="75.4" width="4.1" height="2.2" fill="#c9cfdc"/><rect x="54.6" y="75.6" width="3.0" height="1.4" fill="#44628f"/><rect x="58.4" y="75.5" width="2.6" height="1.7" fill="#6c93c6"/><rect x="61.6" y="75.8" width="2.2" height="2.0" fill="#c9cfdc"/><rect x="64.9" y="75.6" width="3.8" height="1.1" fill="#d99a3a"/><rect x="68.9" y="75.8" width="3.9" height="1.4" fill="#141826"/><rect x="73.3" y="75.4" width="2.2" height="2.0" fill="#232a42"/><rect x="75.6" y="75.4" width="3.1" height="1.1" fill="#2a2f45"/><rect x="79.6" y="75.6" width="2.2" height="1.3" fill="#232a42"/><rect x="82.1" y="75.7" width="2.8" height="1.8" fill="#d4d0d2"/><rect x="85.4" y="75.5" width="4.4" height="2.0" fill="#dfe2ea"/><rect x="90.4" y="75.3" width="1.7" height="1.6" fill="#44628f"/><rect x="92.9" y="75.6" width="3.8" height="1.8" fill="#2a2f45"/><rect x="96.9" y="75.7" width="2.6" height="1.5" fill="#dfe2ea"/><rect x="99.5" y="75.4" width="2.4" height="2.0" fill="#141826"/><rect x="102.8" y="75.5" width="2.5" height="1.8" fill="#3e669e"/><rect x="105.6" y="75.4" width="2.7" height="1.6" fill="#8f4a3e"/><rect x="109.4" y="75.6" width="2.2" height="1.2" fill="#d99a3a"/><rect x="112.0" y="75.4" width="2.5" height="1.5" fill="#1a1f33"/><rect x="114.5" y="75.7" width="2.2" height="1.0" fill="#c9704a"/><rect x="117.8" y="75.5" width="4.4" height="1.6" fill="#141826"/><rect x="122.5" y="75.5" width="3.3" height="1.6" fill="#c9704a"/><rect x="126.8" y="75.4" width="4.0" height="2.0" fill="#1a1f33"/><rect x="132.0" y="75.3" width="2.5" height="1.8" fill="#5b86bd"/><rect x="135.3" y="75.4" width="4.2" height="1.9" fill="#1c2236"/><rect x="139.6" y="75.6" width="1.6" height="2.1" fill="#2a2f45"/><rect x="142.1" y="75.8" width="3.1" height="1.4" fill="#8a7f92"/><rect x="146.1" y="75.4" width="3.1" height="1.9" fill="#1a1f33"/><rect x="149.3" y="75.6" width="2.9" height="1.1" fill="#141826"/><rect x="152.6" y="75.8" width="2.9" height="1.9" fill="#a9b3c8"/><rect x="156.2" y="75.8" width="2.4" height="2.0" fill="#2a2f45"/><rect x="158.8" y="75.4" width="3.4" height="2.0" fill="#141826"/><rect x="162.6" y="75.4" width="4.3" height="1.2" fill="#35527d"/><rect x="167.9" y="75.5" width="2.0" height="1.2" fill="#7a6a7a"/><rect x="170.2" y="75.7" width="1.7" height="1.4" fill="#b7bfd0"/><rect x="172.1" y="75.4" width="1.9" height="1.7" fill="#232a42"/><rect x="174.3" y="75.5" width="3.7" height="1.3" fill="#3e669e"/><rect x="178.9" y="75.5" width="4.0" height="1.3" fill="#c9cfdc"/><rect x="183.3" y="75.8" width="2.8" height="1.7" fill="#e9b24a"/><rect x="186.7" y="75.6" width="3.6" height="1.2" fill="#7a6a7a"/><rect x="191.5" y="75.6" width="4.1" height="2.1" fill="#7a6a7a"/><rect x="196.7" y="75.3" width="4.3" height="1.7" fill="#b9583a"/><rect x="201.9" y="75.6" width="4.4" height="1.7" fill="#35527d"/><rect x="206.4" y="75.5" width="4.3" height="1.1" fill="#8a7f92"/><rect x="211.9" y="75.4" width="4.1" height="1.9" fill="#a9b3c8"/><rect x="216.4" y="75.4" width="3.8" height="2.1" fill="#1a1f33"/><rect x="221.3" y="75.7" width="3.5" height="1.5" fill="#3e669e"/><rect x="225.2" y="75.5" width="3.1" height="2.0" fill="#7a6a7a"/><rect x="228.8" y="75.7" width="3.1" height="1.6" fill="#1c2236"/><rect x="232.7" y="75.5" width="2.5" height="1.6" fill="#35527d"/><rect x="235.4" y="75.8" width="4.2" height="1.8" fill="#e9b24a"/><rect x="240.2" y="75.7" width="4.2" height="1.3" fill="#232a42"/><rect x="244.9" y="75.6" width="3.1" height="1.1" fill="#141826"/><rect x="249.0" y="75.4" width="4.2" height="2.1" fill="#c0442a"/><rect x="-4.2" y="76.9" width="3.2" height="1.3" fill="#35527d"/><rect x="-0.5" y="76.8" width="3.7" height="1.8" fill="#dfe2ea"/><rect x="3.5" y="77.0" width="3.8" height="1.3" fill="#8a7f92"/><rect x="8.5" y="77.0" width="4.5" height="1.6" fill="#a9b3c8"/><rect x="14.1" y="77.0" width="1.8" height="2.2" fill="#3e669e"/><rect x="16.5" y="76.7" width="2.5" height="2.1" fill="#232a42"/><rect x="19.8" y="77.0" width="4.4" height="1.3" fill="#1c2236"/><rect x="25.0" y="76.9" width="3.7" height="2.1" fill="#1a1f33"/><rect x="29.8" y="76.8" width="3.5" height="1.5" fill="#2a2f45"/><rect x="34.2" y="77.0" width="4.6" height="1.5" fill="#1c2236"/><rect x="39.0" y="76.8" width="4.1" height="1.9" fill="#4f78b0"/><rect x="43.8" y="77.2" width="2.2" height="1.1" fill="#141826"/><rect x="46.9" y="76.7" width="2.7" height="1.6" fill="#35527d"/><rect x="50.5" y="76.8" width="2.9" height="1.8" fill="#d4d0d2"/><rect x="54.0" y="77.0" width="1.9" height="1.5" fill="#8f4a3e"/><rect x="56.9" y="77.0" width="4.0" height="1.6" fill="#e9b24a"/><rect x="60.9" y="76.8" width="4.1" height="1.3" fill="#dfe2ea"/><rect x="65.7" y="76.9" width="3.4" height="1.5" fill="#2a2f45"/><rect x="70.2" y="76.8" width="4.4" height="2.1" fill="#141826"/><rect x="75.6" y="76.7" width="3.7" height="2.2" fill="#1a1f33"/><rect x="79.4" y="77.2" width="3.2" height="2.0" fill="#dfe2ea"/><rect x="83.0" y="77.1" width="2.3" height="1.3" fill="#232a42"/><rect x="85.5" y="77.0" width="2.8" height="2.2" fill="#44628f"/><rect x="88.8" y="77.0" width="4.4" height="1.2" fill="#b7bfd0"/><rect x="94.4" y="76.8" width="3.8" height="1.6" fill="#7a6a7a"/><rect x="98.5" y="77.0" width="2.3" height="1.1" fill="#232a42"/><rect x="101.5" y="76.7" width="3.9" height="1.4" fill="#6c93c6"/><rect x="106.1" y="77.1" width="2.5" height="1.9" fill="#7a6a7a"/><rect x="108.9" y="77.2" width="3.1" height="1.1" fill="#3e669e"/><rect x="112.9" y="76.9" width="2.5" height="1.1" fill="#232a42"/><rect x="116.5" y="77.2" width="2.8" height="1.9" fill="#8a7f92"/><rect x="120.1" y="76.8" width="2.5" height="1.4" fill="#c9cfdc"/><rect x="122.8" y="77.1" width="1.8" height="1.7" fill="#7a6a7a"/><rect x="125.2" y="77.2" width="2.1" height="2.0" fill="#5b86bd"/><rect x="127.6" y="76.9" width="3.8" height="1.5" fill="#d4d0d2"/><rect x="132.3" y="76.9" width="2.4" height="2.0" fill="#35527d"/><rect x="135.4" y="77.0" width="2.7" height="1.9" fill="#2a2f45"/><rect x="138.6" y="76.8" width="3.4" height="1.6" fill="#1a1f33"/><rect x="143.1" y="77.2" width="2.1" height="1.2" fill="#1a1f33"/><rect x="145.9" y="76.9" width="3.1" height="1.3" fill="#b7bfd0"/><rect x="149.5" y="77.0" width="1.8" height="1.4" fill="#141826"/><rect x="151.7" y="77.1" width="2.8" height="1.3" fill="#44628f"/><rect x="154.9" y="76.8" width="3.3" height="1.3" fill="#f0c560"/><rect x="158.8" y="76.8" width="4.2" height="1.4" fill="#1c2236"/><rect x="163.1" y="77.0" width="3.5" height="1.2" fill="#6c93c6"/><rect x="167.1" y="77.0" width="3.3" height="1.6" fill="#c0442a"/><rect x="170.6" y="76.7" width="3.3" height="1.5" fill="#7a6a7a"/><rect x="174.6" y="76.8" width="3.2" height="2.2" fill="#2a2f45"/><rect x="177.8" y="76.9" width="2.4" height="1.3" fill="#35527d"/><rect x="180.7" y="76.9" width="3.6" height="2.1" fill="#35527d"/><rect x="185.3" y="77.1" width="2.3" height="2.2" fill="#b7bfd0"/><rect x="188.5" y="76.9" width="3.1" height="1.3" fill="#6c93c6"/><rect x="191.8" y="77.2" width="3.0" height="1.7" fill="#3e669e"/><rect x="195.4" y="77.0" width="4.6" height="1.4" fill="#2a2f45"/><rect x="200.3" y="77.1" width="1.8" height="1.9" fill="#141826"/><rect x="202.9" y="76.9" width="1.7" height="1.5" fill="#c9cfdc"/><rect x="205.5" y="76.8" width="4.2" height="1.1" fill="#c9cfdc"/><rect x="210.5" y="76.8" width="3.0" height="1.2" fill="#8a7f92"/><rect x="214.0" y="76.7" width="3.4" height="1.5" fill="#a9b3c8"/><rect x="218.0" y="77.1" width="3.0" height="2.0" fill="#5b86bd"/><rect x="222.2" y="76.8" width="3.4" height="1.2" fill="#dfe2ea"/><rect x="226.5" y="76.8" width="4.4" height="1.2" fill="#d4d0d2"/><rect x="231.3" y="77.0" width="2.9" height="2.0" fill="#dfe2ea"/><rect x="234.7" y="76.8" width="4.5" height="2.2" fill="#232a42"/><rect x="240.3" y="77.1" width="3.6" height="1.4" fill="#4f78b0"/><rect x="244.5" y="76.7" width="2.8" height="1.8" fill="#c9cfdc"/><rect x="247.6" y="76.9" width="2.5" height="2.1" fill="#4f78b0"/><rect x="251.1" y="77.2" width="2.1" height="1.1" fill="#6c93c6"/><rect x="-0.9" y="78.3" width="2.7" height="1.2" fill="#2a2f45"/><rect x="2.1" y="78.4" width="4.1" height="2.1" fill="#1c2236"/><rect x="6.5" y="78.3" width="3.5" height="2.3" fill="#1a1f33"/><rect x="10.6" y="78.5" width="2.7" height="2.2" fill="#3e669e"/><rect x="13.5" y="78.3" width="2.5" height="1.3" fill="#3e669e"/><rect x="17.0" y="78.3" width="2.3" height="1.6" fill="#e9b24a"/><rect x="20.1" y="78.3" width="2.6" height="1.6" fill="#5b86bd"/><rect x="23.2" y="78.6" width="2.2" height="1.2" fill="#b7bfd0"/><rect x="26.0" y="78.6" width="4.0" height="2.3" fill="#1c2236"/><rect x="30.4" y="78.1" width="2.1" height="1.2" fill="#1a1f33"/><rect x="33.7" y="78.4" width="2.8" height="2.1" fill="#2a2f45"/><rect x="37.0" y="78.3" width="3.4" height="2.2" fill="#4f78b0"/><rect x="41.5" y="78.6" width="4.3" height="1.9" fill="#1c2236"/><rect x="46.3" y="78.6" width="4.7" height="1.1" fill="#8a7f92"/><rect x="51.3" y="78.2" width="3.4" height="1.7" fill="#5b86bd"/><rect x="54.9" y="78.3" width="4.6" height="1.3" fill="#a64a34"/><rect x="60.5" y="78.1" width="2.3" height="1.7" fill="#44628f"/><rect x="63.5" y="78.3" width="4.5" height="1.7" fill="#4f78b0"/><rect x="68.4" y="78.4" width="2.5" height="1.9" fill="#44628f"/><rect x="71.0" y="78.6" width="1.9" height="1.8" fill="#1a1f33"/><rect x="72.9" y="78.4" width="4.3" height="1.5" fill="#141826"/><rect x="78.0" y="78.5" width="4.7" height="1.4" fill="#d4d0d2"/><rect x="83.6" y="78.2" width="1.7" height="1.7" fill="#2a2f45"/><rect x="86.0" y="78.4" width="2.1" height="2.3" fill="#1a1f33"/><rect x="88.9" y="78.2" width="3.0" height="1.1" fill="#232a42"/><rect x="93.1" y="78.6" width="1.8" height="1.9" fill="#a9b3c8"/><rect x="96.1" y="78.6" width="3.0" height="1.9" fill="#6c93c6"/><rect x="99.3" y="78.4" width="4.8" height="1.8" fill="#232a42"/><rect x="104.1" y="78.1" width="2.5" height="2.0" fill="#5b86bd"/><rect x="106.8" y="78.2" width="2.5" height="2.3" fill="#4f78b0"/><rect x="109.8" y="78.2" width="3.1" height="1.3" fill="#b7bfd0"/><rect x="113.4" y="78.2" width="4.9" height="2.4" fill="#232a42"/><rect x="119.5" y="78.1" width="4.8" height="1.9" fill="#4f78b0"/><rect x="124.9" y="78.5" width="2.6" height="1.4" fill="#1a1f33"/><rect x="128.6" y="78.4" width="4.1" height="1.9" fill="#c9704a"/><rect x="133.0" y="78.6" width="4.7" height="1.5" fill="#2a2f45"/><rect x="138.4" y="78.4" width="3.2" height="2.3" fill="#1c2236"/><rect x="142.7" y="78.4" width="4.6" height="1.4" fill="#dfe2ea"/><rect x="148.0" y="78.5" width="3.5" height="2.2" fill="#4f78b0"/><rect x="151.8" y="78.3" width="2.8" height="1.5" fill="#141826"/><rect x="155.3" y="78.5" width="3.5" height="2.3" fill="#1c2236"/><rect x="159.0" y="78.4" width="2.7" height="2.1" fill="#44628f"/><rect x="161.9" y="78.2" width="2.3" height="2.2" fill="#35527d"/><rect x="165.4" y="78.3" width="3.2" height="2.1" fill="#44628f"/><rect x="169.2" y="78.7" width="4.3" height="1.2" fill="#141826"/><rect x="173.9" y="78.6" width="2.4" height="1.4" fill="#7a6a7a"/><rect x="177.4" y="78.2" width="1.9" height="2.4" fill="#1c2236"/><rect x="179.6" y="78.4" width="2.6" height="1.2" fill="#dfe2ea"/><rect x="183.4" y="78.6" width="4.8" height="1.6" fill="#3e669e"/><rect x="188.3" y="78.2" width="2.2" height="2.3" fill="#a9b3c8"/><rect x="191.7" y="78.2" width="2.7" height="2.3" fill="#a9b3c8"/><rect x="194.9" y="78.5" width="4.4" height="1.9" fill="#2a2f45"/><rect x="200.1" y="78.6" width="2.8" height="2.1" fill="#a9b3c8"/><rect x="203.0" y="78.4" width="1.9" height="1.2" fill="#4f78b0"/><rect x="205.4" y="78.4" width="4.8" height="1.3" fill="#1c2236"/><rect x="211.2" y="78.4" width="3.2" height="1.7" fill="#141826"/><rect x="215.5" y="78.5" width="3.8" height="2.3" fill="#1c2236"/><rect x="219.7" y="78.2" width="4.9" height="1.4" fill="#7a6a7a"/><rect x="225.3" y="78.5" width="2.2" height="2.2" fill="#1c2236"/><rect x="228.4" y="78.6" width="3.0" height="1.3" fill="#1a1f33"/><rect x="231.8" y="78.2" width="4.2" height="1.2" fill="#8a7f92"/><rect x="236.3" y="78.6" width="3.6" height="1.3" fill="#44628f"/><rect x="240.8" y="78.6" width="2.9" height="1.9" fill="#35527d"/><rect x="244.2" y="78.3" width="4.5" height="1.1" fill="#dfe2ea"/><rect x="248.8" y="78.2" width="4.1" height="2.4" fill="#1a1f33"/><rect x="-4.7" y="79.9" width="3.3" height="2.2" fill="#232a42"/><rect x="-1.0" y="80.2" width="2.3" height="1.6" fill="#5b86bd"/><rect x="1.8" y="79.9" width="3.4" height="1.7" fill="#d4d0d2"/><rect x="5.3" y="79.7" width="3.6" height="1.2" fill="#a64a34"/><rect x="9.9" y="80.1" width="4.8" height="2.0" fill="#b7bfd0"/><rect x="15.0" y="80.0" width="3.3" height="1.9" fill="#c9cfdc"/><rect x="18.3" y="80.0" width="5.0" height="1.4" fill="#8f4a3e"/><rect x="23.9" y="80.1" width="3.1" height="1.2" fill="#f0c560"/><rect x="27.3" y="79.9" width="3.9" height="1.5" fill="#a9b3c8"/><rect x="31.4" y="79.7" width="4.3" height="1.9" fill="#b7bfd0"/><rect x="36.7" y="80.0" width="3.8" height="1.4" fill="#8a7f92"/><rect x="40.9" y="79.7" width="2.1" height="1.9" fill="#e9b24a"/><rect x="44.0" y="80.2" width="4.2" height="2.4" fill="#2a2f45"/><rect x="48.6" y="80.0" width="4.9" height="1.4" fill="#3e669e"/><rect x="54.5" y="80.0" width="3.8" height="1.5" fill="#7a6a7a"/><rect x="59.2" y="79.9" width="3.9" height="2.2" fill="#141826"/><rect x="63.1" y="79.9" width="2.4" height="2.2" fill="#2a2f45"/><rect x="66.0" y="79.9" width="3.0" height="2.0" fill="#141826"/><rect x="69.2" y="80.0" width="5.2" height="1.7" fill="#d4d0d2"/><rect x="75.2" y="79.7" width="4.5" height="1.6" fill="#d4d0d2"/><rect x="79.7" y="79.8" width="2.6" height="1.8" fill="#141826"/><rect x="82.6" y="79.8" width="4.3" height="2.4" fill="#7a6a7a"/><rect x="87.0" y="80.0" width="5.1" height="1.8" fill="#44628f"/><rect x="92.3" y="79.7" width="4.6" height="1.6" fill="#5b86bd"/><rect x="98.1" y="80.2" width="2.9" height="2.5" fill="#c9cfdc"/><rect x="101.4" y="80.0" width="3.5" height="1.5" fill="#5b86bd"/><rect x="105.8" y="79.7" width="2.2" height="2.5" fill="#1c2236"/><rect x="108.2" y="80.1" width="2.0" height="2.0" fill="#dfe2ea"/><rect x="110.3" y="79.9" width="4.4" height="2.4" fill="#44628f"/><rect x="115.0" y="79.7" width="4.4" height="1.8" fill="#1a1f33"/><rect x="119.7" y="80.0" width="3.2" height="1.4" fill="#e9b24a"/><rect x="123.5" y="79.7" width="3.6" height="1.7" fill="#d4d0d2"/><rect x="127.6" y="79.7" width="2.2" height="1.5" fill="#1c2236"/><rect x="130.7" y="80.2" width="3.3" height="2.0" fill="#2a2f45"/><rect x="134.8" y="79.7" width="2.9" height="1.9" fill="#2a2f45"/><rect x="138.5" y="79.9" width="2.7" height="1.3" fill="#141826"/><rect x="141.7" y="80.0" width="4.6" height="2.1" fill="#35527d"/><rect x="146.5" y="80.0" width="4.1" height="2.3" fill="#1c2236"/><rect x="151.8" y="80.0" width="4.3" height="1.8" fill="#1c2236"/><rect x="156.2" y="80.0" width="3.1" height="1.6" fill="#d4d0d2"/><rect x="160.3" y="79.8" width="2.2" height="1.2" fill="#1a1f33"/><rect x="162.8" y="79.6" width="3.7" height="2.5" fill="#1c2236"/><rect x="167.4" y="79.6" width="3.8" height="1.5" fill="#141826"/><rect x="172.4" y="79.8" width="2.9" height="1.5" fill="#232a42"/><rect x="175.6" y="80.1" width="4.3" height="2.1" fill="#3e669e"/><rect x="180.6" y="80.2" width="2.8" height="1.7" fill="#a9b3c8"/><rect x="184.3" y="79.9" width="4.8" height="2.0" fill="#2a2f45"/><rect x="189.8" y="80.2" width="3.1" height="2.1" fill="#3e669e"/><rect x="194.1" y="80.1" width="4.5" height="2.2" fill="#5b86bd"/><rect x="199.7" y="80.2" width="2.2" height="2.5" fill="#e9b24a"/><rect x="202.5" y="79.7" width="2.0" height="2.2" fill="#232a42"/><rect x="204.9" y="79.8" width="2.7" height="2.5" fill="#44628f"/><rect x="208.2" y="79.9" width="3.9" height="1.7" fill="#8a7f92"/><rect x="212.7" y="79.7" width="2.7" height="2.1" fill="#b9583a"/><rect x="215.5" y="79.8" width="4.2" height="1.9" fill="#35527d"/><rect x="219.8" y="79.8" width="4.7" height="1.2" fill="#dfe2ea"/><rect x="225.0" y="79.7" width="2.2" height="2.5" fill="#8a7f92"/><rect x="227.4" y="80.1" width="3.4" height="2.3" fill="#2a2f45"/><rect x="231.9" y="79.7" width="2.6" height="1.2" fill="#232a42"/><rect x="234.5" y="80.1" width="3.8" height="1.7" fill="#1c2236"/><rect x="238.8" y="80.1" width="4.6" height="1.3" fill="#dfe2ea"/><rect x="244.1" y="79.9" width="2.7" height="1.7" fill="#44628f"/><rect x="247.7" y="79.7" width="1.9" height="1.9" fill="#44628f"/><rect x="250.2" y="79.9" width="2.5" height="2.3" fill="#6c93c6"/><rect x="-3.3" y="81.4" width="3.9" height="1.3" fill="#2a2f45"/><rect x="0.7" y="81.5" width="2.4" height="1.6" fill="#5b86bd"/><rect x="4.1" y="81.6" width="3.9" height="1.5" fill="#35527d"/><rect x="9.1" y="81.5" width="5.2" height="1.9" fill="#a9b3c8"/><rect x="15.0" y="81.5" width="3.2" height="1.3" fill="#3e669e"/><rect x="18.9" y="81.4" width="2.0" height="1.5" fill="#2a2f45"/><rect x="21.2" y="81.6" width="2.9" height="1.4" fill="#a9b3c8"/><rect x="24.3" y="81.8" width="4.8" height="1.7" fill="#dfe2ea"/><rect x="29.6" y="81.6" width="4.1" height="2.3" fill="#a64a34"/><rect x="34.3" y="81.3" width="3.0" height="1.4" fill="#7a6a7a"/><rect x="37.6" y="81.4" width="2.2" height="2.2" fill="#8f4a3e"/><rect x="40.9" y="81.2" width="3.8" height="2.2" fill="#4f78b0"/><rect x="45.0" y="81.7" width="5.3" height="2.2" fill="#8a7f92"/><rect x="51.2" y="81.5" width="5.3" height="2.6" fill="#44628f"/><rect x="57.2" y="81.2" width="3.3" height="2.4" fill="#d4d0d2"/><rect x="60.6" y="81.4" width="3.6" height="2.6" fill="#4f78b0"/><rect x="64.6" y="81.7" width="3.8" height="1.2" fill="#2a2f45"/><rect x="68.9" y="81.6" width="2.7" height="1.6" fill="#e9b24a"/><rect x="72.4" y="81.7" width="4.1" height="2.0" fill="#3e669e"/><rect x="76.7" y="81.5" width="3.2" height="2.5" fill="#2a2f45"/><rect x="80.9" y="81.2" width="5.1" height="2.1" fill="#7a6a7a"/><rect x="86.3" y="81.7" width="3.8" height="1.5" fill="#d4d0d2"/><rect x="90.4" y="81.7" width="4.0" height="2.0" fill="#8a7f92"/><rect x="94.8" y="81.2" width="2.9" height="2.3" fill="#44628f"/><rect x="98.9" y="81.4" width="4.2" height="2.2" fill="#4f78b0"/><rect x="103.2" y="81.2" width="4.8" height="2.0" fill="#44628f"/><rect x="109.1" y="81.7" width="4.3" height="2.2" fill="#5b86bd"/><rect x="113.4" y="81.3" width="4.7" height="1.9" fill="#141826"/><rect x="118.2" y="81.2" width="4.6" height="2.1" fill="#7a6a7a"/><rect x="123.3" y="81.3" width="3.5" height="2.2" fill="#141826"/><rect x="127.7" y="81.7" width="3.9" height="2.3" fill="#141826"/><rect x="131.9" y="81.5" width="5.0" height="1.4" fill="#1a1f33"/><rect x="137.6" y="81.6" width="4.8" height="1.4" fill="#b7bfd0"/><rect x="143.4" y="81.3" width="4.3" height="1.4" fill="#7a6a7a"/><rect x="147.9" y="81.6" width="5.3" height="2.3" fill="#141826"/><rect x="153.5" y="81.3" width="5.4" height="1.7" fill="#c9cfdc"/><rect x="160.0" y="81.4" width="4.4" height="2.6" fill="#c9cfdc"/><rect x="164.4" y="81.7" width="4.5" height="1.5" fill="#a9b3c8"/><rect x="169.9" y="81.3" width="2.3" height="1.4" fill="#6c93c6"/><rect x="173.1" y="81.7" width="3.7" height="2.4" fill="#35527d"/><rect x="177.3" y="81.4" width="3.5" height="2.1" fill="#7a6a7a"/><rect x="181.4" y="81.5" width="5.2" height="2.1" fill="#8f4a3e"/><rect x="187.1" y="81.5" width="3.4" height="2.5" fill="#141826"/><rect x="191.1" y="81.7" width="4.1" height="1.5" fill="#dfe2ea"/><rect x="196.1" y="81.3" width="2.2" height="1.8" fill="#3e669e"/><rect x="199.3" y="81.4" width="4.3" height="2.3" fill="#5b86bd"/><rect x="204.8" y="81.5" width="3.7" height="2.4" fill="#1a1f33"/><rect x="209.0" y="81.7" width="5.1" height="2.3" fill="#c9cfdc"/><rect x="214.9" y="81.2" width="5.0" height="2.0" fill="#5b86bd"/><rect x="220.7" y="81.5" width="4.4" height="1.9" fill="#d4d0d2"/><rect x="225.8" y="81.3" width="4.4" height="2.1" fill="#c9cfdc"/><rect x="230.2" y="81.5" width="4.6" height="1.7" fill="#c9cfdc"/><rect x="234.9" y="81.7" width="4.5" height="1.9" fill="#a9b3c8"/><rect x="239.9" y="81.3" width="1.9" height="1.6" fill="#141826"/><rect x="241.9" y="81.6" width="4.4" height="1.4" fill="#3e669e"/><rect x="247.1" y="81.5" width="3.0" height="2.3" fill="#4f78b0"/><rect x="250.5" y="81.5" width="4.4" height="2.2" fill="#6c93c6"/><rect x="-1.0" y="83.0" width="4.1" height="2.6" fill="#2a2f45"/><rect x="3.4" y="82.9" width="3.8" height="1.3" fill="#232a42"/><rect x="8.3" y="82.9" width="4.5" height="1.8" fill="#232a42"/><rect x="13.5" y="83.3" width="3.7" height="1.4" fill="#c9cfdc"/><rect x="17.7" y="83.2" width="4.0" height="2.6" fill="#1a1f33"/><rect x="22.9" y="83.4" width="5.7" height="2.5" fill="#6c93c6"/><rect x="28.7" y="83.0" width="5.1" height="2.1" fill="#6c93c6"/><rect x="34.9" y="83.1" width="3.5" height="1.8" fill="#8a7f92"/><rect x="39.5" y="82.9" width="5.2" height="2.4" fill="#8a7f92"/><rect x="45.3" y="83.2" width="2.1" height="1.6" fill="#6c93c6"/><rect x="47.7" y="83.2" width="4.8" height="2.0" fill="#1a1f33"/><rect x="53.3" y="83.2" width="3.0" height="2.0" fill="#2a2f45"/><rect x="56.7" y="83.3" width="2.2" height="1.8" fill="#d4d0d2"/><rect x="59.1" y="83.2" width="2.3" height="2.1" fill="#a9b3c8"/><rect x="61.7" y="83.3" width="4.1" height="2.3" fill="#b7bfd0"/><rect x="65.8" y="83.0" width="3.3" height="1.5" fill="#8f4a3e"/><rect x="69.6" y="83.2" width="2.8" height="1.4" fill="#c9704a"/><rect x="73.5" y="82.9" width="2.1" height="2.0" fill="#4f78b0"/><rect x="76.3" y="82.8" width="3.8" height="2.4" fill="#2a2f45"/><rect x="80.9" y="83.0" width="5.3" height="1.6" fill="#44628f"/><rect x="87.0" y="82.9" width="5.6" height="2.7" fill="#44628f"/><rect x="92.8" y="83.1" width="5.2" height="1.6" fill="#dfe2ea"/><rect x="98.3" y="83.0" width="2.9" height="1.6" fill="#3e669e"/><rect x="102.2" y="83.4" width="3.7" height="1.8" fill="#a9b3c8"/><rect x="106.4" y="83.3" width="3.5" height="2.7" fill="#35527d"/><rect x="110.5" y="83.0" width="2.4" height="1.5" fill="#6c93c6"/><rect x="113.0" y="83.3" width="4.3" height="1.8" fill="#dfe2ea"/><rect x="117.8" y="82.8" width="4.9" height="2.2" fill="#1c2236"/><rect x="123.4" y="83.0" width="4.8" height="2.0" fill="#141826"/><rect x="129.1" y="83.0" width="3.2" height="2.2" fill="#2a2f45"/><rect x="132.3" y="82.8" width="2.2" height="2.6" fill="#2a2f45"/><rect x="135.2" y="83.1" width="3.8" height="2.7" fill="#44628f"/><rect x="139.6" y="82.9" width="4.8" height="1.9" fill="#3e669e"/><rect x="144.9" y="83.4" width="2.6" height="1.4" fill="#232a42"/><rect x="147.7" y="82.9" width="2.7" height="2.3" fill="#2a2f45"/><rect x="151.3" y="83.2" width="3.9" height="2.6" fill="#4f78b0"/><rect x="156.1" y="83.0" width="5.0" height="2.2" fill="#f0c560"/><rect x="161.2" y="83.1" width="4.2" height="1.8" fill="#35527d"/><rect x="165.9" y="83.0" width="3.8" height="1.6" fill="#c9cfdc"/><rect x="170.7" y="83.4" width="4.2" height="1.7" fill="#7a6a7a"/><rect x="174.9" y="82.9" width="4.6" height="1.8" fill="#141826"/><rect x="180.1" y="83.0" width="5.3" height="2.5" fill="#f0c560"/><rect x="186.0" y="83.3" width="4.1" height="1.7" fill="#c9704a"/><rect x="191.2" y="83.3" width="2.3" height="1.4" fill="#a9b3c8"/><rect x="194.3" y="83.3" width="3.9" height="2.6" fill="#f0c560"/><rect x="198.8" y="83.1" width="4.6" height="2.6" fill="#7a6a7a"/><rect x="203.6" y="82.8" width="2.3" height="2.2" fill="#232a42"/><rect x="206.8" y="82.9" width="4.3" height="2.7" fill="#35527d"/><rect x="211.1" y="82.9" width="4.8" height="1.9" fill="#4f78b0"/><rect x="216.1" y="83.2" width="5.5" height="1.7" fill="#2a2f45"/><rect x="222.2" y="82.9" width="5.0" height="2.6" fill="#1c2236"/><rect x="227.5" y="83.2" width="3.0" height="1.9" fill="#d4d0d2"/><rect x="230.9" y="82.9" width="4.8" height="1.5" fill="#5b86bd"/><rect x="236.3" y="82.8" width="3.6" height="1.5" fill="#7a6a7a"/><rect x="240.0" y="83.2" width="3.3" height="1.6" fill="#c0442a"/><rect x="243.9" y="82.9" width="4.5" height="2.0" fill="#5b86bd"/><rect x="248.9" y="83.3" width="2.6" height="1.8" fill="#4f78b0"/><rect x="251.7" y="82.8" width="3.0" height="2.5" fill="#6c93c6"/><rect x="-4.1" y="85.2" width="5.1" height="2.0" fill="#2a2f45"/><rect x="2.2" y="84.5" width="4.0" height="2.3" fill="#1a1f33"/><rect x="6.6" y="85.1" width="5.9" height="2.3" fill="#4f78b0"/><rect x="13.5" y="84.6" width="2.3" height="1.9" fill="#44628f"/><rect x="16.2" y="85.2" width="4.1" height="1.9" fill="#1a1f33"/><rect x="20.3" y="84.7" width="2.7" height="2.1" fill="#d99a3a"/><rect x="24.1" y="84.6" width="3.0" height="1.8" fill="#dfe2ea"/><rect x="27.3" y="85.1" width="2.4" height="2.2" fill="#232a42"/><rect x="30.9" y="84.6" width="5.1" height="1.7" fill="#c9704a"/><rect x="36.3" y="84.7" width="2.2" height="1.6" fill="#4f78b0"/><rect x="38.9" y="84.8" width="4.0" height="2.2" fill="#c9704a"/><rect x="43.3" y="84.7" width="4.8" height="2.7" fill="#a64a34"/><rect x="49.1" y="84.8" width="5.7" height="2.3" fill="#232a42"/><rect x="55.0" y="85.0" width="2.9" height="2.1" fill="#1a1f33"/><rect x="58.1" y="85.0" width="5.3" height="2.3" fill="#5b86bd"/><rect x="63.7" y="84.8" width="4.5" height="2.5" fill="#44628f"/><rect x="68.3" y="85.0" width="5.6" height="2.3" fill="#6c93c6"/><rect x="74.7" y="84.9" width="2.9" height="2.4" fill="#35527d"/><rect x="77.8" y="84.8" width="3.0" height="1.6" fill="#1a1f33"/><rect x="81.2" y="85.0" width="4.1" height="1.9" fill="#2a2f45"/><rect x="86.0" y="84.6" width="3.1" height="2.5" fill="#c9cfdc"/><rect x="89.6" y="84.6" width="2.6" height="1.7" fill="#3e669e"/><rect x="93.0" y="84.8" width="4.6" height="2.0" fill="#6c93c6"/><rect x="97.8" y="85.1" width="4.6" height="2.0" fill="#141826"/><rect x="103.4" y="85.0" width="5.7" height="1.4" fill="#8f4a3e"/><rect x="110.1" y="84.5" width="6.0" height="1.7" fill="#2a2f45"/><rect x="116.3" y="84.7" width="4.2" height="2.4" fill="#8f4a3e"/><rect x="120.8" y="84.5" width="2.2" height="2.5" fill="#232a42"/><rect x="123.6" y="85.0" width="5.2" height="2.4" fill="#dfe2ea"/><rect x="129.6" y="85.0" width="4.9" height="1.6" fill="#5b86bd"/><rect x="134.5" y="84.8" width="5.6" height="2.6" fill="#1c2236"/><rect x="141.0" y="84.6" width="5.6" height="2.3" fill="#c0442a"/><rect x="146.6" y="84.6" width="2.9" height="2.4" fill="#2a2f45"/><rect x="149.7" y="84.6" width="5.7" height="1.5" fill="#c9cfdc"/><rect x="155.8" y="84.7" width="2.4" height="1.8" fill="#141826"/><rect x="158.6" y="84.7" width="3.6" height="2.6" fill="#e9b24a"/><rect x="163.1" y="85.1" width="3.6" height="2.0" fill="#3e669e"/><rect x="167.7" y="84.8" width="2.6" height="2.8" fill="#c9cfdc"/><rect x="170.6" y="84.6" width="3.7" height="1.9" fill="#d4d0d2"/><rect x="175.1" y="85.0" width="3.8" height="1.8" fill="#d4d0d2"/><rect x="179.0" y="85.0" width="4.0" height="1.5" fill="#44628f"/><rect x="183.4" y="84.7" width="2.6" height="2.8" fill="#c9cfdc"/><rect x="186.9" y="84.9" width="5.8" height="1.4" fill="#35527d"/><rect x="192.9" y="84.7" width="4.2" height="2.6" fill="#8a7f92"/><rect x="198.0" y="84.7" width="3.5" height="2.4" fill="#d99a3a"/><rect x="201.6" y="84.8" width="2.6" height="2.5" fill="#6c93c6"/><rect x="204.3" y="84.9" width="2.6" height="1.7" fill="#8a7f92"/><rect x="207.6" y="85.0" width="3.1" height="1.8" fill="#4f78b0"/><rect x="211.1" y="85.0" width="5.6" height="2.1" fill="#5b86bd"/><rect x="217.6" y="84.8" width="4.9" height="2.0" fill="#f0c560"/><rect x="223.5" y="84.7" width="3.8" height="1.8" fill="#35527d"/><rect x="227.6" y="85.0" width="3.0" height="1.9" fill="#1c2236"/><rect x="231.7" y="85.0" width="4.2" height="1.6" fill="#2a2f45"/><rect x="236.7" y="84.6" width="4.8" height="1.9" fill="#44628f"/><rect x="242.0" y="85.0" width="4.2" height="2.4" fill="#6c93c6"/><rect x="246.7" y="84.5" width="2.6" height="2.7" fill="#dfe2ea"/><rect x="249.9" y="85.0" width="5.6" height="2.3" fill="#1a1f33"/><rect x="-4.1" y="86.6" width="5.4" height="2.6" fill="#1a1f33"/><rect x="2.2" y="86.8" width="5.5" height="2.1" fill="#f0c560"/><rect x="8.1" y="86.6" width="2.7" height="1.4" fill="#3e669e"/><rect x="11.9" y="86.5" width="2.4" height="1.8" fill="#232a42"/><rect x="15.2" y="86.4" width="4.8" height="2.0" fill="#141826"/><rect x="20.7" y="86.4" width="2.6" height="2.1" fill="#7a6a7a"/><rect x="23.9" y="86.9" width="4.9" height="2.3" fill="#44628f"/><rect x="29.0" y="86.9" width="2.5" height="1.5" fill="#b7bfd0"/><rect x="31.6" y="86.4" width="2.4" height="1.8" fill="#8a7f92"/><rect x="34.2" y="86.4" width="5.7" height="2.7" fill="#f0c560"/><rect x="40.5" y="86.5" width="2.6" height="1.4" fill="#1c2236"/><rect x="43.5" y="86.4" width="2.8" height="2.1" fill="#8a7f92"/><rect x="46.6" y="86.7" width="2.9" height="1.7" fill="#8a7f92"/><rect x="49.6" y="86.9" width="5.6" height="2.7" fill="#5b86bd"/><rect x="55.3" y="86.8" width="3.5" height="2.5" fill="#1c2236"/><rect x="59.6" y="86.5" width="3.9" height="1.8" fill="#35527d"/><rect x="64.3" y="86.8" width="3.5" height="2.7" fill="#141826"/><rect x="68.3" y="86.6" width="6.3" height="1.8" fill="#1c2236"/><rect x="75.3" y="86.5" width="3.6" height="2.0" fill="#232a42"/><rect x="79.4" y="86.8" width="3.9" height="2.8" fill="#6c93c6"/><rect x="83.3" y="86.5" width="3.5" height="1.7" fill="#141826"/><rect x="87.3" y="86.8" width="6.2" height="2.9" fill="#1c2236"/><rect x="93.6" y="86.4" width="3.0" height="1.6" fill="#2a2f45"/><rect x="97.5" y="86.7" width="4.9" height="2.7" fill="#232a42"/><rect x="102.5" y="86.8" width="5.8" height="2.6" fill="#232a42"/><rect x="109.4" y="86.7" width="4.9" height="1.7" fill="#6c93c6"/><rect x="115.4" y="86.3" width="3.0" height="2.6" fill="#35527d"/><rect x="119.5" y="86.5" width="3.2" height="2.1" fill="#141826"/><rect x="122.9" y="86.8" width="5.1" height="1.7" fill="#3e669e"/><rect x="129.1" y="86.4" width="3.7" height="2.3" fill="#c9cfdc"/><rect x="133.1" y="86.6" width="3.0" height="2.9" fill="#3e669e"/><rect x="137.3" y="87.0" width="4.8" height="2.0" fill="#6c93c6"/><rect x="142.5" y="86.7" width="3.3" height="1.9" fill="#d4d0d2"/><rect x="145.9" y="86.8" width="5.5" height="1.6" fill="#1c2236"/><rect x="151.6" y="86.9" width="3.2" height="2.1" fill="#b7bfd0"/><rect x="155.3" y="86.7" width="5.7" height="1.9" fill="#1a1f33"/><rect x="162.0" y="86.4" width="5.2" height="2.0" fill="#35527d"/><rect x="167.4" y="86.7" width="4.3" height="2.0" fill="#dfe2ea"/><rect x="172.4" y="86.9" width="2.5" height="1.7" fill="#c9cfdc"/><rect x="175.0" y="86.9" width="6.1" height="2.6" fill="#232a42"/><rect x="181.2" y="86.6" width="4.3" height="2.7" fill="#1c2236"/><rect x="186.1" y="86.6" width="4.7" height="2.1" fill="#5b86bd"/><rect x="191.0" y="86.6" width="3.2" height="2.5" fill="#8a7f92"/><rect x="194.6" y="86.8" width="2.9" height="1.6" fill="#141826"/><rect x="198.1" y="86.6" width="4.8" height="1.7" fill="#1c2236"/><rect x="204.2" y="86.4" width="6.1" height="2.0" fill="#2a2f45"/><rect x="210.8" y="86.6" width="4.2" height="2.6" fill="#35527d"/><rect x="215.6" y="86.7" width="6.2" height="1.8" fill="#6c93c6"/><rect x="222.5" y="86.8" width="5.4" height="1.4" fill="#7a6a7a"/><rect x="228.8" y="86.4" width="4.1" height="2.0" fill="#8a7f92"/><rect x="233.3" y="86.4" width="3.5" height="2.7" fill="#2a2f45"/><rect x="237.4" y="86.9" width="4.4" height="2.0" fill="#6c93c6"/><rect x="242.7" y="86.7" width="3.6" height="2.7" fill="#1c2236"/><rect x="246.5" y="86.5" width="4.3" height="2.2" fill="#3e669e"/><rect x="251.4" y="86.5" width="4.9" height="2.5" fill="#2a2f45"/><rect x="-4.2" y="88.3" width="2.4" height="2.3" fill="#d99a3a"/><rect x="-1.3" y="88.2" width="5.1" height="2.6" fill="#141826"/><rect x="3.8" y="88.8" width="6.3" height="2.8" fill="#1a1f33"/><rect x="11.0" y="88.6" width="3.7" height="2.2" fill="#c9cfdc"/><rect x="15.6" y="88.4" width="5.3" height="2.0" fill="#4f78b0"/><rect x="21.0" y="88.8" width="6.0" height="2.7" fill="#d4d0d2"/><rect x="27.2" y="88.4" width="6.4" height="1.9" fill="#7a6a7a"/><rect x="33.8" y="88.7" width="4.2" height="1.5" fill="#232a42"/><rect x="39.1" y="88.3" width="6.2" height="3.0" fill="#232a42"/><rect x="45.4" y="88.7" width="3.9" height="2.6" fill="#232a42"/><rect x="49.7" y="88.8" width="3.2" height="2.2" fill="#1a1f33"/><rect x="53.1" y="88.6" width="3.2" height="3.0" fill="#1c2236"/><rect x="57.0" y="88.5" width="2.7" height="3.0" fill="#4f78b0"/><rect x="60.1" y="88.5" width="2.5" height="1.7" fill="#dfe2ea"/><rect x="63.5" y="88.3" width="6.1" height="2.6" fill="#1a1f33"/><rect x="69.7" y="88.6" width="3.8" height="2.3" fill="#7a6a7a"/><rect x="74.6" y="88.4" width="4.3" height="2.2" fill="#1a1f33"/><rect x="79.8" y="88.2" width="3.4" height="3.0" fill="#44628f"/><rect x="83.6" y="88.8" width="5.6" height="2.7" fill="#8a7f92"/><rect x="89.9" y="88.5" width="6.0" height="1.9" fill="#1a1f33"/><rect x="96.5" y="88.4" width="3.7" height="2.8" fill="#6c93c6"/><rect x="101.2" y="88.2" width="2.6" height="3.1" fill="#3e669e"/><rect x="104.1" y="88.8" width="3.6" height="2.0" fill="#8f4a3e"/><rect x="108.2" y="88.3" width="5.6" height="1.7" fill="#44628f"/><rect x="114.6" y="88.8" width="6.5" height="1.9" fill="#c9704a"/><rect x="121.2" y="88.7" width="6.6" height="2.5" fill="#2a2f45"/><rect x="128.3" y="88.6" width="2.8" height="2.6" fill="#c9cfdc"/><rect x="132.0" y="88.7" width="5.4" height="1.9" fill="#1a1f33"/><rect x="138.1" y="88.3" width="6.2" height="2.0" fill="#1a1f33"/><rect x="145.3" y="88.7" width="4.3" height="1.5" fill="#5b86bd"/><rect x="150.8" y="88.3" width="3.9" height="2.3" fill="#1a1f33"/><rect x="154.7" y="88.3" width="4.7" height="2.6" fill="#dfe2ea"/><rect x="159.8" y="88.8" width="3.9" height="1.6" fill="#7a6a7a"/><rect x="164.8" y="88.7" width="6.1" height="2.4" fill="#232a42"/><rect x="171.6" y="88.6" width="5.4" height="2.2" fill="#3e669e"/><rect x="177.0" y="88.9" width="5.1" height="2.6" fill="#232a42"/><rect x="182.3" y="88.2" width="4.1" height="2.5" fill="#35527d"/><rect x="186.5" y="88.8" width="5.2" height="1.8" fill="#232a42"/><rect x="192.5" y="88.6" width="2.4" height="2.6" fill="#141826"/><rect x="195.7" y="88.8" width="3.0" height="1.9" fill="#2a2f45"/><rect x="199.4" y="88.2" width="5.3" height="2.6" fill="#b7bfd0"/><rect x="205.6" y="88.2" width="6.2" height="1.5" fill="#3e669e"/><rect x="213.1" y="88.7" width="2.5" height="2.7" fill="#1a1f33"/><rect x="215.7" y="88.4" width="5.0" height="1.6" fill="#2a2f45"/><rect x="221.7" y="88.6" width="5.5" height="2.4" fill="#8a7f92"/><rect x="227.7" y="88.8" width="5.1" height="2.0" fill="#5b86bd"/><rect x="233.1" y="88.7" width="4.2" height="2.1" fill="#6c93c6"/><rect x="237.6" y="88.5" width="5.4" height="2.1" fill="#35527d"/><rect x="243.1" y="88.8" width="4.1" height="2.3" fill="#b7bfd0"/><rect x="247.9" y="88.2" width="4.4" height="2.4" fill="#35527d"/><rect x="-4.9" y="90.3" width="6.4" height="2.8" fill="#c9cfdc"/><rect x="2.3" y="90.7" width="4.9" height="1.6" fill="#a9b3c8"/><rect x="7.3" y="90.7" width="2.9" height="2.8" fill="#1c2236"/><rect x="11.0" y="90.6" width="4.0" height="3.1" fill="#1c2236"/><rect x="16.0" y="90.7" width="2.6" height="2.8" fill="#c0442a"/><rect x="19.5" y="90.1" width="3.9" height="2.9" fill="#5b86bd"/><rect x="24.6" y="90.2" width="6.7" height="2.2" fill="#5b86bd"/><rect x="32.1" y="90.6" width="4.6" height="2.6" fill="#a9b3c8"/><rect x="37.4" y="90.6" width="6.5" height="2.1" fill="#1c2236"/><rect x="44.6" y="90.4" width="2.8" height="1.8" fill="#dfe2ea"/><rect x="47.8" y="90.2" width="3.0" height="1.6" fill="#e9b24a"/><rect x="52.0" y="90.1" width="5.2" height="2.7" fill="#5b86bd"/><rect x="57.8" y="90.6" width="3.7" height="1.7" fill="#b7bfd0"/><rect x="61.7" y="90.5" width="4.1" height="3.0" fill="#141826"/><rect x="66.3" y="90.6" width="6.8" height="2.8" fill="#141826"/><rect x="73.1" y="90.7" width="3.5" height="2.1" fill="#1c2236"/><rect x="77.6" y="90.7" width="4.6" height="2.7" fill="#1c2236"/><rect x="82.7" y="90.4" width="3.8" height="2.1" fill="#dfe2ea"/><rect x="87.1" y="90.8" width="6.4" height="2.2" fill="#232a42"/><rect x="94.6" y="90.5" width="2.6" height="2.2" fill="#2a2f45"/><rect x="97.5" y="90.5" width="5.7" height="2.8" fill="#b7bfd0"/><rect x="103.6" y="90.4" width="4.6" height="1.5" fill="#7a6a7a"/><rect x="109.1" y="90.3" width="5.7" height="2.7" fill="#1a1f33"/><rect x="115.9" y="90.5" width="4.2" height="2.2" fill="#141826"/><rect x="120.9" y="90.5" width="6.7" height="3.1" fill="#1a1f33"/><rect x="128.5" y="90.1" width="2.5" height="2.1" fill="#f0c560"/><rect x="131.8" y="90.7" width="3.3" height="3.0" fill="#6c93c6"/><rect x="135.8" y="90.3" width="6.2" height="2.2" fill="#141826"/><rect x="142.8" y="90.2" width="4.9" height="3.2" fill="#8f4a3e"/><rect x="148.0" y="90.5" width="4.1" height="3.0" fill="#1a1f33"/><rect x="153.0" y="90.5" width="4.0" height="1.6" fill="#2a2f45"/><rect x="158.0" y="90.8" width="2.9" height="2.1" fill="#8f4a3e"/><rect x="161.6" y="90.4" width="6.5" height="2.7" fill="#c9704a"/><rect x="168.2" y="90.6" width="6.4" height="1.8" fill="#35527d"/><rect x="174.6" y="90.4" width="3.1" height="3.0" fill="#232a42"/><rect x="178.3" y="90.7" width="6.4" height="1.7" fill="#232a42"/><rect x="185.2" y="90.5" width="4.8" height="1.8" fill="#7a6a7a"/><rect x="190.5" y="90.2" width="4.2" height="1.7" fill="#a64a34"/><rect x="195.4" y="90.1" width="3.9" height="1.9" fill="#1c2236"/><rect x="199.4" y="90.6" width="3.4" height="2.5" fill="#7a6a7a"/><rect x="203.5" y="90.8" width="4.1" height="2.6" fill="#1c2236"/><rect x="208.0" y="90.6" width="6.8" height="2.4" fill="#d4d0d2"/><rect x="215.1" y="90.3" width="3.2" height="1.7" fill="#c9704a"/><rect x="219.4" y="90.2" width="2.8" height="3.0" fill="#a9b3c8"/><rect x="222.5" y="90.5" width="6.0" height="1.5" fill="#3e669e"/><rect x="229.0" y="90.7" width="3.8" height="2.1" fill="#a64a34"/><rect x="233.9" y="90.1" width="4.3" height="3.1" fill="#2a2f45"/><rect x="238.2" y="90.1" width="2.9" height="3.0" fill="#232a42"/><rect x="241.4" y="90.4" width="6.2" height="2.5" fill="#1a1f33"/><rect x="247.7" y="90.6" width="6.9" height="2.1" fill="#2a2f45"/><rect x="-3.2" y="92.8" width="4.7" height="2.2" fill="#a9b3c8"/><rect x="2.5" y="92.2" width="5.8" height="2.8" fill="#a9b3c8"/><rect x="9.2" y="92.8" width="5.3" height="2.7" fill="#44628f"/><rect x="14.8" y="92.7" width="5.1" height="3.0" fill="#232a42"/><rect x="20.4" y="92.7" width="6.7" height="2.3" fill="#232a42"/><rect x="28.2" y="92.3" width="5.9" height="2.5" fill="#4f78b0"/><rect x="35.3" y="92.2" width="3.4" height="1.8" fill="#c9cfdc"/><rect x="39.8" y="92.7" width="4.6" height="1.6" fill="#f0c560"/><rect x="44.4" y="92.2" width="7.0" height="2.1" fill="#1a1f33"/><rect x="52.4" y="92.5" width="5.2" height="2.1" fill="#44628f"/><rect x="58.1" y="92.4" width="5.4" height="1.9" fill="#3e669e"/><rect x="63.6" y="92.3" width="6.1" height="1.7" fill="#1a1f33"/><rect x="69.9" y="92.5" width="5.3" height="2.8" fill="#141826"/><rect x="75.8" y="92.7" width="3.0" height="2.5" fill="#2a2f45"/><rect x="79.0" y="92.3" width="5.5" height="3.2" fill="#d4d0d2"/><rect x="85.7" y="92.5" width="2.8" height="1.8" fill="#232a42"/><rect x="88.9" y="92.8" width="3.1" height="2.9" fill="#1a1f33"/><rect x="92.4" y="92.5" width="4.1" height="2.9" fill="#1c2236"/><rect x="96.6" y="92.3" width="3.4" height="3.4" fill="#232a42"/><rect x="101.1" y="92.1" width="6.8" height="2.8" fill="#dfe2ea"/><rect x="107.9" y="92.5" width="3.0" height="3.0" fill="#b7bfd0"/><rect x="111.2" y="92.8" width="3.1" height="1.8" fill="#3e669e"/><rect x="115.3" y="92.5" width="3.2" height="2.0" fill="#c9cfdc"/><rect x="119.1" y="92.7" width="4.2" height="1.9" fill="#4f78b0"/><rect x="123.8" y="92.7" width="4.1" height="1.7" fill="#1c2236"/><rect x="128.9" y="92.8" width="4.3" height="2.8" fill="#1a1f33"/><rect x="133.7" y="92.3" width="2.9" height="1.8" fill="#3e669e"/><rect x="137.2" y="92.5" width="6.3" height="3.3" fill="#dfe2ea"/><rect x="144.6" y="92.8" width="5.3" height="2.5" fill="#1c2236"/><rect x="150.2" y="92.5" width="6.6" height="2.6" fill="#b7bfd0"/><rect x="157.8" y="92.6" width="6.0" height="2.4" fill="#dfe2ea"/><rect x="163.9" y="92.3" width="6.8" height="2.7" fill="#c9704a"/><rect x="171.0" y="92.5" width="3.7" height="1.6" fill="#44628f"/><rect x="175.1" y="92.6" width="4.8" height="3.3" fill="#1c2236"/><rect x="180.4" y="92.2" width="2.9" height="1.7" fill="#8a7f92"/><rect x="183.8" y="92.4" width="6.1" height="2.1" fill="#2a2f45"/><rect x="190.5" y="92.5" width="4.9" height="2.0" fill="#44628f"/><rect x="195.5" y="92.7" width="3.4" height="1.7" fill="#232a42"/><rect x="199.9" y="92.5" width="3.0" height="2.0" fill="#dfe2ea"/><rect x="203.7" y="92.2" width="6.2" height="3.3" fill="#dfe2ea"/><rect x="210.3" y="92.1" width="6.7" height="2.2" fill="#1c2236"/><rect x="218.2" y="92.5" width="4.2" height="3.1" fill="#6c93c6"/><rect x="222.5" y="92.4" width="6.3" height="2.9" fill="#7a6a7a"/><rect x="229.1" y="92.4" width="3.3" height="3.1" fill="#35527d"/><rect x="233.0" y="92.4" width="4.9" height="2.4" fill="#6c93c6"/><rect x="238.3" y="92.6" width="5.4" height="2.1" fill="#5b86bd"/><rect x="244.8" y="92.9" width="7.1" height="1.9" fill="#4f78b0"/><rect x="-0.2" y="94.6" width="4.3" height="3.3" fill="#5b86bd"/><rect x="4.2" y="94.3" width="5.4" height="3.0" fill="#141826"/><rect x="9.8" y="95.0" width="4.2" height="3.5" fill="#44628f"/><rect x="14.0" y="94.9" width="6.0" height="1.6" fill="#b7bfd0"/><rect x="21.2" y="94.7" width="3.3" height="3.2" fill="#7a6a7a"/><rect x="24.5" y="94.9" width="3.3" height="3.3" fill="#dfe2ea"/><rect x="28.9" y="94.5" width="4.9" height="1.6" fill="#2a2f45"/><rect x="34.0" y="94.4" width="3.5" height="3.3" fill="#4f78b0"/><rect x="37.7" y="94.9" width="2.8" height="3.4" fill="#3e669e"/><rect x="41.7" y="94.9" width="6.1" height="1.9" fill="#3e669e"/><rect x="47.8" y="94.7" width="5.3" height="3.0" fill="#8a7f92"/><rect x="54.2" y="94.6" width="2.7" height="2.7" fill="#44628f"/><rect x="57.9" y="94.9" width="4.1" height="3.1" fill="#b9583a"/><rect x="62.1" y="94.8" width="3.9" height="3.2" fill="#1a1f33"/><rect x="66.2" y="94.5" width="4.6" height="3.3" fill="#2a2f45"/><rect x="71.4" y="94.8" width="4.0" height="1.7" fill="#1c2236"/><rect x="76.2" y="94.3" width="4.7" height="2.4" fill="#b7bfd0"/><rect x="81.2" y="94.8" width="5.5" height="2.4" fill="#dfe2ea"/><rect x="87.0" y="94.3" width="2.7" height="3.4" fill="#3e669e"/><rect x="90.1" y="94.9" width="3.0" height="2.9" fill="#c9cfdc"/><rect x="93.8" y="94.4" width="4.4" height="2.4" fill="#d99a3a"/><rect x="98.6" y="94.2" width="5.9" height="1.8" fill="#c0442a"/><rect x="104.8" y="94.3" width="6.3" height="2.6" fill="#1a1f33"/><rect x="112.0" y="94.5" width="4.0" height="1.7" fill="#4f78b0"/><rect x="117.1" y="94.8" width="3.1" height="2.4" fill="#b7bfd0"/><rect x="121.3" y="94.8" width="2.8" height="1.8" fill="#1c2236"/><rect x="124.8" y="94.5" width="3.9" height="2.5" fill="#2a2f45"/><rect x="129.7" y="94.3" width="3.7" height="2.9" fill="#7a6a7a"/><rect x="134.5" y="94.7" width="7.3" height="2.5" fill="#141826"/><rect x="141.8" y="94.5" width="4.7" height="1.8" fill="#8f4a3e"/><rect x="146.9" y="95.0" width="3.2" height="3.1" fill="#44628f"/><rect x="150.1" y="94.3" width="6.2" height="2.2" fill="#3e669e"/><rect x="156.4" y="94.9" width="5.6" height="1.8" fill="#141826"/><rect x="162.8" y="95.0" width="4.0" height="2.8" fill="#1c2236"/><rect x="167.0" y="94.8" width="5.8" height="1.9" fill="#a9b3c8"/><rect x="173.0" y="94.4" width="7.1" height="2.9" fill="#232a42"/><rect x="181.1" y="94.4" width="6.4" height="3.2" fill="#c9cfdc"/><rect x="187.7" y="94.4" width="6.2" height="2.9" fill="#4f78b0"/><rect x="194.4" y="94.3" width="3.8" height="2.8" fill="#232a42"/><rect x="199.0" y="94.6" width="5.1" height="2.5" fill="#35527d"/><rect x="204.4" y="94.6" width="3.8" height="1.8" fill="#b9583a"/><rect x="208.3" y="94.5" width="3.9" height="2.0" fill="#2a2f45"/><rect x="212.8" y="94.5" width="7.5" height="1.8" fill="#1a1f33"/><rect x="220.8" y="94.3" width="4.0" height="2.0" fill="#232a42"/><rect x="225.9" y="95.0" width="6.2" height="2.7" fill="#e9b24a"/><rect x="233.2" y="94.4" width="5.7" height="2.4" fill="#c0442a"/><rect x="239.9" y="94.5" width="3.5" height="2.3" fill="#2a2f45"/><rect x="244.2" y="94.7" width="4.6" height="3.2" fill="#35527d"/><rect x="249.3" y="95.0" width="3.2" height="3.2" fill="#b9583a"/><rect x="-1.2" y="97.1" width="4.2" height="3.6" fill="#6c93c6"/><rect x="4.2" y="97.0" width="5.0" height="2.4" fill="#2a2f45"/><rect x="9.9" y="97.0" width="7.5" height="1.8" fill="#3e669e"/><rect x="18.4" y="96.6" width="3.6" height="2.4" fill="#35527d"/><rect x="22.0" y="96.9" width="6.8" height="2.1" fill="#35527d"/><rect x="28.9" y="97.2" width="3.2" height="2.1" fill="#7a6a7a"/><rect x="33.2" y="96.9" width="7.5" height="2.6" fill="#d99a3a"/><rect x="40.7" y="96.6" width="5.2" height="2.9" fill="#dfe2ea"/><rect x="46.1" y="96.7" width="3.4" height="3.4" fill="#1c2236"/><rect x="50.1" y="96.5" width="5.9" height="3.6" fill="#c9704a"/><rect x="57.0" y="96.8" width="6.4" height="3.4" fill="#8a7f92"/><rect x="64.5" y="97.2" width="3.9" height="2.8" fill="#2a2f45"/><rect x="68.8" y="96.5" width="6.5" height="2.3" fill="#141826"/><rect x="76.3" y="97.2" width="3.1" height="2.3" fill="#4f78b0"/><rect x="80.3" y="97.2" width="6.5" height="3.4" fill="#232a42"/><rect x="87.1" y="96.8" width="4.2" height="2.5" fill="#b9583a"/><rect x="91.4" y="96.8" width="4.5" height="1.9" fill="#5b86bd"/><rect x="96.1" y="97.1" width="7.6" height="1.9" fill="#5b86bd"/><rect x="104.4" y="96.9" width="3.0" height="1.8" fill="#3e669e"/><rect x="108.1" y="97.0" width="5.5" height="1.9" fill="#a9b3c8"/><rect x="114.5" y="96.6" width="4.4" height="2.8" fill="#d4d0d2"/><rect x="119.4" y="96.9" width="7.4" height="2.7" fill="#b7bfd0"/><rect x="127.5" y="96.8" width="3.5" height="3.3" fill="#1a1f33"/><rect x="131.4" y="97.0" width="7.0" height="1.9" fill="#4f78b0"/><rect x="139.5" y="97.2" width="4.9" height="2.0" fill="#1a1f33"/><rect x="145.3" y="96.8" width="3.6" height="1.7" fill="#8f4a3e"/><rect x="149.3" y="96.6" width="4.3" height="2.0" fill="#d99a3a"/><rect x="154.1" y="96.5" width="5.3" height="2.8" fill="#1a1f33"/><rect x="160.2" y="96.7" width="5.1" height="2.1" fill="#35527d"/><rect x="165.3" y="96.9" width="2.9" height="2.4" fill="#a64a34"/><rect x="168.6" y="96.6" width="3.1" height="3.0" fill="#141826"/><rect x="172.8" y="96.7" width="5.8" height="2.1" fill="#e9b24a"/><rect x="179.7" y="96.6" width="7.5" height="2.8" fill="#4f78b0"/><rect x="188.2" y="96.8" width="7.6" height="2.1" fill="#3e669e"/><rect x="196.3" y="96.9" width="7.1" height="2.7" fill="#1a1f33"/><rect x="204.0" y="96.6" width="7.1" height="2.7" fill="#1a1f33"/><rect x="211.6" y="97.1" width="5.9" height="3.2" fill="#6c93c6"/><rect x="218.6" y="96.5" width="3.9" height="3.1" fill="#c9cfdc"/><rect x="222.4" y="97.1" width="5.8" height="2.1" fill="#8a7f92"/><rect x="228.3" y="97.0" width="5.5" height="2.1" fill="#1a1f33"/><rect x="234.8" y="96.8" width="5.3" height="3.3" fill="#1a1f33"/><rect x="241.2" y="97.0" width="2.9" height="3.4" fill="#44628f"/><rect x="244.6" y="96.6" width="6.1" height="2.4" fill="#35527d"/><rect x="251.1" y="96.8" width="6.6" height="2.1" fill="#1c2236"/><rect x="-3.8" y="99.1" width="7.0" height="2.1" fill="#35527d"/><rect x="3.9" y="98.8" width="4.3" height="2.3" fill="#e9b24a"/><rect x="8.8" y="99.3" width="4.5" height="2.5" fill="#8a7f92"/><rect x="14.5" y="99.3" width="6.7" height="3.6" fill="#232a42"/><rect x="21.3" y="99.3" width="4.6" height="2.0" fill="#3e669e"/><rect x="27.1" y="99.2" width="7.0" height="3.1" fill="#8f4a3e"/><rect x="34.3" y="99.3" width="5.3" height="2.3" fill="#c0442a"/><rect x="39.7" y="99.1" width="4.8" height="2.1" fill="#1c2236"/><rect x="45.7" y="99.5" width="4.9" height="2.0" fill="#2a2f45"/><rect x="51.2" y="99.2" width="5.0" height="3.2" fill="#6c93c6"/><rect x="56.5" y="99.0" width="7.9" height="3.5" fill="#44628f"/><rect x="64.7" y="99.1" width="3.6" height="3.8" fill="#d4d0d2"/><rect x="69.2" y="98.8" width="3.2" height="3.3" fill="#1a1f33"/><rect x="73.1" y="99.3" width="3.8" height="3.6" fill="#1c2236"/><rect x="77.2" y="99.0" width="4.1" height="1.9" fill="#2a2f45"/><rect x="81.4" y="99.2" width="4.7" height="2.4" fill="#8a7f92"/><rect x="86.3" y="99.6" width="5.4" height="3.6" fill="#141826"/><rect x="92.3" y="99.5" width="5.5" height="2.6" fill="#5b86bd"/><rect x="98.7" y="99.5" width="5.5" height="3.6" fill="#1c2236"/><rect x="104.3" y="99.0" width="6.3" height="1.9" fill="#dfe2ea"/><rect x="110.8" y="98.9" width="4.2" height="1.9" fill="#44628f"/><rect x="115.6" y="99.2" width="3.3" height="1.8" fill="#3e669e"/><rect x="119.4" y="99.5" width="4.4" height="3.4" fill="#b7bfd0"/><rect x="124.6" y="99.1" width="7.1" height="3.8" fill="#b9583a"/><rect x="132.3" y="99.3" width="5.6" height="2.6" fill="#7a6a7a"/><rect x="138.3" y="98.9" width="5.1" height="3.4" fill="#44628f"/><rect x="144.2" y="98.9" width="7.8" height="2.1" fill="#232a42"/><rect x="153.2" y="99.6" width="4.1" height="2.6" fill="#4f78b0"/><rect x="157.5" y="99.3" width="3.9" height="3.6" fill="#1c2236"/><rect x="161.5" y="99.4" width="5.5" height="2.0" fill="#1c2236"/><rect x="167.5" y="99.1" width="3.8" height="3.1" fill="#44628f"/><rect x="171.5" y="99.6" width="7.7" height="2.5" fill="#a9b3c8"/><rect x="179.8" y="99.1" width="7.3" height="3.8" fill="#4f78b0"/><rect x="187.4" y="99.3" width="3.3" height="3.5" fill="#a9b3c8"/><rect x="191.8" y="99.1" width="8.1" height="3.2" fill="#8a7f92"/><rect x="200.8" y="99.5" width="7.6" height="1.8" fill="#2a2f45"/><rect x="209.3" y="99.3" width="3.9" height="3.6" fill="#2a2f45"/><rect x="213.3" y="99.5" width="7.2" height="3.0" fill="#5b86bd"/><rect x="220.5" y="99.5" width="5.2" height="3.8" fill="#44628f"/><rect x="226.1" y="99.0" width="7.6" height="2.3" fill="#a64a34"/><rect x="234.3" y="99.6" width="8.2" height="3.5" fill="#dfe2ea"/><rect x="242.8" y="99.2" width="7.8" height="2.5" fill="#c9cfdc"/><rect x="251.3" y="99.1" width="6.1" height="3.4" fill="#5b86bd"/><rect x="-3.9" y="101.5" width="4.2" height="3.9" fill="#6c93c6"/><rect x="1.4" y="101.7" width="6.1" height="2.5" fill="#b7bfd0"/><rect x="8.4" y="101.3" width="3.8" height="3.3" fill="#2a2f45"/><rect x="12.8" y="101.9" width="3.7" height="3.3" fill="#5b86bd"/><rect x="17.6" y="101.3" width="6.4" height="2.7" fill="#232a42"/><rect x="24.2" y="101.8" width="3.6" height="3.3" fill="#35527d"/><rect x="28.5" y="101.7" width="4.1" height="2.1" fill="#35527d"/><rect x="32.8" y="101.5" width="4.9" height="3.8" fill="#141826"/><rect x="38.3" y="101.7" width="4.4" height="2.7" fill="#d4d0d2"/><rect x="43.1" y="101.8" width="4.7" height="3.8" fill="#8a7f92"/><rect x="48.2" y="101.2" width="6.3" height="2.0" fill="#a9b3c8"/><rect x="55.1" y="102.1" width="7.8" height="3.0" fill="#3e669e"/><rect x="63.1" y="101.5" width="4.1" height="3.7" fill="#44628f"/><rect x="68.3" y="101.5" width="7.2" height="2.7" fill="#dfe2ea"/><rect x="76.3" y="101.4" width="3.9" height="2.5" fill="#c9704a"/><rect x="81.4" y="102.0" width="4.1" height="2.6" fill="#3e669e"/><rect x="86.2" y="102.0" width="3.3" height="3.4" fill="#e9b24a"/><rect x="90.0" y="102.0" width="7.0" height="2.3" fill="#b7bfd0"/><rect x="97.2" y="101.9" width="4.3" height="3.9" fill="#a64a34"/><rect x="102.5" y="102.0" width="5.1" height="3.4" fill="#1a1f33"/><rect x="107.9" y="101.5" width="8.0" height="3.1" fill="#1c2236"/><rect x="115.9" y="101.8" width="4.7" height="2.2" fill="#8a7f92"/><rect x="121.7" y="101.7" width="8.1" height="2.3" fill="#232a42"/><rect x="130.5" y="102.0" width="3.7" height="2.0" fill="#a64a34"/><rect x="134.6" y="101.2" width="3.4" height="3.1" fill="#1c2236"/><rect x="138.6" y="101.5" width="6.0" height="2.2" fill="#5b86bd"/><rect x="145.1" y="101.8" width="3.3" height="3.1" fill="#dfe2ea"/><rect x="149.3" y="101.6" width="7.2" height="2.5" fill="#232a42"/><rect x="157.1" y="102.1" width="8.1" height="2.5" fill="#c9cfdc"/><rect x="166.2" y="101.5" width="6.7" height="3.5" fill="#d4d0d2"/><rect x="172.9" y="102.1" width="3.2" height="3.3" fill="#5b86bd"/><rect x="176.7" y="102.0" width="7.9" height="2.5" fill="#b7bfd0"/><rect x="184.9" y="102.1" width="4.1" height="2.6" fill="#6c93c6"/><rect x="189.7" y="101.5" width="4.3" height="3.7" fill="#1a1f33"/><rect x="194.4" y="101.5" width="4.0" height="3.5" fill="#c9cfdc"/><rect x="199.0" y="102.0" width="5.9" height="2.7" fill="#a9b3c8"/><rect x="205.4" y="101.8" width="7.3" height="1.9" fill="#141826"/><rect x="213.8" y="101.5" width="3.2" height="3.9" fill="#3e669e"/><rect x="217.1" y="101.5" width="8.1" height="4.0" fill="#d99a3a"/><rect x="226.4" y="102.1" width="7.2" height="3.2" fill="#a9b3c8"/><rect x="233.7" y="101.6" width="8.7" height="2.2" fill="#dfe2ea"/><rect x="242.9" y="101.9" width="4.2" height="3.1" fill="#a64a34"/><rect x="247.2" y="101.4" width="6.3" height="2.7" fill="#6c93c6"/><rect x="-5.3" y="104.1" width="5.6" height="4.0" fill="#2a2f45"/><rect x="1.1" y="104.0" width="8.5" height="2.1" fill="#d4d0d2"/><rect x="10.3" y="103.8" width="3.8" height="4.2" fill="#4f78b0"/><rect x="14.6" y="104.1" width="7.6" height="3.6" fill="#44628f"/><rect x="23.3" y="104.3" width="3.8" height="4.1" fill="#a64a34"/><rect x="28.2" y="104.1" width="5.0" height="3.5" fill="#5b86bd"/><rect x="33.9" y="104.1" width="7.1" height="2.9" fill="#5b86bd"/><rect x="41.1" y="103.9" width="4.3" height="2.4" fill="#1c2236"/><rect x="45.9" y="104.6" width="4.5" height="3.2" fill="#1a1f33"/><rect x="50.6" y="104.3" width="8.1" height="2.9" fill="#c9cfdc"/><rect x="58.7" y="104.4" width="4.6" height="4.0" fill="#dfe2ea"/><rect x="63.7" y="103.9" width="6.2" height="3.6" fill="#141826"/><rect x="70.6" y="104.5" width="3.3" height="2.9" fill="#2a2f45"/><rect x="75.1" y="104.3" width="6.2" height="2.2" fill="#8a7f92"/><rect x="82.3" y="104.1" width="9.2" height="2.4" fill="#7a6a7a"/><rect x="92.2" y="104.6" width="6.1" height="2.8" fill="#3e669e"/><rect x="98.8" y="104.6" width="8.8" height="3.8" fill="#1c2236"/><rect x="108.5" y="104.6" width="8.6" height="2.7" fill="#7a6a7a"/><rect x="117.8" y="104.5" width="6.5" height="3.6" fill="#d4d0d2"/><rect x="125.2" y="104.0" width="5.3" height="2.2" fill="#2a2f45"/><rect x="131.7" y="104.0" width="3.4" height="2.7" fill="#4f78b0"/><rect x="135.6" y="103.7" width="7.4" height="1.9" fill="#3e669e"/><rect x="143.4" y="103.8" width="5.0" height="4.1" fill="#a64a34"/><rect x="148.6" y="104.2" width="8.5" height="2.4" fill="#44628f"/><rect x="157.4" y="104.5" width="7.3" height="3.0" fill="#2a2f45"/><rect x="165.6" y="103.8" width="8.6" height="2.5" fill="#6c93c6"/><rect x="175.2" y="104.3" width="4.4" height="2.3" fill="#3e669e"/><rect x="180.0" y="104.0" width="7.2" height="2.3" fill="#b7bfd0"/><rect x="187.4" y="104.3" width="6.4" height="4.2" fill="#6c93c6"/><rect x="194.2" y="104.2" width="4.6" height="2.2" fill="#a9b3c8"/><rect x="199.6" y="104.0" width="4.5" height="4.1" fill="#44628f"/><rect x="205.1" y="104.5" width="9.0" height="4.1" fill="#6c93c6"/><rect x="214.6" y="104.5" width="6.1" height="2.8" fill="#35527d"/><rect x="221.6" y="104.6" width="5.1" height="2.9" fill="#8a7f92"/><rect x="227.8" y="104.0" width="5.5" height="3.0" fill="#141826"/><rect x="234.4" y="104.2" width="7.6" height="2.8" fill="#5b86bd"/><rect x="242.4" y="104.3" width="8.4" height="2.8" fill="#1c2236"/><rect x="251.5" y="104.1" width="4.5" height="2.5" fill="#5b86bd"/><rect x="-4.4" y="106.9" width="3.4" height="2.3" fill="#232a42"/><rect x="-0.7" y="106.5" width="6.2" height="3.4" fill="#c0442a"/><rect x="5.9" y="106.8" width="5.9" height="2.0" fill="#7a6a7a"/><rect x="12.1" y="106.4" width="8.1" height="4.3" fill="#1a1f33"/><rect x="20.9" y="106.6" width="4.7" height="4.3" fill="#44628f"/><rect x="26.2" y="106.5" width="9.5" height="3.2" fill="#6c93c6"/><rect x="36.6" y="106.4" width="5.6" height="3.7" fill="#141826"/><rect x="42.2" y="106.6" width="4.9" height="4.0" fill="#141826"/><rect x="48.3" y="106.6" width="4.6" height="4.0" fill="#1a1f33"/><rect x="53.1" y="106.6" width="7.4" height="3.1" fill="#35527d"/><rect x="61.7" y="106.6" width="4.7" height="3.7" fill="#3e669e"/><rect x="66.7" y="106.4" width="4.0" height="3.0" fill="#6c93c6"/><rect x="71.4" y="106.4" width="7.0" height="3.9" fill="#141826"/><rect x="79.6" y="106.6" width="9.4" height="2.7" fill="#141826"/><rect x="89.1" y="107.0" width="7.4" height="2.4" fill="#c9cfdc"/><rect x="97.3" y="107.0" width="5.2" height="3.1" fill="#8a7f92"/><rect x="102.7" y="107.3" width="4.5" height="2.6" fill="#1a1f33"/><rect x="107.4" y="106.8" width="6.2" height="2.1" fill="#d4d0d2"/><rect x="113.8" y="107.2" width="6.3" height="2.1" fill="#35527d"/><rect x="120.8" y="106.4" width="5.6" height="3.5" fill="#c0442a"/><rect x="127.3" y="107.3" width="9.0" height="2.8" fill="#44628f"/><rect x="136.7" y="106.4" width="8.1" height="4.1" fill="#4f78b0"/><rect x="144.9" y="107.0" width="9.6" height="3.0" fill="#3e669e"/><rect x="155.0" y="106.6" width="6.7" height="4.2" fill="#141826"/><rect x="162.0" y="106.9" width="9.4" height="3.0" fill="#232a42"/><rect x="172.3" y="106.7" width="5.3" height="2.1" fill="#8a7f92"/><rect x="177.6" y="107.1" width="4.9" height="3.0" fill="#5b86bd"/><rect x="183.5" y="106.5" width="5.4" height="2.7" fill="#141826"/><rect x="189.6" y="106.7" width="5.5" height="2.8" fill="#4f78b0"/><rect x="196.2" y="106.9" width="8.6" height="2.8" fill="#a9b3c8"/><rect x="204.8" y="107.1" width="9.4" height="3.0" fill="#232a42"/><rect x="214.4" y="106.9" width="6.3" height="3.8" fill="#44628f"/><rect x="221.7" y="106.5" width="7.0" height="4.1" fill="#1a1f33"/><rect x="228.8" y="106.9" width="9.0" height="4.0" fill="#b9583a"/><rect x="238.7" y="106.4" width="4.4" height="3.0" fill="#1c2236"/><rect x="243.1" y="106.6" width="7.5" height="3.1" fill="#7a6a7a"/><rect x="251.7" y="106.5" width="3.7" height="3.8" fill="#35527d"/><rect x="-2.3" y="109.2" width="8.7" height="2.4" fill="#232a42"/><rect x="6.6" y="109.1" width="8.5" height="2.9" fill="#1c2236"/><rect x="15.8" y="110.1" width="6.5" height="4.4" fill="#3e669e"/><rect x="22.6" y="110.1" width="6.9" height="2.4" fill="#8a7f92"/><rect x="30.1" y="109.5" width="9.2" height="4.2" fill="#c9cfdc"/><rect x="40.1" y="109.1" width="9.9" height="3.6" fill="#dfe2ea"/><rect x="50.9" y="109.6" width="6.0" height="3.8" fill="#35527d"/><rect x="58.0" y="109.8" width="8.9" height="3.1" fill="#1a1f33"/><rect x="67.7" y="109.1" width="6.8" height="2.8" fill="#1c2236"/><rect x="75.2" y="109.6" width="3.9" height="3.1" fill="#1a1f33"/><rect x="79.2" y="110.0" width="9.6" height="3.6" fill="#3e669e"/><rect x="89.9" y="109.9" width="9.7" height="2.8" fill="#35527d"/><rect x="100.5" y="109.8" width="8.2" height="2.1" fill="#8a7f92"/><rect x="109.6" y="109.6" width="4.2" height="2.4" fill="#4f78b0"/><rect x="114.3" y="109.8" width="4.1" height="3.8" fill="#8a7f92"/><rect x="118.6" y="109.9" width="6.6" height="3.3" fill="#7a6a7a"/><rect x="125.6" y="109.3" width="4.7" height="3.2" fill="#c9704a"/><rect x="131.4" y="109.4" width="7.7" height="2.5" fill="#6c93c6"/><rect x="139.5" y="109.6" width="9.7" height="2.5" fill="#f0c560"/><rect x="149.6" y="109.6" width="7.6" height="2.8" fill="#b7bfd0"/><rect x="157.7" y="109.4" width="5.5" height="4.5" fill="#8a7f92"/><rect x="164.1" y="110.0" width="5.1" height="3.3" fill="#dfe2ea"/><rect x="169.5" y="109.3" width="5.1" height="4.5" fill="#7a6a7a"/><rect x="175.3" y="109.2" width="3.7" height="3.0" fill="#5b86bd"/><rect x="179.4" y="109.4" width="7.5" height="4.2" fill="#c9704a"/><rect x="187.1" y="109.5" width="6.2" height="3.1" fill="#f0c560"/><rect x="193.9" y="109.9" width="6.0" height="4.0" fill="#5b86bd"/><rect x="200.4" y="110.0" width="9.0" height="4.3" fill="#dfe2ea"/><rect x="210.5" y="110.1" width="6.7" height="2.5" fill="#232a42"/><rect x="217.5" y="110.1" width="8.3" height="3.0" fill="#2a2f45"/><rect x="226.2" y="109.6" width="8.6" height="4.2" fill="#44628f"/><rect x="235.7" y="109.3" width="7.4" height="2.4" fill="#1a1f33"/><rect x="243.5" y="109.2" width="7.3" height="2.9" fill="#1a1f33"/><rect x="251.4" y="109.4" width="4.5" height="3.7" fill="#2a2f45"/><rect x="-3.4" y="112.7" width="9.3" height="3.1" fill="#1c2236"/><rect x="5.9" y="112.1" width="5.5" height="4.5" fill="#c9cfdc"/><rect x="11.5" y="112.5" width="5.7" height="3.8" fill="#141826"/><rect x="17.8" y="113.0" width="7.7" height="2.9" fill="#6c93c6"/><rect x="26.5" y="112.5" width="7.0" height="2.3" fill="#c9cfdc"/><rect x="34.6" y="113.0" width="8.9" height="2.3" fill="#dfe2ea"/><rect x="44.3" y="112.1" width="5.4" height="3.1" fill="#232a42"/><rect x="50.0" y="112.6" width="8.0" height="4.6" fill="#1a1f33"/><rect x="58.8" y="112.8" width="6.5" height="3.6" fill="#a9b3c8"/><rect x="65.5" y="112.9" width="5.7" height="4.2" fill="#4f78b0"/><rect x="72.1" y="112.5" width="6.1" height="4.6" fill="#8a7f92"/><rect x="78.3" y="112.2" width="7.7" height="4.2" fill="#c9cfdc"/><rect x="86.7" y="112.7" width="8.8" height="4.3" fill="#1a1f33"/><rect x="95.5" y="113.0" width="4.4" height="4.7" fill="#5b86bd"/><rect x="101.0" y="113.1" width="4.3" height="2.8" fill="#1a1f33"/><rect x="105.6" y="112.0" width="5.8" height="4.6" fill="#dfe2ea"/><rect x="111.4" y="112.4" width="5.6" height="3.4" fill="#6c93c6"/><rect x="118.2" y="113.0" width="4.2" height="3.4" fill="#8a7f92"/><rect x="122.6" y="112.7" width="10.1" height="2.9" fill="#35527d"/><rect x="132.7" y="112.5" width="6.7" height="2.6" fill="#232a42"/><rect x="139.7" y="112.5" width="5.8" height="4.5" fill="#8a7f92"/><rect x="146.3" y="112.9" width="5.0" height="2.7" fill="#1c2236"/><rect x="151.6" y="112.4" width="9.7" height="3.1" fill="#f0c560"/><rect x="162.5" y="113.0" width="4.3" height="2.6" fill="#35527d"/><rect x="167.4" y="112.6" width="5.7" height="2.3" fill="#b9583a"/><rect x="174.2" y="112.3" width="9.9" height="4.4" fill="#44628f"/><rect x="184.5" y="112.7" width="4.8" height="3.0" fill="#dfe2ea"/><rect x="189.9" y="112.3" width="8.5" height="3.3" fill="#b9583a"/><rect x="199.1" y="112.5" width="9.3" height="3.2" fill="#141826"/><rect x="209.5" y="112.7" width="4.8" height="4.3" fill="#2a2f45"/><rect x="215.2" y="112.7" width="10.6" height="2.7" fill="#c9cfdc"/><rect x="226.3" y="112.6" width="6.4" height="2.2" fill="#232a42"/><rect x="233.2" y="112.3" width="5.8" height="2.9" fill="#c9704a"/><rect x="239.9" y="112.2" width="5.9" height="2.8" fill="#b7bfd0"/><rect x="246.8" y="113.0" width="8.2" height="4.3" fill="#f0c560"/><rect x="-4.9" y="115.6" width="5.8" height="3.1" fill="#c9704a"/><rect x="1.0" y="115.9" width="5.8" height="4.8" fill="#dfe2ea"/><rect x="7.9" y="116.1" width="8.5" height="2.7" fill="#8a7f92"/><rect x="17.0" y="115.1" width="7.4" height="4.5" fill="#c0442a"/><rect x="25.4" y="115.9" width="9.8" height="4.3" fill="#35527d"/><rect x="35.9" y="115.8" width="7.9" height="2.8" fill="#3e669e"/><rect x="44.9" y="115.5" width="7.3" height="4.2" fill="#44628f"/><rect x="52.9" y="115.2" width="8.8" height="3.3" fill="#141826"/><rect x="62.4" y="115.5" width="9.3" height="4.1" fill="#35527d"/><rect x="72.3" y="115.8" width="4.7" height="3.2" fill="#141826"/><rect x="77.6" y="115.6" width="4.6" height="4.0" fill="#a9b3c8"/><rect x="83.2" y="115.7" width="5.0" height="3.3" fill="#e9b24a"/><rect x="89.3" y="115.9" width="9.9" height="4.1" fill="#8a7f92"/><rect x="99.4" y="115.6" width="6.1" height="4.8" fill="#35527d"/><rect x="106.0" y="115.5" width="8.2" height="3.5" fill="#232a42"/><rect x="114.7" y="115.2" width="8.0" height="3.1" fill="#2a2f45"/><rect x="123.3" y="116.1" width="6.9" height="3.6" fill="#d4d0d2"/><rect x="130.7" y="116.0" width="4.9" height="3.5" fill="#c9cfdc"/><rect x="135.9" y="116.0" width="4.7" height="4.0" fill="#5b86bd"/><rect x="141.4" y="116.0" width="8.8" height="3.5" fill="#232a42"/><rect x="151.3" y="115.7" width="8.5" height="3.1" fill="#6c93c6"/><rect x="159.9" y="116.1" width="9.4" height="2.4" fill="#141826"/><rect x="170.0" y="116.0" width="6.7" height="4.7" fill="#35527d"/><rect x="177.2" y="115.6" width="5.6" height="4.5" fill="#141826"/><rect x="183.9" y="115.3" width="4.6" height="2.4" fill="#b7bfd0"/><rect x="189.0" y="115.7" width="9.4" height="4.0" fill="#c9cfdc"/><rect x="198.8" y="115.8" width="5.5" height="4.9" fill="#4f78b0"/><rect x="205.1" y="115.7" width="6.0" height="2.6" fill="#232a42"/><rect x="211.9" y="115.6" width="4.5" height="3.8" fill="#d99a3a"/><rect x="217.3" y="115.4" width="10.4" height="3.7" fill="#2a2f45"/><rect x="228.2" y="116.0" width="7.8" height="3.5" fill="#1a1f33"/><rect x="236.2" y="116.0" width="10.5" height="4.8" fill="#4f78b0"/><rect x="246.9" y="115.7" width="6.2" height="3.4" fill="#44628f"/><rect x="-0.5" y="118.2" width="7.2" height="4.5" fill="#44628f"/><rect x="6.7" y="119.2" width="4.8" height="3.0" fill="#dfe2ea"/><rect x="11.5" y="119.1" width="6.7" height="4.6" fill="#141826"/><rect x="18.4" y="118.8" width="4.6" height="2.5" fill="#2a2f45"/><rect x="23.7" y="118.4" width="5.9" height="3.8" fill="#7a6a7a"/><rect x="30.2" y="119.3" width="7.9" height="2.6" fill="#d4d0d2"/><rect x="38.7" y="118.7" width="5.9" height="4.8" fill="#7a6a7a"/><rect x="44.6" y="118.2" width="9.0" height="3.5" fill="#6c93c6"/><rect x="53.8" y="118.4" width="7.4" height="3.3" fill="#dfe2ea"/><rect x="62.0" y="118.3" width="4.7" height="2.9" fill="#b7bfd0"/><rect x="67.7" y="119.3" width="5.8" height="4.6" fill="#5b86bd"/><rect x="73.7" y="118.4" width="5.4" height="5.0" fill="#232a42"/><rect x="79.4" y="118.7" width="10.0" height="3.6" fill="#1a1f33"/><rect x="89.6" y="118.9" width="4.4" height="4.9" fill="#44628f"/><rect x="95.1" y="118.2" width="6.9" height="4.5" fill="#1a1f33"/><rect x="103.1" y="118.3" width="4.3" height="3.4" fill="#2a2f45"/><rect x="108.4" y="118.8" width="5.0" height="4.6" fill="#8a7f92"/><rect x="114.5" y="118.2" width="5.0" height="2.6" fill="#44628f"/><rect x="119.6" y="118.7" width="9.0" height="5.0" fill="#2a2f45"/><rect x="129.7" y="118.7" width="7.5" height="2.5" fill="#d4d0d2"/><rect x="137.7" y="118.4" width="6.7" height="4.0" fill="#b7bfd0"/><rect x="145.0" y="118.8" width="6.6" height="4.8" fill="#1a1f33"/><rect x="152.2" y="119.0" width="10.8" height="2.9" fill="#1a1f33"/><rect x="163.0" y="119.1" width="6.8" height="4.4" fill="#b9583a"/><rect x="170.9" y="118.8" width="11.4" height="5.0" fill="#232a42"/><rect x="183.4" y="119.1" width="7.3" height="3.1" fill="#2a2f45"/><rect x="191.6" y="119.2" width="9.8" height="3.6" fill="#a64a34"/><rect x="202.5" y="118.9" width="5.3" height="5.0" fill="#3e669e"/><rect x="208.3" y="119.0" width="8.6" height="4.2" fill="#1a1f33"/><rect x="217.9" y="118.7" width="4.5" height="2.9" fill="#8f4a3e"/><rect x="223.1" y="118.7" width="7.1" height="4.6" fill="#6c93c6"/><rect x="230.5" y="119.1" width="4.5" height="4.3" fill="#2a2f45"/><rect x="234.9" y="118.6" width="10.6" height="5.0" fill="#c9cfdc"/><rect x="246.0" y="118.6" width="10.1" height="3.3" fill="#2a2f45"/><rect x="-0.7" y="122.0" width="9.4" height="3.7" fill="#a9b3c8"/><rect x="8.8" y="121.8" width="12.1" height="4.3" fill="#3e669e"/><rect x="21.2" y="121.5" width="11.5" height="4.6" fill="#4f78b0"/><rect x="33.5" y="121.8" width="7.6" height="3.8" fill="#8a7f92"/><rect x="41.5" y="122.5" width="11.7" height="4.4" fill="#141826"/><rect x="54.1" y="122.2" width="8.4" height="2.8" fill="#8f4a3e"/><rect x="63.4" y="122.2" width="12.1" height="3.8" fill="#8a7f92"/><rect x="75.5" y="122.6" width="10.3" height="3.6" fill="#232a42"/><rect x="86.2" y="121.6" width="5.9" height="4.6" fill="#232a42"/><rect x="93.2" y="121.8" width="10.0" height="4.0" fill="#6c93c6"/><rect x="103.7" y="122.3" width="10.4" height="3.0" fill="#1c2236"/><rect x="114.6" y="122.6" width="5.0" height="2.5" fill="#1a1f33"/><rect x="120.0" y="121.9" width="7.1" height="4.4" fill="#141826"/><rect x="127.8" y="121.8" width="9.9" height="4.5" fill="#c9cfdc"/><rect x="137.7" y="121.5" width="6.3" height="4.2" fill="#c9704a"/><rect x="145.0" y="122.4" width="9.3" height="4.6" fill="#1c2236"/><rect x="155.4" y="122.0" width="11.9" height="5.4" fill="#2a2f45"/><rect x="167.6" y="121.5" width="8.8" height="3.9" fill="#1a1f33"/><rect x="176.6" y="122.4" width="5.4" height="4.9" fill="#6c93c6"/><rect x="182.4" y="122.4" width="11.5" height="3.8" fill="#a9b3c8"/><rect x="194.9" y="122.1" width="5.9" height="4.8" fill="#2a2f45"/><rect x="201.6" y="121.6" width="11.5" height="3.6" fill="#1a1f33"/><rect x="214.3" y="122.5" width="6.6" height="3.7" fill="#1a1f33"/><rect x="222.1" y="122.2" width="8.5" height="4.9" fill="#5b86bd"/><rect x="231.3" y="121.8" width="9.6" height="4.7" fill="#1c2236"/><rect x="241.1" y="122.4" width="7.3" height="4.0" fill="#2a2f45"/><rect x="249.2" y="121.4" width="4.7" height="3.4" fill="#dfe2ea"/><rect x="-5.1" y="125.7" width="4.8" height="3.6" fill="#44628f"/><rect x="0.8" y="124.9" width="6.5" height="4.4" fill="#232a42"/><rect x="8.0" y="125.3" width="7.8" height="5.0" fill="#35527d"/><rect x="16.1" y="125.2" width="12.3" height="5.6" fill="#3e669e"/><rect x="29.1" y="125.8" width="7.7" height="2.8" fill="#141826"/><rect x="38.0" y="125.0" width="12.2" height="4.5" fill="#141826"/><rect x="50.8" y="125.1" width="5.0" height="2.6" fill="#1a1f33"/><rect x="56.8" y="125.4" width="5.6" height="4.6" fill="#c0442a"/><rect x="63.3" y="125.8" width="9.1" height="3.1" fill="#3e669e"/><rect x="72.4" y="125.2" width="8.8" height="4.2" fill="#1c2236"/><rect x="81.3" y="125.7" width="8.1" height="3.3" fill="#35527d"/><rect x="90.0" y="125.4" width="6.3" height="3.0" fill="#1a1f33"/><rect x="97.2" y="126.0" width="11.9" height="3.4" fill="#2a2f45"/><rect x="109.2" y="125.2" width="8.4" height="2.8" fill="#141826"/><rect x="118.3" y="125.5" width="7.9" height="4.6" fill="#1a1f33"/><rect x="126.6" y="125.6" width="10.3" height="4.2" fill="#2a2f45"/><rect x="137.9" y="124.9" width="10.4" height="4.5" fill="#2a2f45"/><rect x="149.2" y="125.1" width="11.5" height="4.1" fill="#2a2f45"/><rect x="161.4" y="125.2" width="7.0" height="2.8" fill="#1a1f33"/><rect x="169.4" y="125.6" width="8.0" height="2.6" fill="#2a2f45"/><rect x="177.8" y="124.9" width="12.3" height="2.8" fill="#e9b24a"/><rect x="190.1" y="125.8" width="7.5" height="2.9" fill="#1a1f33"/><rect x="198.1" y="125.7" width="5.2" height="3.6" fill="#8f4a3e"/><rect x="203.5" y="126.1" width="6.3" height="5.5" fill="#a9b3c8"/><rect x="210.3" y="125.3" width="4.7" height="3.3" fill="#c9704a"/><rect x="215.7" y="125.8" width="6.2" height="4.6" fill="#3e669e"/><rect x="222.1" y="125.8" width="12.3" height="4.3" fill="#b7bfd0"/><rect x="234.9" y="126.1" width="4.7" height="5.3" fill="#141826"/><rect x="240.2" y="125.0" width="10.6" height="3.6" fill="#2a2f45"/><rect x="251.0" y="125.9" width="5.4" height="5.2" fill="#5b86bd"/><rect x="-0.2" y="129.4" width="9.7" height="4.2" fill="#b7bfd0"/><rect x="10.1" y="129.5" width="9.1" height="2.8" fill="#232a42"/><rect x="19.7" y="128.5" width="11.7" height="4.9" fill="#44628f"/><rect x="32.1" y="129.0" width="4.9" height="4.1" fill="#35527d"/><rect x="37.9" y="129.0" width="12.6" height="4.1" fill="#1c2236"/><rect x="51.0" y="129.2" width="8.5" height="4.2" fill="#2a2f45"/><rect x="60.6" y="129.5" width="7.5" height="3.7" fill="#141826"/><rect x="69.1" y="129.8" width="7.7" height="5.4" fill="#a9b3c8"/><rect x="77.7" y="129.7" width="9.7" height="5.7" fill="#a9b3c8"/><rect x="87.7" y="128.7" width="8.0" height="4.7" fill="#2a2f45"/><rect x="96.6" y="128.8" width="6.6" height="4.7" fill="#dfe2ea"/><rect x="104.0" y="129.3" width="8.2" height="4.1" fill="#d99a3a"/><rect x="112.4" y="129.6" width="6.7" height="4.0" fill="#44628f"/><rect x="119.2" y="129.4" width="12.1" height="5.5" fill="#6c93c6"/><rect x="132.5" y="129.0" width="10.3" height="4.6" fill="#1a1f33"/><rect x="143.7" y="129.4" width="7.5" height="4.8" fill="#4f78b0"/><rect x="152.2" y="128.4" width="7.2" height="2.9" fill="#c9cfdc"/><rect x="159.8" y="129.1" width="5.1" height="4.6" fill="#a64a34"/><rect x="165.1" y="129.7" width="6.3" height="4.9" fill="#2a2f45"/><rect x="171.5" y="129.4" width="9.0" height="3.8" fill="#3e669e"/><rect x="180.6" y="128.5" width="8.6" height="3.6" fill="#8a7f92"/><rect x="190.0" y="129.4" width="6.7" height="4.7" fill="#a9b3c8"/><rect x="197.0" y="129.1" width="12.6" height="2.8" fill="#5b86bd"/><rect x="210.8" y="129.7" width="7.8" height="4.0" fill="#b7bfd0"/><rect x="218.8" y="129.5" width="8.4" height="5.8" fill="#dfe2ea"/><rect x="227.8" y="128.6" width="8.6" height="2.8" fill="#141826"/><rect x="236.7" y="129.4" width="5.5" height="5.6" fill="#1c2236"/><rect x="242.5" y="129.4" width="11.7" height="3.8" fill="#3e669e"/><rect x="-5.3" y="133.1" width="5.1" height="3.4" fill="#6c93c6"/><rect x="-0.1" y="132.5" width="12.5" height="5.8" fill="#2a2f45"/><rect x="13.5" y="133.2" width="12.9" height="5.8" fill="#dfe2ea"/><rect x="27.1" y="132.3" width="9.2" height="5.6" fill="#3e669e"/><rect x="36.4" y="132.4" width="13.3" height="2.9" fill="#35527d"/><rect x="49.7" y="132.8" width="6.1" height="5.2" fill="#6c93c6"/><rect x="56.6" y="132.3" width="11.3" height="3.8" fill="#7a6a7a"/><rect x="68.0" y="133.2" width="13.9" height="5.5" fill="#44628f"/><rect x="82.7" y="132.9" width="11.8" height="4.9" fill="#dfe2ea"/><rect x="95.3" y="133.2" width="10.8" height="3.1" fill="#d4d0d2"/><rect x="106.8" y="132.3" width="5.9" height="3.1" fill="#6c93c6"/><rect x="113.9" y="133.4" width="12.8" height="5.6" fill="#44628f"/><rect x="127.4" y="132.3" width="5.0" height="6.1" fill="#a9b3c8"/><rect x="132.9" y="133.5" width="11.2" height="4.5" fill="#2a2f45"/><rect x="144.5" y="132.7" width="8.6" height="5.0" fill="#1a1f33"/><rect x="153.2" y="132.9" width="11.2" height="4.2" fill="#a9b3c8"/><rect x="165.6" y="133.1" width="7.7" height="2.9" fill="#5b86bd"/><rect x="174.4" y="132.9" width="9.7" height="5.8" fill="#2a2f45"/><rect x="184.8" y="133.1" width="11.8" height="3.2" fill="#8a7f92"/><rect x="197.3" y="133.1" width="13.5" height="2.9" fill="#6c93c6"/><rect x="211.9" y="133.0" width="11.9" height="5.9" fill="#1c2236"/><rect x="224.8" y="133.0" width="8.4" height="5.3" fill="#d99a3a"/><rect x="233.3" y="132.5" width="8.4" height="4.9" fill="#232a42"/><rect x="242.6" y="132.7" width="12.5" height="4.9" fill="#2a2f45"/><rect x="-2.9" y="136.1" width="13.8" height="5.4" fill="#b7bfd0"/><rect x="11.4" y="136.9" width="12.0" height="4.1" fill="#6c93c6"/><rect x="23.6" y="137.3" width="10.7" height="3.1" fill="#1c2236"/><rect x="35.4" y="136.2" width="10.8" height="3.0" fill="#dfe2ea"/><rect x="46.2" y="136.8" width="5.4" height="6.4" fill="#232a42"/><rect x="51.8" y="136.1" width="8.9" height="6.0" fill="#35527d"/><rect x="61.4" y="137.0" width="14.0" height="6.3" fill="#6c93c6"/><rect x="76.0" y="136.7" width="13.2" height="4.4" fill="#232a42"/><rect x="90.0" y="137.0" width="5.6" height="4.5" fill="#5b86bd"/><rect x="95.7" y="137.2" width="9.4" height="6.3" fill="#8a7f92"/><rect x="105.7" y="136.4" width="6.2" height="6.2" fill="#2a2f45"/><rect x="113.0" y="136.7" width="6.1" height="3.8" fill="#d4d0d2"/><rect x="119.9" y="136.7" width="6.3" height="3.6" fill="#d99a3a"/><rect x="126.7" y="136.6" width="7.1" height="4.0" fill="#5b86bd"/><rect x="134.2" y="136.7" width="5.9" height="3.7" fill="#1c2236"/><rect x="140.8" y="136.7" width="9.4" height="4.0" fill="#b7bfd0"/><rect x="151.0" y="136.4" width="14.4" height="3.5" fill="#5b86bd"/><rect x="165.5" y="137.4" width="9.7" height="4.9" fill="#b7bfd0"/><rect x="175.9" y="137.3" width="10.0" height="4.1" fill="#c0442a"/><rect x="187.1" y="136.1" width="12.7" height="4.7" fill="#8f4a3e"/><rect x="200.5" y="136.5" width="13.5" height="4.8" fill="#e9b24a"/><rect x="215.1" y="136.6" width="7.2" height="5.9" fill="#dfe2ea"/><rect x="223.0" y="137.2" width="7.5" height="4.2" fill="#1a1f33"/><rect x="231.4" y="137.3" width="10.4" height="5.5" fill="#1a1f33"/><rect x="242.7" y="137.1" width="12.8" height="5.9" fill="#6c93c6"/><rect x="-5.3" y="140.3" width="14.8" height="4.7" fill="#7a6a7a"/><rect x="9.9" y="140.6" width="7.3" height="4.5" fill="#8a7f92"/><rect x="18.2" y="141.5" width="10.6" height="6.5" fill="#2a2f45"/><rect x="29.6" y="140.3" width="12.3" height="5.4" fill="#4f78b0"/><rect x="43.0" y="140.7" width="14.2" height="3.2" fill="#141826"/><rect x="58.2" y="140.2" width="8.1" height="4.1" fill="#2a2f45"/><rect x="67.1" y="140.2" width="11.1" height="5.9" fill="#8a7f92"/><rect x="79.3" y="140.6" width="7.0" height="4.4" fill="#141826"/><rect x="87.0" y="140.4" width="10.3" height="5.5" fill="#b9583a"/><rect x="97.8" y="140.4" width="7.5" height="3.9" fill="#7a6a7a"/><rect x="105.7" y="140.1" width="10.2" height="5.4" fill="#b7bfd0"/><rect x="117.1" y="140.7" width="8.2" height="6.1" fill="#141826"/><rect x="125.8" y="140.4" width="12.9" height="5.3" fill="#1a1f33"/><rect x="139.1" y="141.0" width="11.0" height="4.2" fill="#44628f"/><rect x="150.7" y="141.5" width="11.2" height="5.2" fill="#8a7f92"/><rect x="162.0" y="141.1" width="11.4" height="5.6" fill="#a9b3c8"/><rect x="173.8" y="140.5" width="6.6" height="4.9" fill="#a9b3c8"/><rect x="180.6" y="140.3" width="12.0" height="3.3" fill="#b7bfd0"/><rect x="193.0" y="140.4" width="8.1" height="5.2" fill="#44628f"/><rect x="201.5" y="141.3" width="14.6" height="5.2" fill="#8a7f92"/><rect x="217.2" y="141.0" width="8.9" height="3.6" fill="#2a2f45"/><rect x="227.1" y="140.6" width="9.0" height="6.1" fill="#2a2f45"/><rect x="236.4" y="140.8" width="9.3" height="4.8" fill="#6c93c6"/><rect x="245.9" y="141.2" width="11.2" height="6.6" fill="#2a2f45"/><rect x="-1.6" y="145.2" width="5.8" height="3.4" fill="#c0442a"/><rect x="5.0" y="145.4" width="12.0" height="3.7" fill="#44628f"/><rect x="17.8" y="145.5" width="9.6" height="4.8" fill="#1a1f33"/><rect x="28.1" y="144.7" width="15.7" height="6.3" fill="#3e669e"/><rect x="44.9" y="145.4" width="8.2" height="6.6" fill="#1a1f33"/><rect x="53.4" y="144.7" width="7.9" height="6.9" fill="#232a42"/><rect x="61.5" y="145.7" width="11.4" height="3.7" fill="#3e669e"/><rect x="73.9" y="144.9" width="11.3" height="5.9" fill="#7a6a7a"/><rect x="86.4" y="145.6" width="6.7" height="3.3" fill="#dfe2ea"/><rect x="93.8" y="145.1" width="12.3" height="6.8" fill="#2a2f45"/><rect x="106.8" y="145.8" width="13.2" height="3.4" fill="#a9b3c8"/><rect x="120.6" y="145.3" width="7.9" height="6.0" fill="#232a42"/><rect x="129.2" y="145.4" width="12.8" height="4.3" fill="#d4d0d2"/><rect x="143.1" y="145.6" width="8.8" height="6.0" fill="#4f78b0"/><rect x="152.3" y="145.9" width="6.3" height="5.2" fill="#7a6a7a"/><rect x="159.2" y="145.3" width="11.2" height="4.1" fill="#5b86bd"/><rect x="171.6" y="145.4" width="13.4" height="5.8" fill="#8a7f92"/><rect x="186.2" y="144.4" width="12.0" height="5.4" fill="#141826"/><rect x="198.5" y="144.6" width="15.5" height="4.8" fill="#44628f"/><rect x="215.1" y="144.9" width="7.5" height="4.0" fill="#1c2236"/><rect x="222.9" y="145.4" width="15.5" height="6.3" fill="#5b86bd"/><rect x="238.6" y="144.7" width="7.3" height="5.9" fill="#a9b3c8"/><rect x="246.0" y="144.4" width="14.9" height="4.4" fill="#141826"/><rect x="-5.1" y="148.9" width="14.0" height="6.7" fill="#c9cfdc"/><rect x="9.5" y="148.8" width="11.5" height="6.7" fill="#8a7f92"/><rect x="21.9" y="149.6" width="15.8" height="5.1" fill="#8a7f92"/><rect x="38.4" y="149.7" width="6.1" height="6.0" fill="#4f78b0"/><rect x="45.7" y="149.4" width="11.7" height="5.1" fill="#6c93c6"/><rect x="57.7" y="149.2" width="16.7" height="6.4" fill="#7a6a7a"/><rect x="74.8" y="149.8" width="11.8" height="6.4" fill="#5b86bd"/><rect x="87.5" y="149.1" width="12.3" height="5.7" fill="#8a7f92"/><rect x="100.4" y="149.2" width="16.2" height="4.5" fill="#8a7f92"/><rect x="116.9" y="149.1" width="11.5" height="4.6" fill="#6c93c6"/><rect x="128.7" y="149.9" width="8.6" height="4.1" fill="#b7bfd0"/><rect x="138.3" y="150.2" width="8.9" height="7.2" fill="#8a7f92"/><rect x="147.3" y="149.6" width="14.7" height="6.2" fill="#dfe2ea"/><rect x="162.7" y="150.2" width="11.0" height="5.1" fill="#5b86bd"/><rect x="174.6" y="149.4" width="10.9" height="6.3" fill="#f0c560"/><rect x="186.1" y="150.1" width="13.9" height="3.9" fill="#b9583a"/><rect x="200.6" y="148.8" width="13.9" height="5.2" fill="#a9b3c8"/><rect x="215.6" y="149.4" width="16.0" height="3.8" fill="#1a1f33"/><rect x="231.9" y="150.5" width="9.6" height="3.9" fill="#d99a3a"/><rect x="242.6" y="150.3" width="15.6" height="6.5" fill="#141826"/><rect x="-3.2" y="154.5" width="16.9" height="6.8" fill="#b7bfd0"/><rect x="14.5" y="155.2" width="12.1" height="7.1" fill="#dfe2ea"/><rect x="26.7" y="154.8" width="16.8" height="6.2" fill="#2a2f45"/><rect x="44.1" y="153.5" width="15.0" height="5.4" fill="#1c2236"/><rect x="59.8" y="154.3" width="15.4" height="5.2" fill="#5b86bd"/><rect x="75.5" y="154.4" width="15.0" height="4.6" fill="#35527d"/><rect x="91.4" y="154.4" width="13.6" height="7.0" fill="#7a6a7a"/><rect x="105.9" y="154.0" width="13.0" height="6.6" fill="#141826"/><rect x="119.8" y="154.3" width="7.4" height="3.6" fill="#8f4a3e"/><rect x="127.3" y="155.2" width="7.4" height="5.1" fill="#3e669e"/><rect x="135.7" y="153.7" width="10.2" height="5.0" fill="#c0442a"/><rect x="146.8" y="154.3" width="7.0" height="3.9" fill="#2a2f45"/><rect x="155.0" y="154.0" width="16.0" height="6.1" fill="#a9b3c8"/><rect x="172.0" y="155.2" width="10.6" height="7.4" fill="#232a42"/><rect x="182.9" y="155.2" width="15.0" height="5.6" fill="#a9b3c8"/><rect x="198.8" y="154.5" width="10.2" height="4.7" fill="#c0442a"/><rect x="209.1" y="154.9" width="8.0" height="5.1" fill="#5b86bd"/><rect x="217.8" y="154.8" width="17.0" height="5.2" fill="#6c93c6"/><rect x="235.6" y="153.5" width="6.4" height="4.1" fill="#1c2236"/><rect x="242.8" y="154.8" width="9.8" height="6.6" fill="#5b86bd"/><rect x="-4.7" y="158.5" width="12.9" height="5.8" fill="#44628f"/><rect x="8.6" y="160.1" width="6.6" height="3.9" fill="#1c2236"/><rect x="15.3" y="159.6" width="15.7" height="7.3" fill="#7a6a7a"/><rect x="31.2" y="159.9" width="16.9" height="5.0" fill="#dfe2ea"/><rect x="48.8" y="159.6" width="17.9" height="7.9" fill="#3e669e"/><rect x="67.7" y="159.5" width="8.8" height="4.1" fill="#4f78b0"/><rect x="76.5" y="159.8" width="8.7" height="8.0" fill="#8a7f92"/><rect x="86.0" y="159.1" width="13.6" height="3.9" fill="#1a1f33"/><rect x="100.2" y="158.7" width="11.4" height="7.2" fill="#5b86bd"/><rect x="112.7" y="159.6" width="12.9" height="4.4" fill="#3e669e"/><rect x="126.1" y="160.0" width="9.0" height="4.5" fill="#141826"/><rect x="136.2" y="158.9" width="15.2" height="7.0" fill="#141826"/><rect x="152.1" y="160.0" width="14.7" height="3.7" fill="#c9cfdc"/><rect x="167.9" y="158.4" width="11.5" height="7.1" fill="#c9704a"/><rect x="179.7" y="159.3" width="17.6" height="3.8" fill="#232a42"/><rect x="197.7" y="159.9" width="16.5" height="7.4" fill="#2a2f45"/><rect x="215.1" y="159.7" width="8.3" height="4.1" fill="#5b86bd"/><rect x="223.5" y="159.6" width="14.4" height="7.6" fill="#141826"/><rect x="238.0" y="159.3" width="16.9" height="4.6" fill="#c0442a"/><rect x="-3.6" y="164.6" width="15.2" height="5.1" fill="#4f78b0"/><rect x="11.8" y="164.2" width="8.2" height="6.4" fill="#1a1f33"/><rect x="20.2" y="164.7" width="13.2" height="5.9" fill="#dfe2ea"/><rect x="34.6" y="165.2" width="7.9" height="6.9" fill="#a9b3c8"/><rect x="43.3" y="165.2" width="6.8" height="6.0" fill="#1c2236"/><rect x="51.0" y="164.2" width="12.3" height="3.9" fill="#b7bfd0"/><rect x="63.4" y="163.9" width="15.5" height="8.2" fill="#2a2f45"/><rect x="79.4" y="164.7" width="13.0" height="7.3" fill="#232a42"/><rect x="93.6" y="164.7" width="7.3" height="5.2" fill="#2a2f45"/><rect x="102.1" y="164.2" width="17.4" height="7.8" fill="#4f78b0"/><rect x="120.3" y="163.6" width="13.5" height="6.6" fill="#1a1f33"/><rect x="134.1" y="164.7" width="10.2" height="7.3" fill="#1a1f33"/><rect x="144.3" y="164.6" width="13.3" height="7.9" fill="#44628f"/><rect x="158.1" y="164.8" width="13.0" height="7.0" fill="#1a1f33"/><rect x="171.6" y="164.8" width="12.1" height="5.1" fill="#8f4a3e"/><rect x="184.5" y="163.5" width="15.5" height="6.9" fill="#e9b24a"/><rect x="200.9" y="163.9" width="13.3" height="4.1" fill="#dfe2ea"/><rect x="215.0" y="164.2" width="16.6" height="4.4" fill="#35527d"/><rect x="231.8" y="164.2" width="11.4" height="8.0" fill="#1a1f33"/><rect x="243.8" y="164.8" width="19.1" height="4.1" fill="#5b86bd"/></g>
<rect y="73" width="250" height="93" fill="url(#baDk)"/>
<g filter="url(#baB4)"><path d="M-10 72H260V80H-10z" fill="#8a9ac0" opacity=".45"/></g>
<!-- sagrada familia -->
<g filter="url(#baB05)" fill="#4a3a5c">
<path d="M108 84V58L109.500 48L111 58V66L112 50L113.500 42.500L115 50V62L118 60L119 48L120.500 43L122 48V58L124.500 56L125.500 47L126.500 45L128 47V58L131 58L132 48L133.500 45L135 48V60L135.500 52L137 49L138.500 52V66L142 67L146 66L149 70L150 84Z"/>
<path d="M112 66H136V84H112z" fill="#5e4a6a"/><path d="M119 76A3 3 0 0 1 125 76V84H119z" fill="#3f6a78"/>
<path d="M126 84H150V92H126z" fill="#5a4048"/><path d="M130 82H146V84H130z" fill="#f0d9a0" opacity=".8"/>
</g>
<path d="M136 166V158L138 154H144L146 158V166Z" fill="#c9803a" filter="url(#baB05)"/>
</svg></div>
<div class="ext"><svg style="left:9px;top:8.700px" width="18.400" height="18.400" viewBox="0 0 18.400 18.400" fill="none" stroke="#7b8b95" stroke-width="2"><path d="M8.800 2.400H1.600v14.400h14.400V9.600"/><path d="M11 1h6.400v6.400M17 1.400L6.600 11.800"/></svg></div>
<div class="chk"><svg style="left:8.500px;top:11px" width="19" height="15" viewBox="0 0 19 15" fill="none" stroke="#fff" stroke-width="2.100"><path d="M1.200 8.200l5.200 5 11.400-12"/></svg></div>
<h3 style="left:15.25px;top:176px;font-size:17.2px;line-height:17.2px;letter-spacing:-0.336px;color:#1c1c1c;">Barcelona</h3>
<i class="dv"></i>
<span style="left:15.25px;top:211px;font-size:11.3px;line-height:11.3px;font-weight:700;letter-spacing:0.201px;color:#222;">Asset Type</span>
<span style="left:82.50px;top:211px;font-size:11.3px;line-height:11.3px;letter-spacing:-0.094px;color:#444;">Image</span>
<div class="jpg"><span style="left:7.30px;top:5px;font-size:14.0px;line-height:14.0px;font-weight:700;color:#fff;">JPG</span></div>
</div>
</div>
<div id="mf"><div id="add"><span style="left:25.75px;top:13px;font-size:16.6px;line-height:16.6px;letter-spacing:-0.391px;-webkit-text-stroke:0.4px #fff;color:#fff;">Add media</span></div></div>
</div>
</body>
</html>
